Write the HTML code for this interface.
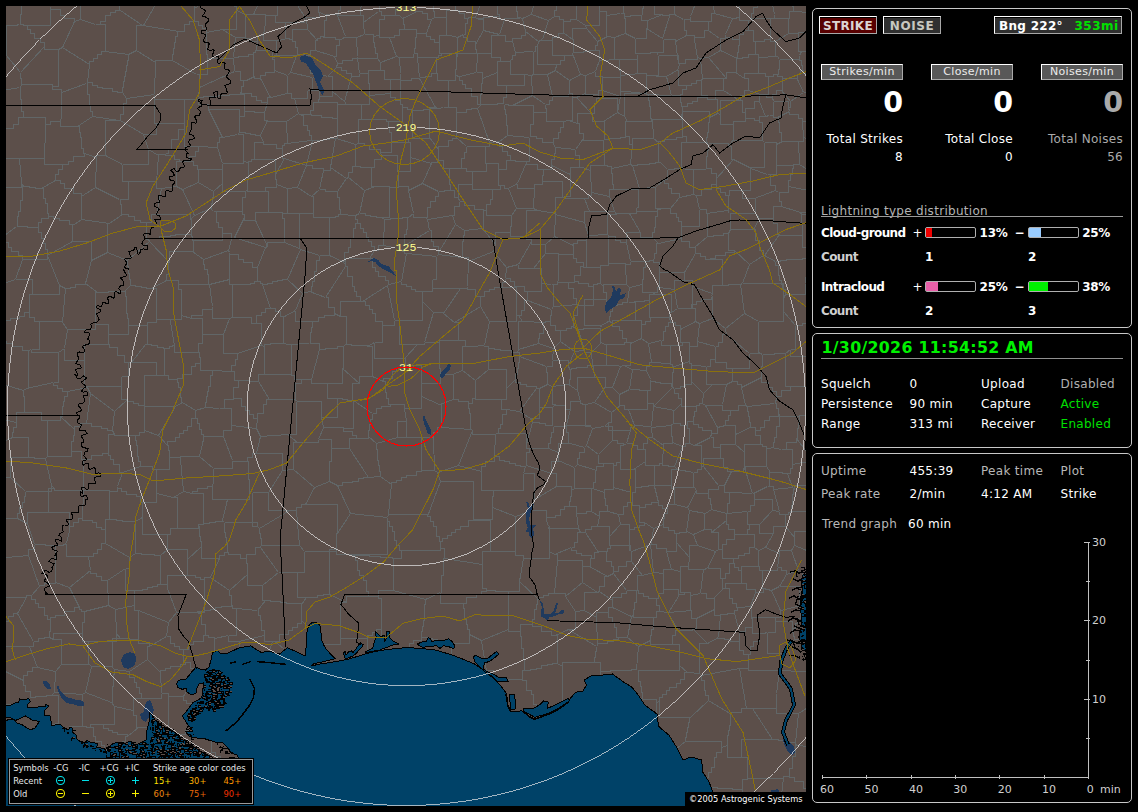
<!DOCTYPE html>
<html><head><meta charset="utf-8"><title>Lightning Map</title>
<style>
html,body{margin:0;padding:0;background:#000;}
body{width:1138px;height:812px;position:relative;overflow:hidden;font-family:"DejaVu Sans","Liberation Sans",sans-serif;color:#fff;}
.map{position:absolute;left:6px;top:6px;}
.legend{position:absolute;left:9px;top:759px;width:242px;height:43px;border:1px solid #9a9a9a;background:#000;box-sizing:content-box;outline:1px solid #000}
.lt{position:absolute;font-family:"DejaVu Sans Condensed","DejaVu Sans",sans-serif;font-size:9.3px;line-height:12px;color:#e8e8e8;white-space:nowrap}
.sym{position:absolute}
.copy{position:absolute;left:685px;top:792px;width:121px;height:14px;background:#000;color:#fff;font-family:"DejaVu Sans Condensed","DejaVu Sans",sans-serif;font-size:9.2px;line-height:14px;white-space:nowrap;text-align:left;padding-left:4px;box-sizing:border-box}
.pnl{position:absolute;border:1px solid #c8c8c8;border-radius:5px;box-sizing:content-box}
.btn{position:absolute;border:1px solid;border-color:#fff #a8a8a8 #a8a8a8 #fff;text-align:center;white-space:nowrap;box-sizing:content-box}
.btn.b{font-weight:bold;font-size:12px;line-height:18px;height:16px;overflow:visible;box-shadow:inset 0 1px 0 #000}
.btn.s{font-size:11px;line-height:14px;letter-spacing:.35px}
.big{position:absolute;font-weight:bold;font-size:28.5px;line-height:34px}
.t{position:absolute;font-size:12px;line-height:14px;white-space:nowrap;letter-spacing:.3px}
.t.r{text-align:right}
.t.b{font-weight:bold;letter-spacing:-.6px}
.hl{position:absolute;height:1px;background:#9a9a9a}
.bar{position:absolute;width:49px;height:9px;border:1px solid #b0b0b0;border-radius:2px;background:#000}
.bar i{display:block;height:9px}
.date{position:absolute;font-weight:bold;font-size:15.8px;line-height:20px;color:#00f200;white-space:nowrap;letter-spacing:.3px}
.graph{position:absolute}
.gt{font-family:"DejaVu Sans","Liberation Sans",sans-serif;font-size:11px;fill:#d0d0d0}
</style></head>
<body>
<svg class="map" width="800" height="800" viewBox="0 0 800 800" shape-rendering="crispEdges">
<rect width="800" height="800" fill="#5c4f4a"/>
<g transform="translate(.5 .5)"><path d="M783 767 L783 762 L785 762 L786 762 L786 756 L786 750 L788 750 L789 750 L789 745 L789 739 L790 739 M783 767 L783 771 L788 771 L788 775 L792 775 L797 775 L797 778 L797 782 L801 782 L801 786 L805 786 L810 786 L810 789 M814 741 L790 739 M783 767 L783 770 L780 770 L777 770 L777 772 M777 772 L772 813 M275 688 L255 688 L255 694 M275 688 L280 688 L280 692 L280 695 L286 695 L291 695 L291 698 M256 725 L255 694 M256 725 L256 728 L261 728 L261 731 L265 731 L265 734 L270 734 M291 698 L289 698 L289 703 L289 707 L286 707 L286 712 L283 712 L283 716 L281 716 L278 716 L278 720 L278 725 L275 725 L275 729 L273 729 L270 729 L270 734 M254 758 L234 758 L234 746 M254 758 L276 748 M234 746 L235 730 M235 730 L235 729 L241 729 L246 729 L246 728 L251 728 L251 726 L256 726 L256 725 M276 748 L270 734 M475 634 L502 623 M475 634 L480 664 M502 623 L502 625 L514 625 M480 664 L487 664 L487 673 M516 669 L516 673 L487 673 M516 669 L516 664 L519 664 M519 664 L518 664 L518 658 L518 653 L518 653 L517 653 L517 647 L517 642 L516 642 L515 642 L515 636 L515 630 L515 630 L514 630 L514 625 M235 730 L221 716 M251 692 L255 694 M251 692 L251 694 L245 694 L240 694 L240 695 L240 696 L234 696 L229 696 L229 698 L229 699 L223 699 M221 716 L223 699 M250 447 L254 430 M250 447 L276 447 L276 464 M254 430 L281 428 M276 464 L287 463 M287 463 L287 436 L291 436 M281 428 L291 436 M-8 279 L9 273 M-2 232 L-2 236 L2 236 L2 241 L5 241 L5 245 L9 245 L12 245 L12 249 L16 249 L16 253 M9 273 L16 253 M-2 229 L10 220 M10 220 L10 220 L15 220 L21 220 L21 221 L21 221 L26 221 L26 221 L32 221 M32 221 L32 226 L33 226 L35 226 L35 232 L37 232 L37 237 L39 237 L39 243 L41 243 L41 248 M16 253 L41 253 L41 248 M277 787 L284 813 M277 787 L289 762 M318 815 L320 815 L320 782 M320 782 L316 782 L316 779 L316 776 L311 776 L307 776 L307 773 L302 773 L302 770 L302 767 L298 767 L293 767 L293 765 L293 762 L289 762 M291 698 L302 698 L302 699 M302 699 L302 704 L303 704 L304 704 L304 710 L304 715 L305 715 L306 715 L306 720 L307 720 L307 726 L307 731 L309 731 L310 731 L310 736 M276 748 L287 754 M310 736 L310 740 L305 740 L301 740 L301 743 L296 743 L296 747 L291 747 L291 750 L291 754 L287 754 M254 758 L249 773 M234 746 L234 751 L229 751 L229 755 L223 755 M223 755 L223 778 L223 778 M249 773 L223 778 M277 787 L256 783 M289 762 L288 762 L288 758 L287 758 L287 754 M249 773 L256 773 L256 783 M256 783 L256 805 L244 805 M347 659 L341 659 L341 659 L341 659 L335 659 L335 659 L329 659 L323 659 L323 659 M347 659 L369 659 L369 673 M369 673 L367 673 L367 702 M316 689 L316 692 L321 692 L326 692 L326 696 L331 696 L331 699 L331 702 L335 702 L335 705 L340 705 L340 708 L345 708 M316 689 L323 689 L323 659 M345 708 L367 702 M572 522 L542 522 L542 520 M572 522 L570 507 M570 507 L570 500 L563 500 M542 520 L540 514 M563 500 L558 500 L558 503 L554 503 L554 506 L554 509 L549 509 L549 511 L545 511 L540 511 L540 514 M480 664 L475 664 L475 665 L470 665 L470 666 L465 666 L465 667 L460 667 L460 668 L460 669 L455 669 L455 670 L450 670 L444 670 L444 671 L444 672 L439 672 M462 709 L478 709 L478 704 M462 709 L437 691 M487 673 L478 673 L478 704 M437 691 L439 672 M475 634 L463 628 M446 637 L463 637 L463 628 M446 637 L445 637 L445 643 L445 649 L444 649 L444 654 L442 654 L441 654 L441 660 L441 666 L440 666 L439 666 L439 671 M439 671 L439 672 M631 664 L673 664 L673 659 M631 664 L632 664 L632 670 L632 675 L633 675 L634 675 L634 680 L635 680 L635 686 L636 686 L636 691 M636 691 L636 693 L643 693 L650 693 L650 696 M681 666 L678 666 L678 670 L678 673 L674 673 L674 677 L670 677 L670 681 L667 681 L663 681 L663 684 L660 684 L660 688 L656 688 L656 691 L653 691 L653 695 M681 666 L673 659 M650 696 L653 695 M613 706 L591 694 M613 706 L636 691 M630 663 L631 664 M630 663 L625 663 L625 664 L620 664 L620 664 L620 664 L614 664 L614 664 L609 664 L604 664 L604 665 L599 665 L599 665 L594 665 L594 665 M594 665 L591 694 M663 638 L644 638 L644 634 M663 638 L673 638 L673 659 M630 663 L632 640 M632 640 L644 634 M526 618 L526 620 L531 620 L535 620 L535 623 L535 625 L540 625 L545 625 L545 627 L545 629 L549 629 M526 618 L526 613 L527 613 L528 613 L528 608 L528 603 L530 603 L530 598 L531 598 L531 593 L532 593 M569 605 L559 590 M569 605 L569 623 L562 623 M562 623 L549 629 M532 593 L532 591 L537 591 L537 589 L542 589 L542 587 L548 587 M548 587 L559 587 L559 590 M519 664 L524 664 L524 663 L530 663 L530 662 L535 662 L535 660 L535 659 L541 659 L541 658 L546 658 L546 657 L551 657 M514 625 L514 618 L526 618 M551 657 L551 629 L549 629 M502 623 L502 585 L489 585 M489 585 L513 585 L513 575 M513 575 L532 593 M590 640 L562 623 M590 640 L590 645 L589 645 L589 651 L589 651 L588 651 L588 656 M588 656 L556 656 L556 660 M556 660 L551 657 M714 446 L714 441 L711 441 L707 441 L707 436 L707 431 L704 431 M714 446 L714 449 L714 449 L714 452 L713 452 M704 431 L688 439 M713 452 L697 452 L697 460 M697 460 L695 460 M695 460 L695 439 L688 439 M624 544 L624 539 L604 539 M624 544 L623 544 L623 523 M623 523 L623 518 L614 518 M614 518 L603 530 M604 539 L603 539 L603 535 L603 530 L603 530 M638 516 L633 516 L633 501 M638 516 L638 519 L633 519 L633 521 L628 521 L628 523 L623 523 M612 508 L614 518 M612 508 L617 508 L617 504 L617 500 L621 500 L621 496 L626 496 M626 496 L626 499 L630 499 L633 499 L633 501 M598 545 L595 545 L595 545 L592 545 L592 546 M598 545 L601 545 L601 542 L604 542 L604 539 M579 526 L592 546 M579 526 L579 523 L585 523 L585 520 L591 520 M591 520 L603 520 L603 530 M591 520 L593 510 M612 508 L602 505 M602 505 L593 505 L593 510 M572 522 L574 526 M570 507 L575 507 L575 507 L580 507 L580 506 L580 505 L585 505 M574 526 L574 526 L577 526 L579 526 L579 526 M585 505 L593 510 M598 486 L586 482 M598 486 L598 492 L599 492 L599 499 L601 499 L601 505 L602 505 M585 505 L585 482 M585 482 L586 482 M221 716 L205 725 M223 755 L223 753 L219 753 L214 753 L214 750 L209 750 L209 748 L209 746 L205 746 M205 725 L205 725 L205 746 M99 523 L95 523 L95 521 L90 521 L90 518 L90 516 L86 516 L86 514 L81 514 L76 514 L76 512 M99 523 L99 537 M99 537 L95 537 L95 540 L95 543 L91 543 L91 547 L87 547 L87 550 L82 550 M82 550 L60 550 L60 537 M76 512 L72 512 L72 516 L67 516 L67 520 L63 520 L63 524 M63 524 L60 537 M246 486 L243 484 M246 486 L262 486 M262 486 L276 464 M250 447 L246 447 L246 451 L241 451 L241 455 M241 455 L242 455 L242 461 L242 467 L242 467 L242 473 L242 473 L243 473 L243 478 L243 484 L243 484 M253 522 L283 504 M253 522 L253 527 L254 527 L254 532 L255 532 L255 538 L255 538 M255 538 L255 539 L293 539 M293 539 L290 505 M290 505 L290 504 L287 504 L283 504 L283 504 M251 520 L246 520 L246 486 M251 520 L253 522 M262 486 L262 504 L283 504 M256 579 L241 579 L241 568 M256 579 L272 566 M272 566 L254 541 M241 568 L241 563 L241 563 L241 557 L240 557 L240 557 L240 552 M254 541 L249 541 L249 545 L249 548 L244 548 L240 548 L240 552 M298 545 L298 566 L291 566 M298 545 L293 539 M291 566 L272 566 M255 538 L254 541 M77 484 L76 512 M77 484 L103 484 L103 485 M99 523 L99 513 L110 513 M103 485 L103 513 L110 513 M287 463 L308 481 M291 436 L312 436 L312 433 M325 455 L325 433 L312 433 M325 455 L323 455 L323 475 M323 475 L308 481 M290 505 L290 501 L295 501 L295 498 L299 498 M299 498 L308 481 M370 437 L362 430 M370 437 L370 443 L371 443 L371 443 L371 448 L371 454 L372 454 L372 459 L373 459 L373 465 L373 465 L374 465 L374 470 M374 470 L362 471 M362 471 L343 442 M362 430 L362 432 L350 432 M350 432 L343 432 L343 442 M325 455 L325 442 L343 442 M323 475 L331 479 M331 479 L336 479 L336 478 L336 476 L341 476 L346 476 L346 475 L352 475 L352 474 L352 472 L357 472 L357 471 L362 471 M6 431 L-19 443 M6 431 L6 426 L7 426 L7 421 L8 421 L10 421 L10 416 M10 416 L-24 408 M-7 318 L-4 318 L-4 324 L-2 324 L-2 329 L-2 335 L0 335 M0 335 L-18 335 L-18 367 M10 416 L10 406 L18 406 M-16 374 L17 384 M18 406 L18 406 L18 400 L18 400 L18 395 L18 390 L17 390 L17 390 L17 384 M22 344 L16 344 L16 342 L16 340 L11 340 L6 340 L6 337 L0 337 L0 335 M22 344 L22 382 L20 382 M20 382 L17 384 M68 423 L54 410 M68 423 L68 429 L67 429 L67 435 L66 435 L65 435 L65 441 M41 450 L65 450 L65 441 M41 450 L41 414 L35 414 M35 414 L54 414 L54 410 M-10 9 L-10 19 L9 19 M9 19 L13 18 M13 18 L14 18 L14 13 L14 8 L14 8 L15 8 L15 3 L15 -2 L15 -2 L15 -7 L16 -7 L17 -7 L17 -13 L17 -13 L17 -18 M44 0 L44 19 L21 19 M21 19 L17 19 L17 18 L17 18 L13 18 M44 0 L44 3 L49 3 L54 3 L54 6 L54 9 L58 9 L58 12 L63 12 L68 12 L68 15 M52 43 L56 41 M52 43 L38 43 L38 40 M21 19 L21 23 L24 23 L24 27 L28 27 L28 32 L31 32 L34 32 L34 36 L38 36 L38 40 M56 41 L68 15 M81 -18 L74 -18 L74 13 M68 15 L74 13 M192 346 L193 346 L193 351 L194 351 L194 357 M192 346 L168 346 L168 339 M194 357 L189 357 L189 360 L185 360 L185 364 L185 368 L180 368 L176 368 L176 372 L171 372 L171 376 M158 369 L158 342 L163 342 M158 369 L162 369 L162 371 L162 373 L167 373 L171 373 L171 376 M168 339 L166 339 L166 340 L163 340 L163 342 M150 369 L150 356 L125 356 M150 369 L158 369 M125 356 L139 338 M163 342 L157 342 L157 341 L151 341 L151 340 L151 339 L145 339 L145 338 L139 338 M369 673 L394 658 M367 702 L379 711 M394 658 L396 658 L396 663 L396 668 L398 668 L398 672 L400 672 L402 672 L402 677 L402 682 L405 682 L405 686 L407 686 L409 686 L409 691 L411 691 L411 695 M379 711 L411 695 M437 691 L420 691 L420 698 M398 650 L398 658 L394 658 M398 650 L439 671 M420 698 L411 695 M419 735 L399 743 M419 735 L420 698 M379 711 L385 711 L385 735 M385 735 L389 735 L389 738 L389 740 L394 740 L399 740 L399 743 M419 735 L425 735 L425 737 L431 737 L431 738 L437 738 L437 740 L437 742 L443 742 M403 778 L399 743 M403 778 L428 778 L428 774 M428 774 L443 742 M462 709 L452 709 L452 739 M452 739 L452 742 L443 742 M488 710 L488 704 L478 704 M488 710 L493 710 L493 735 M452 739 L452 758 L470 758 M493 735 L493 739 L489 739 L489 743 L485 743 L485 747 L481 747 L478 747 L478 750 L474 750 L474 754 L470 754 L470 758 M447 788 L442 788 L442 784 L442 781 L438 781 L438 778 L433 778 L433 774 L428 774 M447 788 L452 788 L452 786 L457 786 L457 785 L462 785 L462 784 L466 784 L466 783 L466 781 L471 781 L471 780 L476 780 M470 758 L470 777 L478 777 M476 780 L478 777 M725 465 L721 465 L721 461 L717 461 L717 457 L717 452 L713 452 M725 465 L718 479 M697 460 L712 479 M718 479 L712 479 M737 462 L739 464 M737 462 L737 465 L725 465 M724 486 L718 486 L718 479 M724 486 L746 487 M739 464 L746 487 M766 504 L766 493 L748 493 M766 504 L753 518 M748 493 L748 499 L744 499 L744 505 L741 505 M741 505 L741 518 L746 518 M746 518 L746 518 L750 518 L753 518 L753 518 M808 385 L808 380 L784 380 M816 409 L793 409 L793 417 M793 417 L793 410 L774 410 M784 380 L784 384 L780 384 L775 384 L775 387 L775 390 L770 390 M768 397 L770 397 L770 402 L772 402 L772 407 M768 397 L769 397 L769 394 L770 394 L770 390 M772 407 L774 410 M784 343 L784 350 L801 350 M784 343 L779 347 M779 347 L779 380 L784 380 M693 667 L695 669 M693 667 L681 666 M695 669 L695 674 L696 674 L698 674 L698 679 L698 684 L699 684 L699 689 L700 689 L702 689 L702 694 M653 695 L653 711 L684 711 M702 694 L684 711 M330 773 L330 768 L329 768 L328 768 L328 762 L327 762 L327 756 L327 750 L326 750 L326 745 L325 745 L325 739 L324 739 M330 773 L357 770 M361 751 L359 751 L359 757 L358 757 L358 764 L358 770 L357 770 M361 751 L337 733 M337 733 L324 733 L324 739 M320 782 L330 782 L330 773 M310 736 L310 738 L317 738 L324 738 L324 739 M345 708 L337 708 L337 733 M385 735 L361 751 M302 699 L316 689 M223 778 L219 782 M219 782 L219 805 L232 805 M565 541 L565 544 L570 544 L570 547 L575 547 L575 549 L580 549 L585 549 L585 552 M565 541 L548 548 M548 548 L551 548 L551 554 M551 554 L576 554 L576 568 M576 568 L576 560 L583 560 M583 560 L584 560 L584 556 L584 552 L585 552 M574 526 L571 526 L571 531 L571 536 L568 536 L568 541 L565 541 M592 546 L588 546 L588 549 L588 552 L585 552 M543 545 L548 548 M543 545 L543 520 L542 520 M543 545 L543 552 L517 552 M513 575 L517 552 M548 587 L551 554 M576 576 L559 590 M576 576 L576 576 L576 572 L576 568 L576 568 M591 639 L590 611 M591 639 L590 640 M569 605 L578 604 M590 611 L578 604 M576 576 L591 586 M578 604 L578 586 L591 586 M668 404 L667 404 L667 417 M668 404 L675 397 M687 415 L681 415 L681 422 M687 415 L687 410 L688 410 L688 405 L689 405 L690 405 L690 400 M690 400 L675 400 L675 397 M667 417 L674 417 L674 419 L681 419 L681 422 M687 415 L687 418 L692 418 L692 421 L696 421 L696 424 L700 424 L705 424 L705 427 M704 431 L705 427 M688 439 L683 437 M681 422 L683 422 L683 437 M583 560 L601 570 M591 586 L593 585 M601 570 L598 570 L598 575 L598 580 L596 580 L593 580 L593 585 M790 739 L789 737 M792 707 L789 737 M792 707 L819 690 M680 525 L683 504 M680 525 L680 526 L676 526 L673 526 L673 527 M661 502 L661 498 L668 498 M661 502 L661 507 L660 507 L658 507 L658 512 L657 512 L657 518 M668 498 L681 501 M681 501 L683 504 M673 527 L668 527 L668 524 L662 524 L662 521 L657 521 L657 518 M638 516 L647 522 M633 501 L639 501 L639 500 L639 498 L645 498 L645 496 L652 496 M652 496 L652 499 L656 499 L656 502 L661 502 M647 522 L657 518 M625 545 L644 538 M625 545 L624 544 M647 522 L645 538 M644 538 L645 538 M563 500 L563 495 L564 495 L564 495 L564 490 L565 490 L565 484 M585 482 L568 482 M565 484 L568 482 M627 463 L614 463 L614 456 M627 463 L629 463 L629 481 M607 481 L607 459 M607 481 L625 486 M607 459 L610 459 L610 458 L610 456 L614 456 M625 486 L629 486 L629 481 M598 486 L598 483 L602 483 L607 483 L607 481 M586 482 L587 482 L587 476 L589 476 L589 470 L589 464 L590 464 M590 464 L590 460 L594 460 L597 460 L597 457 M597 457 L607 457 L607 459 M626 496 L626 486 L625 486 M205 725 L205 719 L185 719 M205 746 L195 754 M179 745 L195 745 L195 754 M179 745 L173 728 M173 728 L179 728 L179 724 L185 724 L185 719 M223 699 L220 695 M220 695 L220 696 L215 696 L210 696 L210 696 L204 696 L204 696 L199 696 L199 696 L199 697 L193 697 L193 697 L188 697 L182 697 L182 697 M185 719 L185 697 L182 697 M189 668 L177 690 M189 668 L208 666 M220 695 L213 669 M208 666 L213 669 M182 697 L180 697 L180 694 L177 694 L177 690 M-4 773 L-2 773 L-2 779 L1 779 L1 786 M46 755 L46 776 L45 776 M46 755 L46 747 L25 747 M45 776 L1 786 M25 747 L-5 754 M25 747 L29 720 M29 720 L21 714 M21 714 L-5 714 L-5 729 M177 643 L182 643 L182 641 L182 638 L187 638 L187 635 L192 635 L197 635 L197 632 L197 629 L202 629 M177 643 L177 656 L179 656 M179 656 L184 656 L184 662 L189 662 L189 668 M208 666 L208 632 M208 632 L208 631 L205 631 L202 631 L202 629 M291 566 L291 591 L300 591 M300 591 L295 598 M256 579 L256 594 L259 594 M259 594 L264 594 L264 595 L264 595 L269 595 L274 595 L274 596 L274 596 L280 596 L280 597 L285 597 L285 597 L290 597 L295 597 L295 598 M80 453 L75 453 L75 449 L75 445 L70 445 L65 445 L65 441 M80 453 L85 453 L85 451 L85 449 L91 449 L96 449 L96 447 L102 447 L102 445 M80 417 L74 417 L74 420 L68 420 L68 423 M80 417 L85 417 L85 418 L85 420 L90 420 L95 420 L95 421 L95 422 L101 422 L101 424 L106 424 M102 445 L102 428 L108 428 M106 424 L108 428 M80 453 L77 453 L77 484 M77 484 L77 484 M102 445 L102 449 L104 449 L104 453 L107 453 L107 458 L110 458 L113 458 L113 462 L113 466 L116 466 M103 485 L111 485 L111 480 M116 466 L111 480 M331 479 L344 507 M374 470 L385 478 M385 478 L382 508 M382 508 L381 511 M344 507 L381 511 M299 498 L331 498 L331 527 M344 507 L331 527 M298 545 L330 545 L330 543 M331 527 L330 527 L330 543 M323 588 L317 588 L317 589 L311 589 L311 590 L311 591 L305 591 L305 591 L300 591 M323 588 L323 543 L330 543 M330 543 L330 543 M49 576 L49 539 L56 539 M49 576 L49 577 L44 577 L38 577 L38 579 L33 579 L33 580 M28 538 L28 543 L25 543 L22 543 L22 549 M28 538 L28 538 L34 538 L39 538 L39 539 L39 539 L45 539 L45 539 L51 539 L56 539 L56 539 M22 549 L33 580 M-4 513 L-4 512 L4 512 L11 512 L11 512 M28 538 L21 517 M-10 552 L22 549 M21 517 L11 512 M63 524 L63 506 L42 506 M60 537 L56 539 M21 517 L21 506 L42 506 M77 484 L48 484 L48 482 M42 506 L42 482 L48 482 M9 273 L26 273 L26 288 M-6 317 L-1 317 L-1 316 L-1 314 L4 314 L4 312 L8 312 L13 312 L13 310 L18 310 L18 308 L18 306 L23 306 M26 288 L23 288 L23 306 M25 343 L33 343 L33 315 M25 343 L22 344 M23 306 L23 311 L28 311 L28 315 L33 315 M125 356 L122 356 M139 338 L141 338 L141 319 M141 319 L122 319 L122 312 M122 312 L122 328 L102 328 M102 328 L102 333 L102 333 L102 338 L103 338 M122 356 L118 356 L118 353 L118 349 L115 349 L111 349 L111 345 L111 341 L107 341 L103 341 L103 338 M702 15 L684 15 L684 10 M702 15 L705 15 L705 11 L705 7 L708 7 M691 -8 L684 10 M706 -6 L708 7 M405 74 L394 74 L394 67 M405 74 L394 74 L394 94 M394 67 L394 73 L383 73 M383 73 L384 73 L384 80 L384 87 L384 87 M394 94 L389 94 L389 91 L384 91 L384 87 M89 18 L74 13 M89 18 L94 18 L94 15 L99 15 L99 12 L99 9 L104 9 L104 6 L109 6 L109 4 L114 4 M111 -18 L111 -13 L112 -13 L113 -13 L113 -7 L113 -2 L113 -2 L113 4 L114 4 M26 288 L53 288 L53 279 M33 315 L38 315 L38 315 L44 315 L44 315 L50 315 L50 315 L56 315 L56 316 M56 316 L59 282 M59 282 L53 279 M41 248 L41 249 M53 279 L41 249 M32 221 L32 216 L35 216 L35 212 L39 212 L42 212 L42 207 M42 207 L42 210 L47 210 L47 212 L53 212 L53 214 L58 214 L63 214 L63 216 L63 218 L68 218 M68 218 L66 218 L66 235 M41 249 L66 235 M10 220 L11 220 L11 215 L11 210 L12 210 L12 205 L13 205 L14 205 L14 200 L14 194 L15 194 L16 194 L16 189 L16 189 L16 184 L16 179 L17 179 M42 207 L41 207 L41 202 L41 197 L39 197 L39 192 L38 192 L37 192 L37 187 L37 182 L35 182 M17 179 L17 180 L23 180 L23 181 L29 181 L29 182 L35 182 M447 788 L433 818 M476 780 L476 814 L478 814 M403 803 L403 779 M403 779 L362 777 M362 777 L359 777 L359 812 M403 778 L403 779 M357 770 L362 770 L362 777 M516 669 L516 674 L518 674 L520 674 L520 679 L520 684 L523 684 L525 684 L525 688 L527 688 L527 693 L527 698 L530 698 L530 703 L532 703 M488 710 L524 712 M532 703 L532 708 L528 708 L528 712 L524 712 M556 660 L556 702 M532 703 L556 702 M594 665 L594 656 L588 656 M591 694 L591 707 L565 707 M556 702 L561 702 L561 704 L565 704 L565 707 M613 706 L613 741 L618 741 M569 729 L565 707 M569 729 L595 747 M595 747 L595 746 L600 746 L600 744 L606 744 L606 743 L612 743 L618 743 L618 741 M653 735 L650 735 L650 696 M653 735 L653 737 L647 737 L647 738 L642 738 L636 738 L636 739 L636 740 L631 740 L631 742 L625 742 L625 743 L620 743 M620 743 L618 741 M508 775 L508 777 L478 777 M508 775 L521 775 L521 820 M598 420 L602 416 M598 420 L606 420 L606 434 M602 416 L602 424 L624 424 M606 434 L611 434 L611 437 L617 437 L617 439 M624 424 L620 437 M620 437 L617 439 M586 422 L580 439 M586 422 L598 420 M580 439 L592 448 M592 448 L606 434 M592 448 L592 457 L597 457 M614 456 L614 439 L617 439 M627 463 L639 455 M639 455 L639 443 L637 443 M637 443 L631 443 L631 441 L631 439 L626 439 L626 437 L620 437 M488 450 L493 450 L493 452 L493 454 L498 454 L498 455 L503 455 L503 457 L509 457 L509 459 L514 459 L514 460 L519 460 M488 450 L489 428 M490 427 L489 428 M490 427 L520 427 L520 438 M520 459 L519 460 M520 459 L520 446 L523 446 M520 438 L520 442 L521 442 L523 442 L523 446 M807 454 L790 432 M790 432 L791 432 L791 427 L791 422 L792 422 L792 417 L793 417 M729 438 L729 438 L729 433 L729 433 L729 428 M729 438 L738 446 M729 428 L744 421 M738 446 L738 438 L756 438 M756 438 L754 438 L754 434 L754 429 L752 429 L749 429 L749 424 M749 424 L749 421 L744 421 M714 446 L714 438 L729 438 M711 421 L711 427 L705 427 M711 421 L719 419 M719 419 L729 419 L729 428 M737 462 L738 462 L738 446 M719 419 L719 414 L722 414 L722 409 L724 409 L724 404 L726 404 M741 400 L741 405 L741 405 L742 405 L742 410 L743 410 L743 416 L744 416 L744 421 M741 400 L739 399 M726 404 L732 404 L732 401 L732 399 L739 399 M741 400 L768 397 M772 407 L772 410 L767 410 L763 410 L763 414 L758 414 L758 417 L758 421 L754 421 L754 424 L749 424 M739 807 L736 783 M690 810 L690 781 L700 781 M700 781 L705 781 L705 781 L711 781 L711 781 L711 782 L716 782 L721 782 L721 782 L721 782 L726 782 L726 783 L731 783 L731 783 L736 783 M777 772 L741 772 L741 773 M789 737 L789 736 L783 736 L777 736 L777 735 L777 734 L772 734 L772 733 L766 733 M766 733 L735 733 L735 751 M735 751 L741 751 L741 773 M741 773 L736 773 L736 783 M670 742 L679 735 M670 742 L671 763 M679 735 L715 735 L715 741 M671 763 L677 763 L677 766 L682 766 L682 768 L687 768 L687 771 L687 773 L692 773 L692 776 L697 776 M697 776 L697 771 L700 771 L702 771 L702 766 L705 766 L705 761 L708 761 L708 756 L708 751 L710 751 L710 746 L713 746 L715 746 L715 741 M653 735 L670 742 M684 711 L683 711 L683 716 L682 716 L682 721 L681 721 L681 726 L680 726 L680 731 L679 731 L679 735 M702 694 L725 708 M725 708 L724 708 L724 714 L724 719 L723 719 L723 724 L723 724 L722 724 L722 729 L721 729 L721 734 L721 739 L721 739 M721 739 L715 741 M700 781 L697 776 M721 739 L721 751 L735 751 M733 662 L742 662 L742 654 M733 662 L740 702 M742 654 L742 664 L773 664 M773 664 L770 687 M770 687 L770 702 L746 702 M740 702 L743 702 L743 702 L746 702 L746 702 M693 667 L693 637 L701 637 M695 669 L733 662 M701 637 L712 631 M712 631 L712 632 L718 632 L718 633 L724 633 L724 635 L729 635 M729 635 L733 635 L733 639 L733 644 L737 644 L737 648 L740 648 M740 648 L742 648 L742 654 M725 708 L725 706 L730 706 L735 706 L735 704 L735 702 L740 702 M792 707 L770 707 L770 687 M766 733 L746 702 M663 638 L666 638 L666 633 L666 629 L669 629 L669 624 L672 624 M701 637 L686 622 M672 624 L686 624 L686 622 M712 631 L714 609 M686 622 L690 622 L690 612 M690 612 L708 603 M714 609 L708 609 L708 603 M134 780 L134 756 L135 756 M134 780 L140 786 M163 764 L163 770 L163 770 L163 775 L164 775 L164 775 L164 780 M163 764 L160 764 L160 759 L156 759 L156 754 L153 754 L153 749 L153 744 L149 744 M135 756 L149 744 M140 786 L164 780 M361 632 L361 659 L347 659 M361 632 L361 629 L366 629 L366 626 L370 626 L370 623 L375 623 M398 650 L399 650 L399 647 L399 647 L399 644 M375 623 L375 644 L399 644 M446 637 L446 636 L441 636 L436 636 L436 635 L431 635 L431 634 L431 633 L426 633 L426 632 L421 632 L421 631 L415 631 M399 644 L399 641 L403 641 L403 637 L407 637 L407 634 L411 634 L415 634 L415 631 M463 628 L463 623 L461 623 L461 618 L460 618 L460 613 L459 613 L458 613 L458 607 L458 602 L457 602 L457 597 L455 597 M489 585 L489 584 L485 584 L480 584 L480 582 M480 582 L480 585 L475 585 L475 588 L470 588 L470 591 L465 591 L460 591 L460 594 L460 597 L455 597 M419 593 L419 593 L419 598 L418 598 L418 603 L418 609 L418 609 L418 614 L417 614 L417 614 L417 620 L416 620 L416 625 L415 625 L415 631 M419 593 L434 586 M455 597 L434 597 L434 586 M602 606 L602 601 L606 601 M602 606 L602 611 L604 611 L606 611 L606 616 L608 616 L608 621 L610 621 L610 626 L610 631 L612 631 M606 601 L625 610 M625 610 L621 631 M612 631 L616 631 L616 631 L621 631 L621 631 M590 611 L590 606 L602 606 M593 585 L606 594 M606 594 L606 597 L606 597 L606 601 L606 601 M591 639 L591 637 L596 637 L601 637 L601 635 L607 635 L607 633 L612 633 L612 631 M632 640 L621 631 M644 634 L644 629 L645 629 L645 623 L646 623 L647 623 L647 617 L647 617 L647 611 M627 609 L627 611 L647 611 M627 609 L625 610 M625 555 L636 569 M625 555 L620 555 L620 558 L620 560 L616 560 L612 560 L612 563 L612 565 L607 565 M607 565 L607 567 M607 567 L620 584 M636 569 L631 569 L631 583 M631 583 L631 584 L620 584 M625 545 L625 550 L625 550 L625 555 L625 555 M647 566 L644 538 M647 566 L636 569 M598 545 L600 545 L600 550 L600 555 L602 555 L605 555 L605 560 L607 560 L607 565 M601 570 L607 567 M606 594 L606 591 L610 591 L615 591 L615 587 L620 587 L620 584 M632 584 L630 584 L630 590 L630 596 L629 596 L628 596 L628 603 L627 603 L627 609 M632 584 L631 583 M632 584 L632 587 L637 587 L637 590 L642 590 L642 592 L647 592 M647 611 L650 611 L650 608 L650 605 L653 605 M647 592 L650 592 L650 599 L653 599 L653 605 M672 624 L661 606 M653 605 L661 606 M690 612 L685 612 L685 604 M685 604 L662 606 M661 606 L662 606 M773 547 L773 544 L785 544 M773 547 L771 561 M771 561 L775 561 L775 564 L780 564 L780 568 M780 568 L792 564 M792 564 L785 544 M791 600 L793 600 L793 589 M791 600 L774 604 M793 589 L793 580 L773 580 M774 604 L765 584 M765 584 L773 580 M780 568 L773 580 M792 564 L792 566 L796 566 L796 568 L800 568 M793 589 L793 585 L796 585 L799 585 L799 582 M799 582 L799 568 L800 568 M771 561 L771 564 L756 564 M765 584 L757 582 M756 564 L756 564 L756 570 L756 576 L756 576 L756 582 L757 582 M629 481 L635 481 L635 480 L642 480 L642 480 L642 479 L648 479 M639 455 L639 459 L651 459 M651 459 L648 459 L648 479 M652 496 L648 480 M648 479 L648 480 M702 487 L702 483 L707 483 L712 483 L712 479 M702 487 L702 492 L703 492 L704 492 L704 498 L705 498 L705 503 M724 486 L723 486 L723 491 L723 497 L722 497 L721 497 L721 502 L721 507 L720 507 M705 503 L720 507 M690 484 L681 501 M690 484 L690 487 L702 487 M683 504 L699 507 M705 503 L699 507 M746 487 L747 487 M747 487 L748 487 L748 493 M741 505 L720 507 M720 507 L720 507 M664 419 L665 419 L665 425 L665 430 L666 430 L666 436 L666 436 M664 419 L645 421 M645 421 L646 431 M646 431 L657 439 M666 436 L666 437 L661 437 L657 437 L657 439 M667 417 L664 419 M676 440 L679 440 L679 438 L679 437 L683 437 M676 440 L666 436 M668 404 L647 400 M645 420 L647 400 M645 420 L645 421 M637 443 L637 437 L641 437 L641 431 L646 431 M624 424 L624 421 L626 421 L628 421 L628 419 M645 420 L628 419 M656 457 L653 457 L653 458 L653 459 L651 459 M656 457 L657 439 M676 440 L668 460 M656 457 L656 459 L662 459 L662 460 L668 460 M46 755 L59 746 M52 717 L29 720 M52 717 L63 726 M59 746 L63 726 M219 782 L192 782 L192 784 M193 801 L192 801 L192 784 M179 745 L163 764 M195 754 L195 783 L191 783 M164 780 L166 781 M166 781 L191 783 M192 784 L191 783 M45 689 L52 689 L52 717 M45 689 L48 686 M63 726 L63 720 L76 720 M76 720 L76 715 L76 715 L76 709 L76 709 L76 704 L76 704 L76 704 L76 699 L76 699 L76 694 L76 694 L76 688 M48 686 L76 688 M105 696 L106 696 L106 691 L106 691 L106 685 L106 680 L107 680 L107 674 L107 674 L107 668 L108 668 L108 663 L108 663 M105 696 L79 686 M108 663 L106 661 M79 686 L85 660 M106 661 L106 660 L85 660 M84 564 L63 581 M84 564 L84 567 L90 567 L90 570 L95 570 L95 574 L101 574 M101 574 L102 599 M63 581 L73 601 M102 599 L78 605 M73 601 L73 603 L75 603 L75 605 L78 605 M82 550 L84 564 M49 576 L63 581 M123 551 L99 537 M123 551 L123 562 L119 562 M119 562 L101 574 M33 580 L25 589 M25 589 L25 593 L29 593 L29 597 L32 597 L32 601 L35 601 L38 601 L38 605 L38 609 L41 609 L41 613 L44 613 M44 613 L44 611 L49 611 L49 609 L54 609 L58 609 L58 607 L58 605 L63 605 L68 605 L68 603 L68 601 L73 601 M43 631 L47 633 M43 631 L38 631 L38 632 L32 632 L32 634 L32 635 L27 635 M47 633 L55 633 L55 658 M27 635 L27 640 L23 640 M23 640 L31 661 M31 661 L49 665 M49 665 L55 658 M76 627 L47 627 L47 633 M76 627 L76 627 L76 621 L76 616 L77 616 L78 616 L78 611 L78 605 L78 605 M44 613 L44 613 L44 619 L44 619 L44 625 L43 625 L43 631 M11 607 L20 591 M11 607 L27 635 M25 589 L20 589 L20 591 M82 635 L82 658 L83 658 M82 635 L76 635 L76 627 M83 658 L55 658 M48 686 L49 665 M79 686 L76 688 M85 660 L83 658 M11 607 L7 607 L7 610 L2 610 L2 612 L2 615 L-3 615 L-3 618 L-7 618 M23 640 L-6 640 L-6 649 M17 674 L-3 664 M17 674 L17 679 L19 679 L19 685 L21 685 L24 685 L24 691 M24 691 L19 697 M19 697 L19 698 L-17 698 M31 661 L26 661 L26 665 L21 665 L21 669 L17 669 L17 674 M45 689 L40 689 L40 690 L34 690 L34 690 L29 690 L29 690 L29 691 L24 691 M21 714 L21 708 L20 708 L20 703 L20 703 L20 697 L19 697 M370 437 L391 431 M385 478 L385 476 L390 476 L390 474 L395 474 L395 471 L400 471 L400 469 L405 469 L410 469 L410 467 L410 465 L415 465 M391 431 L415 431 L415 465 M384 398 L398 398 L398 402 M384 398 L382 398 L382 392 L380 392 L380 386 L379 386 L379 381 L379 375 L377 375 M399 359 L394 359 L394 362 L390 362 L390 365 L386 365 L386 368 L386 372 L381 372 L377 372 L377 375 M399 359 L415 359 L415 377 M415 377 L415 377 L415 390 M415 390 L415 402 L398 402 M384 398 L384 400 L379 400 L375 400 L375 402 L370 402 L370 405 L370 407 L366 407 M366 407 L366 413 L365 413 L364 413 L364 418 L363 418 L363 424 L362 424 L362 430 M391 431 L391 415 L400 415 M398 402 L400 415 M433 343 L433 334 L452 334 M433 343 L433 362 L434 362 M434 362 L434 368 L446 368 M456 364 L446 368 M456 364 L456 340 L465 340 M452 334 L459 334 L459 337 L459 340 L465 340 M399 359 L399 352 L398 352 M415 377 L434 377 L434 362 M433 343 L433 336 L418 336 M398 352 L411 338 M418 336 L418 338 L411 338 M251 520 L251 516 L218 516 M240 552 L234 552 L234 550 L234 548 L228 548 L222 548 L222 546 M222 546 L221 546 L221 541 L221 536 L221 536 L220 536 L220 531 L219 531 L219 526 L218 526 L218 521 L218 516 L218 516 M191 605 L192 607 M191 605 L198 605 L198 573 M192 607 L192 606 L198 606 L198 604 L204 604 L204 603 L209 603 L209 601 L215 601 L215 600 L220 600 L226 600 L226 599 M198 573 L198 571 L204 571 M204 571 L223 584 M223 584 L223 589 L224 589 L225 589 L225 594 L225 599 L226 599 M189 569 L161 569 L161 582 M189 569 L189 571 L194 571 L194 573 L198 573 M170 606 L161 582 M170 606 L175 606 L175 606 L180 606 L180 606 L180 606 L185 606 L191 606 L191 605 M222 629 L230 629 L230 602 M222 629 L208 632 M202 629 L199 629 L199 623 L199 618 L197 618 L195 618 L195 612 L195 607 L192 607 M230 602 L226 602 L226 599 M189 569 L181 569 L181 553 M181 553 L195 540 M195 540 L195 552 L213 552 M213 552 L204 571 M241 568 L223 584 M222 546 L218 546 L218 549 L213 549 L213 552 M230 602 L251 604 M259 594 L251 604 M334 621 L334 638 L318 638 M334 621 L334 596 L340 596 M340 596 L323 588 M295 598 L295 614 L295 614 M295 614 L318 638 M361 632 L334 632 L334 621 M323 659 L320 654 M320 654 L318 638 M312 433 L317 421 M350 432 L350 429 L346 429 L346 425 L341 425 L337 425 L337 422 M317 421 L317 421 L324 421 L330 421 L330 421 L337 421 L337 422 M281 428 L290 428 L290 395 M290 395 L315 395 L315 411 M317 421 L315 411 M366 407 L347 394 M337 422 L347 422 L347 394 M254 430 L250 422 M251 412 L250 422 M251 412 L251 407 L254 407 L257 407 L257 403 L257 398 L260 398 L260 393 L263 393 M290 395 L289 393 M263 393 L268 393 L268 393 L274 393 L274 393 L279 393 L279 393 L284 393 L284 393 L289 393 L289 393 M263 393 L252 375 M289 393 L289 377 L295 377 M295 377 L295 373 L292 373 L288 373 L288 369 L285 369 L285 365 M285 365 L285 368 L257 368 M252 375 L252 368 L257 368 M150 369 L138 369 L138 399 M171 376 L172 376 L172 381 L174 381 L174 386 L174 391 L175 391 L175 396 L176 396 M138 399 L139 400 M176 396 L169 400 M139 400 L139 400 L169 400 M199 401 L213 402 M199 401 L199 396 L200 396 L200 390 L201 390 L201 385 L202 385 L202 380 L203 380 L204 380 L204 375 L204 369 L205 369 L206 369 L206 364 M213 402 L218 402 L218 397 L218 393 L222 393 L227 393 L227 388 M227 388 L227 381 L230 381 L232 381 L232 374 M206 364 L225 365 M232 374 L228 374 L228 370 L228 365 L225 365 M194 357 L194 364 L206 364 M176 396 L189 404 M189 404 L199 401 M251 412 L247 412 L247 408 L243 408 L243 404 L239 404 L239 400 L235 400 L235 396 L235 392 L231 392 L227 392 L227 388 M250 422 L225 419 M225 419 L225 402 L213 402 M252 375 L232 374 M192 346 L192 337 L196 337 M196 337 L196 328 L217 328 M217 328 L217 347 L231 347 M231 347 L231 353 L229 353 L229 359 L227 359 L225 359 L225 365 M193 450 L207 462 M193 450 L197 433 M197 433 L197 430 L217 430 M217 430 L226 454 M226 454 L226 462 L207 462 M189 404 L189 412 M189 412 L191 412 L191 417 L193 417 L193 423 L195 423 L195 428 L197 428 L197 433 M225 419 L225 424 L221 424 L217 424 L217 430 M241 455 L226 455 L226 454 M419 593 L387 584 M375 623 L375 592 L372 592 M387 584 L372 584 L372 592 M340 596 L340 590 L364 590 M364 590 L372 590 L372 592 M517 467 L528 467 L528 493 M517 467 L517 484 L487 484 M486 501 L486 495 L486 495 L486 495 L486 490 L487 490 L487 484 M486 501 L509 510 M509 510 L526 504 M526 504 L528 493 M545 467 L550 467 L550 480 M545 467 L520 459 M550 480 L528 493 M519 460 L517 467 M488 450 L488 455 L483 455 L479 455 L479 460 L475 460 L475 465 M475 465 L475 484 L487 484 M540 514 L540 504 L526 504 M509 545 L509 549 L513 549 L517 549 L517 552 M509 545 L509 545 L509 539 L509 533 L509 533 L509 527 L509 527 L509 527 L509 522 L509 522 L509 516 L509 510 L509 510 M565 484 L565 480 L550 480 M20 591 L-14 591 L-14 573 M45 479 L45 485 L19 485 M45 479 L39 452 M39 452 L33 452 L33 452 L28 452 L28 451 L22 451 L22 451 M22 451 L4 451 L4 471 M4 471 L19 485 M11 512 L11 507 L13 507 L13 501 L14 501 L16 501 L16 496 L18 496 L18 490 L19 490 L19 485 M48 482 L45 479 M41 450 L39 452 M6 431 L22 431 L22 451 M18 406 L35 406 L35 414 M-14 473 L-14 472 L-8 472 L-2 472 L-2 471 L4 471 L4 471 M138 399 L132 399 L132 397 L127 397 L127 395 L121 395 L121 393 M122 356 L122 370 L115 370 M115 370 L115 393 L121 393 M80 417 L84 387 M106 424 L108 405 M108 405 L84 387 M47 376 L47 379 L51 379 L51 382 L56 382 L56 385 L61 385 M47 376 L52 376 L52 346 M61 385 L81 381 M78 354 L78 380 L82 380 M78 354 L58 354 L58 342 M81 381 L82 380 M52 346 L58 342 M20 382 L47 376 M54 410 L56 410 L56 405 L56 400 L57 400 L57 395 L58 395 L58 390 L60 390 L61 390 L61 385 M25 343 L25 346 L52 346 M84 387 L81 381 M103 338 L78 338 L78 354 M115 370 L115 380 L82 380 M61 323 L58 342 M61 323 L89 323 L89 318 M102 328 L102 318 L89 318 M108 405 L121 393 M61 323 L56 316 M680 29 L680 24 L679 24 L678 24 L678 19 L678 13 L677 13 M680 29 L669 35 M668 8 L677 13 M668 8 L663 8 L663 10 M656 32 L663 10 M656 32 L657 33 M657 33 L669 33 L669 35 M702 15 L702 15 L702 20 L702 20 L702 24 M680 29 L688 29 L688 34 M684 10 L684 13 L677 13 M702 24 L698 24 L698 28 L698 31 L693 31 L688 31 L688 34 M673 57 L672 57 M673 57 L679 57 L679 55 L679 53 L685 53 L691 53 L691 51 M672 57 L669 35 M688 34 L691 51 M668 8 L668 -8 L670 -8 M656 8 L641 14 M656 8 L648 8 L648 -7 M637 -3 L637 2 L636 2 L636 8 L635 8 M635 8 L635 14 L641 14 M656 32 L640 22 M663 10 L663 9 L660 9 L656 9 L656 8 M640 22 L641 22 L641 18 L641 14 L641 14 M640 22 L640 32 L629 32 M629 32 L619 27 M635 8 L635 9 L630 9 L624 9 L624 10 L618 10 L618 12 M619 27 L619 27 L619 22 L619 22 L619 17 L619 12 L618 12 M617 -7 L617 7 L614 7 M614 7 L618 7 L618 12 M432 143 L432 149 L432 149 L432 154 L431 154 M432 143 L423 131 M404 151 L404 136 L402 136 M404 151 L425 157 M402 136 L402 132 L406 132 M425 157 L425 156 L428 156 L431 156 L431 154 M423 131 L423 132 L417 132 L412 132 L412 132 L406 132 L406 132 M396 101 L401 101 L401 103 L405 103 L405 105 M396 101 L396 115 L380 115 M402 136 L385 136 L385 132 M406 132 L406 105 L405 105 M385 132 L385 126 L383 126 L383 121 L382 121 L382 115 L380 115 M672 57 L672 49 L652 49 M657 33 L657 46 L650 46 M650 46 L652 49 M629 32 L629 47 L632 47 M650 46 L644 46 L644 47 L644 47 L638 47 L638 47 L632 47 M661 163 L654 156 M661 163 L668 163 L668 162 L675 162 L675 160 M654 156 L652 156 L652 136 M683 136 L675 136 L675 160 M683 136 L680 136 L680 133 L680 130 L676 130 M676 130 L676 131 L670 131 L670 133 L664 133 L658 133 L658 135 L652 135 L652 136 M639 87 L640 87 L640 75 M639 87 L640 88 M640 88 L665 89 M640 75 L640 69 L650 69 M665 89 L660 70 M660 70 L650 70 L650 69 M680 79 L672 79 L672 63 M680 79 L680 83 L678 83 L676 83 L676 88 L674 88 L674 93 M672 63 L660 70 M674 93 L674 89 L665 89 M672 63 L673 57 M652 49 L652 69 L650 69 M566 47 L574 68 M566 47 L566 49 L558 49 M550 58 L554 58 L554 54 L558 54 L558 49 M550 58 L550 58 L550 61 L549 61 L549 64 M574 68 L563 74 M549 64 L563 74 M122 312 L121 312 L121 307 L120 307 L120 301 L120 296 L120 296 L120 290 L119 290 L119 285 L118 285 M89 318 L89 286 L91 286 M91 286 L96 286 L96 286 L96 286 L102 286 L102 285 L107 285 L107 285 L112 285 L112 285 L118 285 M59 282 L64 282 L64 281 L69 281 L69 280 L69 278 L74 278 L79 278 L79 277 M91 286 L79 277 M66 235 L85 235 L85 254 M79 277 L85 254 M38 40 L14 66 M9 19 L0 19 L0 49 M0 49 L14 66 M0 49 L-19 50 M52 43 L52 80 L46 80 M46 80 L46 78 L16 78 M14 66 L14 72 L15 72 L15 78 L16 78 M89 18 L99 18 L99 45 M56 41 L83 58 M83 58 L83 55 L87 55 L87 52 L91 52 L91 48 L95 48 L95 45 L99 45 M17 179 L15 177 M15 177 L15 181 L-4 181 M15 177 L13 152 M-2 137 L-2 152 L13 152 M549 749 L549 745 L524 745 M549 749 L551 749 L551 754 L551 759 L553 759 L553 765 L555 765 L555 770 L557 770 L557 775 L559 775 L561 775 L561 780 M554 786 L561 786 L561 780 M554 786 L549 786 L549 785 L544 785 L544 783 L539 783 L539 782 L534 782 L534 781 L529 781 L529 779 L529 778 L524 778 L524 777 L518 777 L513 777 L513 776 L508 776 L508 774 M508 774 L519 749 M519 749 L522 749 L522 747 L522 745 L524 745 M524 712 L524 745 M569 729 L569 749 L549 749 M595 747 L592 747 L592 752 L592 757 L590 757 L590 763 L588 763 L588 768 L585 768 L583 768 L583 773 L580 773 L580 778 M580 778 L574 778 L574 779 L574 779 L567 779 L561 779 L561 780 M508 775 L508 774 M548 818 L554 818 L554 786 M493 735 L493 738 L498 738 L503 738 L503 741 L509 741 L509 743 L509 746 L514 746 L514 749 L519 749 M620 743 L620 768 L626 768 M671 763 L657 763 L657 781 M626 768 L626 770 L632 770 L632 772 L637 772 L642 772 L642 774 L642 777 L647 777 L652 777 L652 779 L657 779 L657 781 M657 781 L657 805 L658 805 M683 355 L668 360 M683 355 L683 340 L683 340 M668 360 L666 360 L666 358 L664 358 L664 357 M676 336 L683 336 L683 340 M676 336 L676 339 L664 339 M664 357 L664 339 M617 359 L624 359 L624 337 M617 359 L614 360 M624 336 L624 337 M624 336 L618 336 L618 337 L618 338 L612 338 L612 338 L606 338 L600 338 L600 339 M614 360 L611 359 M600 339 L600 359 L611 359 M664 357 L645 356 M645 356 L642 337 M664 339 L655 339 L655 334 M655 334 L642 337 M617 359 L626 363 M624 337 L635 332 M645 356 L643 356 L643 360 L640 360 L640 364 M640 364 L626 363 M635 332 L642 337 M613 388 L613 388 L613 393 L613 399 L614 399 M613 388 L606 381 M606 381 L599 381 L599 380 M599 380 L588 396 M588 396 L605 406 M605 406 L614 399 M614 360 L606 381 M626 363 L623 383 M623 383 L613 388 M588 371 L599 371 L599 380 M588 371 L587 361 M611 359 L587 359 L587 361 M602 416 L605 416 L605 406 M628 419 L622 403 M622 403 L618 403 L618 401 L618 399 L614 399 M647 400 L647 397 L644 397 L641 397 L641 395 M647 400 L666 381 M641 395 L641 384 L638 384 M638 384 L644 384 L644 373 M644 373 L644 375 L649 375 L649 376 L654 376 L654 377 L659 377 L665 377 L665 379 M666 381 L665 379 M622 403 L641 403 L641 395 M647 400 L647 400 M675 397 L675 392 L672 392 L672 387 L670 387 L668 387 L668 382 M668 382 L666 381 M623 383 L623 383 L628 383 L633 383 L633 384 L633 384 L638 384 M640 364 L644 373 M668 360 L667 360 L667 366 L666 366 L666 372 L666 379 L665 379 M709 340 L712 340 L712 336 L716 336 L716 332 L716 328 L720 328 M709 340 L691 335 M691 335 L693 317 M719 322 L720 328 M719 322 L706 312 M693 317 L706 312 M770 390 L770 385 L766 385 L766 381 L762 381 L762 376 L759 376 L755 376 L755 371 M739 399 L735 381 M735 381 L755 371 M779 347 L779 347 L774 347 L768 347 L768 348 L762 348 L762 348 L756 348 L756 348 M755 371 L755 371 L755 366 L755 366 L755 360 L756 360 L756 354 L756 354 L756 348 M683 355 L683 357 L685 357 L685 359 L688 359 M668 382 L674 382 L674 380 L679 380 L679 378 L685 378 L685 375 M688 359 L685 359 L685 375 M767 483 L786 481 M767 483 L773 505 M784 504 L785 504 L785 499 L786 499 L786 493 L786 488 L787 488 L787 483 L788 483 M784 504 L784 506 L782 506 L782 508 L779 508 M788 483 L786 481 M779 508 L773 508 L773 505 M747 487 L761 480 M766 504 L773 505 M761 480 L767 480 L767 483 M779 520 L767 520 L767 527 M779 520 L779 520 L779 508 M767 527 L753 527 L753 518 M760 460 L764 466 M760 460 L760 442 L764 442 M764 466 L764 466 L770 466 L770 466 L776 466 L776 467 L781 467 M775 443 L765 441 M775 443 L786 443 L786 458 M786 458 L786 462 L784 462 L784 467 L781 467 M764 442 L765 441 M739 464 L739 460 L760 460 M761 480 L763 480 L763 473 L763 466 L764 466 M756 438 L756 440 L760 440 L760 442 L764 442 M786 481 L781 467 M790 432 L790 436 L785 436 L780 436 L780 439 L780 443 L775 443 M774 410 L773 410 L773 415 L773 420 L771 420 L770 420 L770 425 L770 431 L768 431 L768 436 L767 436 L767 441 L765 441 M807 454 L786 458 M806 479 L788 479 L788 483 M784 343 L789 343 L789 319 M789 319 L796 319 L796 317 L803 317 L803 316 M729 635 L733 635 L733 625 M714 609 L714 608 L721 608 L721 607 L728 607 M733 625 L728 607 M757 627 L746 627 L746 618 M757 627 L761 626 M761 626 L769 626 L769 615 M745 602 L745 607 L745 607 L745 607 L745 612 L746 612 L746 618 M745 602 L745 611 L769 611 M769 611 L769 615 M740 648 L744 648 L744 644 L744 640 L747 640 L747 635 L750 635 L753 635 L753 631 L753 627 L757 627 M733 625 L739 625 L739 621 L746 621 L746 618 M728 607 L728 604 L731 604 L731 601 L734 601 M734 601 L744 600 M744 600 L745 602 M774 604 L774 611 L769 611 M749 586 L757 586 L757 582 M749 586 L744 600 M796 607 L791 600 M796 607 L794 607 L794 612 L791 612 L791 617 L789 617 L789 622 L786 622 L786 626 M786 626 L786 615 L769 615 M786 626 L787 626 L787 630 L788 630 L788 633 M761 626 L761 647 L777 647 M788 633 L777 647 M773 664 L774 664 M814 666 L774 664 M774 664 L777 647 M680 525 L687 528 M699 507 L698 507 L698 523 M687 528 L698 523 M673 527 L670 527 L670 536 M645 538 L650 538 L650 540 L650 542 L655 542 L660 542 L660 545 M670 536 L670 545 L660 545 M685 604 L684 604 L684 589 M684 589 L694 587 M708 603 L708 592 L707 592 M694 587 L700 587 L700 589 L700 592 L707 592 M173 728 L167 728 L167 728 L161 728 L161 728 L161 728 L155 728 M177 690 L177 690 L162 690 M155 728 L162 728 L162 690 M149 744 L151 729 M155 728 L151 729 M484 545 L476 545 L476 558 M484 545 L484 514 L467 514 M476 558 L438 552 M467 514 L462 514 L462 517 L462 520 L458 520 L454 520 L454 523 L449 523 L449 526 L445 526 L445 529 L441 529 L441 532 L436 532 L436 535 M436 535 L434 535 L434 542 M434 542 L438 542 L438 552 M509 545 L484 545 M480 582 L476 582 L476 558 M467 513 L486 513 L486 501 M467 513 L467 514 M434 586 L435 586 L435 580 L435 580 L435 575 L435 569 L436 569 L437 569 L437 563 L437 558 L437 558 L437 552 L438 552 M421 510 L434 475 M421 510 L424 510 L424 515 L427 515 L427 520 L430 520 L430 525 L430 530 L433 530 L433 535 L436 535 M434 475 L467 475 L467 513 M678 586 L674 586 L674 565 M678 586 L678 588 L675 588 L672 588 L672 590 M672 590 L672 583 L657 583 M657 583 L657 583 L657 577 L657 577 L657 572 L657 567 L657 567 M674 565 L665 563 M657 567 L657 563 L665 563 M684 589 L684 586 L678 586 M662 606 L672 590 M647 592 L652 592 L652 587 L657 587 L657 583 M647 566 L657 567 M660 545 L665 563 M785 544 L788 539 M800 568 L800 564 L807 564 M810 548 L788 539 M779 520 L788 531 M759 541 L767 527 M759 541 L773 547 M788 531 L788 531 L788 539 M799 582 L799 585 L806 585 L806 589 L813 589 M796 607 L802 609 M788 633 L818 636 M671 463 L665 463 L665 479 M671 463 L687 466 M688 481 L668 481 L668 484 M688 481 L687 481 L687 466 M668 484 L668 482 L667 482 L665 482 L665 479 M668 460 L671 463 M648 480 L648 479 L654 479 L660 479 L660 479 L660 479 L665 479 M695 460 L695 463 L691 463 L691 466 L687 466 M690 484 L688 481 M668 498 L668 484 M568 461 L554 455 M568 461 L571 458 M571 458 L571 452 L573 452 L573 446 L576 446 L578 446 L578 441 M554 455 L552 455 L552 446 M552 446 L552 437 L564 437 M578 441 L564 437 M568 482 L568 461 M545 467 L545 455 L554 455 M590 464 L571 458 M580 439 L578 441 M523 446 L523 442 L542 442 M542 442 L552 446 M134 780 L113 780 L113 773 M114 745 L135 756 M114 745 L103 752 M103 752 L102 754 M113 773 L102 773 L102 754 M59 746 L83 746 L83 762 M103 752 L103 748 L100 748 L100 743 L98 743 L98 739 L95 739 L95 735 L92 735 L89 735 L89 730 L87 730 L87 726 L87 721 L84 721 M84 721 L84 721 L80 721 L80 720 L76 720 M102 754 L102 762 L83 762 M45 776 L51 785 M51 785 L79 783 M83 762 L79 783 M27 812 L27 809 L23 809 L19 809 L19 805 L15 805 L15 802 L15 799 L12 799 L12 795 L8 795 L4 795 L4 792 L4 789 L0 789 M-14 806 L0 789 M1 786 L0 789 M48 803 L51 785 M141 653 L123 665 M141 653 L154 666 M123 665 L123 671 L125 671 L128 671 L128 676 L130 676 L130 681 L133 681 L133 687 L135 687 L135 692 M154 666 L155 687 M155 687 L155 692 L135 692 M179 656 L179 658 L174 658 L174 660 L169 660 L164 660 L164 662 L159 662 L159 664 L154 664 L154 666 M162 690 L162 687 L155 687 M119 562 L119 584 L136 584 M136 584 L128 584 L128 599 M102 599 L109 603 M109 603 L128 599 M82 635 L110 635 L110 627 M109 603 L110 627 M106 661 L106 632 L114 632 M110 627 L114 632 M450 107 L450 106 L455 106 L460 106 L460 105 L460 103 L465 103 L465 102 L471 102 M450 107 L450 132 L451 132 M471 102 L483 136 M451 132 L460 140 M460 140 L479 140 M479 140 L483 140 L483 136 M621 115 L619 115 L619 130 M621 115 L645 115 L645 112 M647 132 L646 113 M647 132 L626 132 L626 138 M626 138 L623 138 L623 134 L623 130 L619 130 M645 112 L646 113 M638 87 L618 87 L618 110 M638 87 L639 87 M618 110 L621 115 M640 88 L642 88 L642 94 L643 94 L643 100 L644 100 L644 106 L644 112 L645 112 M676 130 L676 107 L675 107 M675 107 L675 113 L646 113 M652 136 L647 132 M626 159 L631 159 L631 159 L631 158 L637 158 L643 158 L643 157 L649 157 L649 157 L649 156 L654 156 M626 159 L624 158 M624 158 L626 138 M677 105 L676 105 L676 102 L676 102 L676 100 M677 105 L675 107 M674 93 L674 96 L675 96 L675 100 L676 100 M432 143 L432 140 L437 140 L442 140 L442 137 L442 134 L446 134 L446 132 L451 132 M431 154 L437 154 L437 158 L437 162 L442 162 M460 140 L460 146 L458 146 L458 152 L456 152 L455 152 L455 158 M455 158 L455 162 L442 162 M446 368 L447 368 L447 393 M415 390 L433 398 M447 393 L433 398 M456 364 L469 374 M447 393 L452 393 L452 394 L452 395 L457 395 L462 395 L462 397 M462 397 L466 397 L466 394 L466 392 L469 392 M469 374 L469 374 L469 380 L469 386 L469 386 L469 386 L469 392 M437 307 L454 282 M437 307 L448 316 M448 316 L474 300 M461 280 L461 282 L454 282 M461 280 L461 283 L465 283 L469 283 L469 287 L469 290 L474 290 M474 290 L474 290 L474 300 M452 334 L452 316 L448 316 M427 306 L418 336 M427 306 L427 306 L432 306 L437 306 L437 307 M483 315 L474 300 M483 315 L478 339 M478 339 L465 340 M427 306 L416 295 M411 338 L393 338 L393 314 M416 295 L416 314 L393 314 M398 352 L368 352 L368 336 M368 336 L376 336 L376 319 M376 319 L388 319 L388 314 M388 314 L388 314 L393 314 M426 273 L430 273 L430 250 M426 273 L426 285 L414 285 M414 285 L409 285 L409 283 L405 283 L405 280 L400 280 L400 278 L395 278 L395 275 M395 275 L400 247 M400 247 L430 250 M454 282 L426 282 L426 273 M416 295 L416 285 L414 285 M129 515 L136 511 M129 515 L129 515 L129 521 L129 521 L129 526 L129 531 L129 531 L129 531 L129 536 L129 542 L129 542 L129 542 L129 547 M136 511 L136 528 L164 528 M129 547 L135 547 L135 548 L135 548 L142 548 L148 548 L148 549 L154 549 L154 549 M164 528 L161 528 L161 543 M154 549 L161 543 M110 513 L110 514 L116 514 L116 515 L123 515 L123 515 L129 515 M111 480 L111 482 L115 482 L115 485 L120 485 L120 488 L125 488 L130 488 L130 490 L134 490 L134 493 L134 496 L139 496 M139 496 L136 496 L136 511 M123 551 L129 547 M136 584 L136 583 L141 583 L141 581 L146 581 L146 580 L151 580 L151 578 L156 578 M156 578 L154 578 L154 549 M181 553 L181 543 L161 543 M156 578 L161 578 L161 582 M150 487 L150 496 L139 496 M150 487 L167 491 M164 528 L164 522 L171 522 M167 491 L171 491 L171 522 M195 540 L195 535 L194 535 L194 535 L194 530 L193 530 L193 525 L193 520 L192 520 M171 522 L192 522 L192 520 M275 688 L275 675 L275 675 M320 654 L320 655 L294 655 M275 675 L275 655 L294 655 M295 614 L295 617 L291 617 L291 621 L286 621 L286 624 L282 624 L282 628 L277 628 L273 628 L273 631 L273 635 L268 635 M294 655 L268 635 M315 411 L331 411 L331 392 M295 377 L295 373 L305 373 M305 373 L305 377 L321 377 M321 377 L321 392 L331 392 M347 394 L346 394 M346 394 L341 394 L341 393 L336 393 L336 392 L331 392 L331 392 M340 337 L337 340 M340 337 L340 338 L345 338 L345 339 L351 339 L356 339 L356 339 L361 339 L361 340 M337 340 L337 362 L336 362 M361 340 L366 340 L366 370 M336 362 L353 377 M366 370 L353 370 L353 377 M305 373 L313 343 M313 343 L319 343 L319 343 L319 342 L325 342 L331 342 L331 341 L331 340 L337 340 M321 377 L336 377 L336 362 M377 375 L366 370 M368 336 L361 340 M346 394 L346 377 L353 377 M381 279 L382 278 M381 279 L356 295 M382 278 L382 274 L379 274 L379 270 L375 270 L372 270 L372 265 L369 265 L369 261 L366 261 L366 256 L366 252 L363 252 M356 295 L354 295 M354 295 L354 290 L352 290 L350 290 L350 285 L348 285 L348 280 L346 280 L346 275 L346 270 L343 270 L341 270 L341 265 L341 260 L339 260 M363 252 L339 252 L339 258 M339 258 L339 260 M388 314 L381 279 M395 275 L382 278 M376 319 L376 315 L373 315 L369 315 L369 311 L369 307 L366 307 L366 303 L363 303 L363 299 L359 299 L359 295 L356 295 M396 243 L377 239 M396 243 L396 245 L398 245 L398 247 L400 247 M368 244 L372 244 L372 242 L372 239 L377 239 M368 244 L363 252 M334 310 L334 295 L354 295 M334 310 L340 310 L340 337 M231 347 L255 339 M257 368 L258 368 L258 340 M255 339 L258 340 M152 429 L138 424 M152 429 L161 439 M128 429 L133 429 L133 426 L138 426 L138 424 M128 429 L129 429 L129 434 L130 434 L130 439 L131 439 L131 444 L131 450 L132 450 L132 455 L133 455 L134 455 L134 460 M146 463 L146 460 L134 460 M146 463 L163 463 L163 449 M163 449 L163 444 L162 444 L162 439 L161 439 M139 400 L138 400 L138 406 L138 412 L138 412 L138 418 L138 418 L138 418 L138 424 M169 400 L152 429 M189 412 L185 412 L185 416 L185 420 L181 420 L181 424 L177 424 L177 427 L173 427 L173 431 L169 431 L169 435 L165 435 L161 435 L161 439 M108 428 L108 429 L128 429 M116 466 L134 460 M150 487 L150 463 L146 463 M174 453 L177 485 M174 453 L174 451 L169 451 L163 451 L163 449 M177 485 L167 491 M174 453 L174 450 L193 450 M428 464 L427 431 M428 464 L431 466 M431 466 L452 459 M452 459 L466 424 M466 424 L465 423 M465 423 L435 421 M427 431 L427 426 L431 426 L431 421 L435 421 M415 465 L415 464 L428 464 M400 415 L400 431 L427 431 M382 508 L421 508 L421 510 M434 475 L431 466 M475 465 L452 459 M489 428 L466 428 L466 424 M490 427 L492 427 L492 422 L494 422 L494 418 L496 418 L496 413 L496 408 L498 408 L500 408 L500 403 M500 403 L495 403 L495 393 M462 397 L462 402 L463 402 L463 407 L463 407 L464 407 L464 413 L464 413 L464 418 L464 423 L465 423 M495 393 L469 393 L469 392 M433 398 L435 398 L435 421 M346 548 L381 548 L381 515 M346 548 L346 549 M346 549 L346 549 L352 549 L352 549 L358 549 L363 549 L363 550 L369 550 L369 550 L374 550 L374 551 L380 551 L380 551 L380 551 L386 551 L386 552 L391 552 M381 515 L383 515 L383 520 L386 520 L386 525 L388 525 L388 530 L388 534 L390 534 L390 539 L393 539 L393 544 L395 544 M395 544 L395 552 L391 552 M381 511 L381 515 M330 543 L330 548 L346 548 M364 590 L362 590 L362 585 L360 585 L360 579 L360 574 L357 574 L357 569 L355 569 L353 569 L353 564 L351 564 L351 559 L351 554 L349 554 L349 549 L346 549 M387 584 L387 552 L391 552 M434 542 L434 544 L395 544 M680 79 L685 79 L685 77 L690 77 L690 75 L690 74 L695 74 M676 100 L681 100 L681 97 L686 97 L686 95 L691 95 L691 93 L691 91 L696 91 L701 91 L701 89 M701 89 L695 89 L695 74 M694 52 L691 51 M694 52 L696 72 M696 72 L695 74 M683 136 L688 136 L688 136 L688 136 L694 136 L694 136 L700 136 M677 105 L703 105 L703 111 M703 111 L703 116 L702 116 L702 116 L702 121 L702 126 L701 126 L701 131 L701 131 L700 131 L700 136 M770 159 L787 159 L787 162 M770 159 L770 159 L770 138 M792 135 L793 158 M792 135 L776 135 M793 158 L787 158 L787 162 M776 135 L770 138 M811 169 L793 158 M787 162 L786 162 L786 168 L784 168 L784 174 L782 174 L782 180 M782 180 L802 184 M590 -3 L593 -3 L593 5 M614 7 L600 9 M593 5 L600 5 L600 9 M608 31 L619 27 M608 31 L601 30 M600 9 L600 30 L601 30 M546 35 L546 34 L541 34 L536 34 L536 33 M546 35 L546 31 L552 31 L552 27 L558 27 M536 33 L542 14 M558 27 L557 27 L557 17 M557 17 L557 13 L553 13 L553 10 L548 10 M548 10 L542 14 M531 40 L532 35 M531 40 L531 58 L550 58 M558 49 L546 49 L546 35 M532 35 L536 33 M551 -8 L550 -8 L550 -2 L550 4 L549 4 L548 4 L548 10 M525 8 L530 -13 M525 8 L542 14 M570 13 L564 13 L564 15 L557 15 L557 17 M570 13 L570 13 L570 -10 M570 13 L579 19 M579 19 L593 19 L593 5 M423 131 L423 102 L432 102 M450 107 L450 101 L437 101 M437 101 L432 102 M396 101 L396 98 L395 98 L394 98 L394 94 M405 74 L405 72 L413 72 M405 105 L405 104 L411 104 L417 104 L417 103 L423 103 L423 102 L423 101 L429 101 M413 72 L429 101 M429 101 L432 102 M474 98 L474 99 M474 98 L471 98 L471 94 L471 90 L468 90 L465 90 L465 86 L465 82 L462 82 L459 82 L459 78 L456 78 L456 74 L453 74 L453 70 M474 99 L471 102 M442 74 L442 101 L437 101 M442 74 L449 74 L449 69 M453 70 L449 69 M136 19 L137 19 M136 19 L114 4 M137 19 L156 -14 M425 -12 L426 -12 L426 -6 L426 -1 L427 -1 L427 -1 L427 5 L428 5 L428 11 M428 11 L425 13 M425 13 L421 13 L421 10 L421 7 L416 7 L416 5 L411 5 M411 5 L409 5 L409 -11 M597 115 L598 115 L598 133 M597 115 L611 106 M598 133 L603 133 L603 132 L603 132 L608 132 L614 132 L614 131 L619 131 L619 130 M618 110 L611 106 M611 106 L611 106 M613 53 L631 53 L631 48 M613 53 L613 53 M613 53 L613 59 L613 59 L613 64 L614 64 L614 64 L614 69 M614 69 L634 67 M634 67 L631 67 L631 48 M608 31 L608 53 L613 53 M632 47 L631 48 M640 75 L640 67 L634 67 M527 45 L527 68 L527 68 M527 45 L529 45 L529 42 L529 40 L531 40 M549 64 L541 68 M527 68 L534 68 L534 68 L541 68 L541 68 M563 74 L563 87 L562 87 M562 87 L562 90 L546 90 M541 68 L546 90 M54 112 L55 112 L55 107 L55 107 L55 102 L55 96 L55 96 L55 91 L55 91 L55 91 L55 86 M54 112 L54 120 L71 120 M55 86 L80 77 M71 120 L86 110 M80 77 L81 77 L81 83 L81 88 L82 88 L83 88 L83 94 L83 99 L84 99 L84 105 L85 105 L86 105 L86 110 M46 80 L46 83 L51 83 L55 83 L55 86 M83 58 L81 76 M80 77 L81 76 M136 19 L130 19 L130 44 M99 45 L122 48 M130 44 L122 48 M81 76 L86 76 L86 78 L86 79 L91 79 L91 81 L96 81 L96 82 L101 82 L106 82 L106 83 L106 85 L111 85 L111 86 L116 86 M122 48 L122 54 L121 54 L121 54 L121 59 L120 59 L120 65 L119 65 L119 70 L118 70 L118 75 L117 75 L117 81 L116 81 L116 86 M13 81 L-20 87 M13 81 L14 81 L14 87 L14 93 L15 93 L15 99 L15 99 L15 105 L16 105 L17 105 L17 111 M17 111 L12 111 L12 115 L12 118 L7 118 L7 122 L3 122 L-2 122 L-2 126 M16 78 L13 81 M54 112 L54 115 L49 115 L44 115 L44 118 L39 118 L39 122 M39 122 L39 111 L17 111 M39 122 L39 122 L39 129 L39 136 L38 136 M38 136 L38 152 L13 152 M141 319 L141 316 L145 316 L150 316 L150 313 M118 285 L124 279 M124 279 L129 279 L129 280 L129 280 L135 280 L135 281 L140 281 L140 282 L145 282 M145 282 L150 282 L150 313 M168 339 L164 316 M150 313 L164 313 L164 316 M196 337 L196 312 L185 312 M185 312 L175 309 M164 316 L164 313 L170 313 L175 313 L175 309 M587 785 L587 785 L587 790 L587 795 L588 795 L588 795 L588 800 L588 806 L588 806 L588 806 L588 811 L588 816 L589 816 L589 816 L589 821 M587 785 L615 788 M615 788 L617 788 L617 793 L619 793 L619 798 L622 798 L622 803 L624 803 L624 808 L624 813 L626 813 L626 818 L628 818 M580 778 L587 785 M626 768 L615 788 M542 442 L542 437 L543 437 L544 437 L544 431 L545 431 L545 426 L547 426 L547 420 M564 437 L562 437 L562 431 L562 426 L560 426 L560 420 L558 420 M558 420 L547 420 L547 420 M520 438 L526 416 M526 416 L533 416 L533 417 L539 417 L539 418 L539 419 L546 419 M547 420 L546 419 M579 398 L576 398 L576 397 L574 397 L574 395 M579 398 L579 420 L584 420 M574 395 L564 395 L564 403 M564 403 L560 418 M584 420 L584 419 L578 419 L572 419 L572 419 L572 419 L566 419 L560 419 L560 418 M571 384 L574 395 M571 384 L571 371 L588 371 M588 396 L579 398 M586 422 L584 420 M558 420 L560 418 M500 403 L513 405 M526 416 L524 412 M513 405 L524 412 M734 278 L736 277 M734 278 L738 307 M736 277 L777 277 L777 292 M738 307 L752 315 M752 315 L777 315 L777 305 M777 305 L777 298 L777 298 L777 298 L777 292 M719 322 L738 307 M720 328 L743 347 M743 347 L752 347 L752 346 M752 346 L752 315 L752 315 M789 319 L777 305 M756 348 L752 346 M716 279 L716 253 L699 253 M716 279 L722 279 L722 279 L722 278 L728 278 L728 278 L734 278 M699 253 L704 253 L704 252 L709 252 L709 250 L709 249 L714 249 L719 249 L719 247 L719 246 L724 246 L728 246 L728 244 M736 277 L743 258 M743 258 L728 244 M701 230 L707 230 L707 229 L712 229 L712 229 L717 229 L717 228 L717 227 L722 227 M701 230 L701 207 L700 207 M700 207 L721 204 M724 223 L722 227 M724 223 L724 207 L723 207 M723 207 L721 204 M688 241 L701 230 M688 241 L689 241 L689 244 L689 244 L689 247 M689 247 L694 247 L694 250 L699 250 L699 253 M728 244 L722 244 L722 227 M675 232 L675 220 L675 220 M675 232 L675 235 L679 235 L683 235 L683 238 L683 241 L688 241 M675 220 L693 220 L693 203 M693 203 L700 203 L700 207 M634 226 L634 231 L646 231 M634 226 L623 207 M646 231 L646 226 L647 226 L648 226 L648 221 L649 221 L649 215 L649 210 L650 210 L651 210 L651 205 M651 205 L630 205 L630 201 M623 207 L630 207 L630 201 M652 237 L646 231 M652 237 L650 237 L650 242 L650 247 L648 247 L648 252 L647 252 M620 236 L620 226 L634 226 M620 236 L624 255 M624 255 L624 255 L629 255 L634 255 L634 255 L634 255 L639 255 M647 252 L647 254 L643 254 L643 255 L639 255 M664 202 L673 191 M664 202 L664 202 L657 202 M657 202 L649 202 L649 181 M673 191 L673 187 L669 187 L665 187 L665 182 L662 182 L662 177 L658 177 L658 173 M658 173 L649 181 M675 220 L675 215 L672 215 L672 211 L670 211 L670 207 L667 207 L664 207 L664 202 M693 203 L690 189 M687 188 L690 189 M687 188 L673 191 M675 232 L652 237 M651 205 L651 203 L654 203 L654 202 L657 202 M633 182 L649 181 M633 182 L632 183 M632 183 L632 201 L630 201 M661 163 L661 173 L658 173 M678 163 L675 160 M678 163 L687 163 L687 188 M626 159 L633 182 M483 315 L510 315 L510 309 M474 290 L478 290 L478 287 L478 285 L483 285 L483 283 L488 283 L488 281 L493 281 M510 309 L510 281 L493 281 M500 261 L487 245 M500 261 L499 272 M462 255 L487 245 M462 255 L461 280 M499 272 L499 276 L496 276 L496 281 L493 281 M600 339 L595 336 M595 336 L585 346 M587 361 L586 359 M586 359 L585 346 M653 260 L653 266 L653 266 L653 266 L653 271 L653 276 L653 276 L653 276 L653 281 M653 260 L653 266 L678 266 M653 281 L668 283 M668 283 L668 274 L678 274 M678 266 L678 266 L678 270 L678 270 L678 274 M647 252 L647 256 L650 256 L653 256 L653 260 M639 255 L639 261 L638 261 L637 261 L637 267 L637 267 L637 273 L636 273 L636 278 M648 286 L651 286 L651 283 L651 281 L653 281 M648 286 L636 286 L636 278 M689 247 L678 266 M624 255 L624 258 L619 258 M636 278 L623 281 M619 258 L620 278 M623 281 L620 278 M815 288 L799 288 L799 277 M799 277 L801 252 M779 288 L777 292 M779 288 L799 288 L799 277 M769 255 L769 259 L770 259 L772 259 L772 264 L772 269 L773 269 L773 274 L775 274 L775 278 L776 278 L776 283 L778 283 L779 283 L779 288 M769 255 L774 255 L774 254 L780 254 L780 254 L780 253 L785 253 L785 253 L790 253 L796 253 L796 252 L801 252 L801 252 M676 336 L674 336 L674 323 M683 340 L691 340 L691 335 M693 317 L689 315 M689 315 L674 323 M655 334 L657 334 L657 330 L657 325 L659 325 L659 320 L662 320 L662 316 L664 316 M674 323 L674 319 L669 319 L669 316 L664 316 M686 280 L706 287 M686 280 L686 302 L679 302 M679 302 L680 302 M680 302 L685 302 L685 300 L685 298 L690 298 L690 295 L695 295 L695 293 L700 293 L705 293 L705 290 M706 287 L705 290 M716 279 L706 279 L706 287 M678 274 L686 274 L686 280 M668 283 L671 302 M671 302 L679 302 M706 312 L706 290 L705 290 M689 315 L689 302 L680 302 M735 381 L735 378 L731 378 L731 375 L726 375 M743 347 L743 362 L726 362 M726 362 L726 368 L726 368 L726 375 L726 375 M709 340 L709 340 L709 353 M726 362 L720 362 L720 359 L720 356 L714 356 L709 356 L709 353 M688 359 L700 360 M709 353 L704 353 L704 356 L704 360 L700 360 M720 507 L720 514 M698 523 L705 523 L705 526 M705 526 L720 514 M746 518 L743 518 L743 523 L741 523 L741 528 M741 528 L728 528 M728 528 L728 523 L725 523 L722 523 L722 518 L720 518 L720 514 M734 601 L730 601 L730 597 L726 597 L726 592 L723 592 L723 587 L723 582 L719 582 M707 592 L717 582 M719 582 L717 582 M749 586 L749 583 L744 583 L740 583 L740 580 L740 577 L735 577 M719 582 L719 577 L735 577 M121 730 L132 721 M121 730 L121 728 L116 728 L111 728 L111 726 L106 726 L106 724 L102 724 L102 722 L97 722 L97 720 L97 718 L92 718 M132 721 L130 721 L130 715 L130 709 L129 709 L127 709 L127 704 M127 704 L108 700 M92 718 L108 718 L108 700 M114 745 L114 740 L116 740 L116 735 L119 735 L119 730 L121 730 M151 729 L151 721 L132 721 M84 721 L84 718 L92 718 M135 692 L127 692 L127 704 M105 696 L108 700 M108 663 L123 665 M788 531 L788 525 L806 525 M784 504 L784 505 L790 505 L790 505 L795 505 L801 505 L801 506 L801 507 L806 507 M107 782 L107 784 L79 784 M107 782 L105 808 M79 784 L88 810 M113 773 L107 782 M79 783 L79 784 M140 786 L140 790 L138 790 L137 790 L137 795 L137 800 L135 800 L133 800 L133 804 M132 604 L132 604 L132 633 M132 604 L162 616 M160 630 L162 616 M160 630 L143 640 M143 640 L143 637 L138 637 L132 637 L132 633 M128 599 L128 604 L132 604 M114 632 L132 633 M170 606 L162 616 M177 643 L173 643 L173 640 L168 640 L168 637 L164 637 L164 633 L164 630 L160 630 M141 653 L141 640 L143 640 M349 160 L349 138 M349 160 L349 160 L354 160 L354 161 L360 161 L360 161 L365 161 M365 161 L368 161 L368 157 L368 153 L372 153 L375 153 L375 149 M352 137 L358 137 L358 139 L363 139 L363 141 L363 143 L369 143 L374 143 L374 146 M352 137 L349 138 M374 146 L375 149 M385 132 L385 146 L374 146 M380 115 L380 113 L366 113 M366 113 L352 113 L352 137 M404 151 L404 165 L391 165 M391 165 L391 149 L375 149 M369 180 L365 180 L365 161 M369 180 L358 184 M349 160 L346 160 L346 166 L342 166 L342 171 M358 184 L342 171 M479 140 L479 157 L480 157 M455 158 L455 162 L460 162 L460 165 L466 165 M480 157 L480 165 L466 165 M620 236 L614 236 L614 234 L609 234 L609 232 L609 230 L603 230 M619 258 L619 257 L602 257 M602 257 L602 230 L603 230 M585 186 L603 190 M585 186 L584 164 M584 164 L584 159 L598 159 M607 183 L603 183 L603 190 M607 183 L607 178 L606 178 L606 173 L606 173 L606 167 L605 167 L605 162 L605 162 M605 162 L605 160 L601 160 L601 159 L598 159 M624 158 L605 162 M632 183 L627 183 L627 183 L622 183 L622 183 L617 183 L617 183 L612 183 L612 183 L607 183 L607 183 M597 134 L598 133 M597 134 L598 159 M369 180 L376 180 L376 180 L383 180 L383 181 M353 207 L358 184 M353 207 L359 207 L359 208 L359 209 L364 209 L364 210 L370 210 L370 211 L375 211 M375 211 L383 211 L383 181 M425 157 L416 177 M391 165 L392 165 L392 177 M416 177 L402 184 M402 184 L402 180 L397 180 L392 180 L392 177 M392 177 L392 181 L383 181 M396 243 L397 240 M377 239 L378 213 M378 213 L378 213 L384 213 L384 212 L390 212 L396 212 L396 211 L402 211 L402 211 M397 240 L398 240 L398 234 L398 228 L399 228 L400 228 L400 223 L401 223 L401 217 L401 211 L402 211 M378 213 L375 211 M402 184 L407 207 M402 211 L407 207 M416 177 L432 185 M407 207 L407 211 L419 211 M432 185 L432 190 L429 190 L429 195 L427 195 L424 195 L424 201 L421 201 L421 206 L421 211 L419 211 M442 162 L443 162 L443 168 L443 173 L443 173 L443 178 L444 178 L444 178 L444 184 M432 185 L438 185 L438 184 L444 184 L444 184 M423 224 L421 213 M423 224 L397 240 M421 213 L419 211 M462 255 L462 251 L455 251 M430 250 L432 248 M455 251 L432 248 M423 224 L425 224 L425 230 L425 235 L427 235 L427 240 L430 240 L432 240 L432 246 M432 246 L432 248 M527 202 L531 204 M527 202 L527 202 L510 202 M531 204 L520 204 L520 230 M510 202 L505 209 M520 230 L504 230 L504 226 M504 226 L504 220 L505 220 L505 215 L505 215 L505 209 L505 209 M206 477 L206 480 L201 480 L201 482 L196 482 L191 482 L191 485 L186 485 L186 487 M206 477 L206 493 L221 493 M186 487 L197 487 L197 517 M221 493 L216 514 M216 514 L216 515 L209 515 L209 516 L203 516 L203 517 L197 517 M207 462 L207 477 L206 477 M177 485 L186 487 M243 484 L243 493 L221 493 M192 520 L192 518 L195 518 L197 518 L197 517 M218 516 L216 514 M260 654 L266 635 M260 654 L243 662 M232 635 L258 629 M232 635 L233 635 L233 659 M258 629 L258 635 L266 635 M233 659 L233 662 L243 662 M275 675 L275 671 L272 671 L272 667 L269 667 L269 662 L266 662 L266 658 L263 658 L260 658 L260 654 M268 635 L266 635 M251 692 L251 662 L243 662 M222 629 L222 635 L232 635 M251 604 L252 604 L252 609 L254 609 L254 614 L255 614 L255 619 L255 624 L257 624 L258 624 L258 629 M213 669 L233 659 M334 310 L328 307 M339 260 L319 291 M328 307 L328 301 L325 301 L322 301 L322 296 L322 291 L319 291 M313 249 L318 249 L318 249 L323 249 L323 249 M313 249 L313 254 L312 254 L310 254 L310 260 L310 265 L309 265 L308 265 L308 270 L308 275 L306 275 L306 280 L305 280 L305 285 L303 285 M339 258 L336 255 M319 291 L303 285 M336 255 L323 249 M368 244 L368 240 L365 240 L365 235 L362 235 L362 231 L360 231 L360 226 L357 226 L357 222 L354 222 L354 217 L351 217 M336 255 L338 255 L338 251 L338 246 L340 246 L342 246 L342 241 L344 241 L344 236 L344 232 L345 232 L347 232 L347 227 L347 222 L349 222 L349 217 L351 217 M353 207 L349 209 M351 217 L351 213 L350 213 L349 213 L349 209 M792 135 L797 135 L797 131 M797 131 L812 135 M761 168 L744 162 M761 168 L770 168 L770 159 M758 136 L758 161 L743 161 M758 136 L770 136 L770 138 M744 162 L743 161 M690 189 L695 189 L695 186 L695 183 L700 183 L705 183 L705 181 L705 178 L710 178 M721 204 L722 204 L722 197 L722 189 L723 189 M710 178 L710 182 L714 182 L714 186 L719 186 L719 189 L723 189 M761 168 L764 168 L764 174 L764 179 L766 179 L769 179 L769 184 M744 162 L744 184 L736 184 M736 184 L736 192 L748 192 M769 184 L748 192 M782 180 L782 186 L772 186 M769 184 L772 186 M723 207 L749 207 L749 207 M723 189 L723 184 L736 184 M748 192 L749 192 L749 207 M761 12 L768 12 L768 8 M761 12 L745 12 L745 13 M745 13 L745 7 L747 7 L747 1 L749 1 L751 1 L751 -4 L753 -4 L753 -10 M768 8 L765 -7 M784 -11 L785 -11 L785 -6 L786 -6 L786 0 L787 0 L787 5 M804 6 L787 5 M768 8 L768 12 L779 12 M787 5 L783 5 L783 9 L783 12 L779 12 M769 35 L782 27 M769 35 L769 50 L771 50 M771 50 L773 53 M773 53 L793 53 L793 49 M795 45 L793 49 M795 45 L792 45 L792 32 M792 32 L792 27 L782 27 M761 12 L764 12 L764 33 M764 33 L764 35 L769 35 M779 12 L782 12 L782 27 M776 72 L776 70 L774 70 L771 70 L771 68 M776 72 L791 72 L791 73 M791 73 L791 68 L794 68 L794 64 L797 64 M797 64 L796 64 L796 59 L795 59 L795 54 L793 54 L793 49 M771 68 L772 68 L772 63 L773 63 L773 58 L773 58 L773 53 M801 26 L792 26 L792 32 M702 24 L713 32 M694 52 L702 51 M702 51 L714 44 M714 44 L714 44 L714 38 L714 32 L713 32 M771 68 L767 68 L767 69 L767 70 L762 70 M762 70 L759 70 L759 69 L759 67 L755 67 M771 50 L752 51 M755 67 L752 67 L752 51 M764 33 L758 33 L758 34 L758 35 L751 35 M751 35 L749 35 L749 41 L749 48 L747 48 M747 48 L752 48 L752 51 M742 24 L737 24 L737 28 L733 28 L733 33 M742 24 L742 19 L742 19 L742 14 L742 14 M742 14 L733 14 L733 10 M719 28 L719 31 L726 31 L726 33 L733 33 M719 28 L726 12 M726 12 L730 12 L730 11 L733 11 L733 10 M751 35 L747 35 L747 29 L747 24 L742 24 M731 52 L731 46 L732 46 L732 46 L732 39 L733 39 L733 33 M731 52 L731 52 M731 52 L736 52 L736 51 L742 51 L742 49 L742 48 L747 48 M745 13 L742 14 M731 -8 L731 -2 L732 -2 L733 -2 L733 4 L733 10 L733 10 M714 44 L731 52 M713 32 L719 32 L719 28 M708 7 L726 12 M580 22 L591 35 M580 22 L566 22 L566 33 M567 46 L572 46 L572 46 L577 46 L577 45 L583 45 L583 45 L583 44 L588 44 M567 46 L567 33 L566 33 M588 44 L589 44 L589 39 L591 39 L591 35 M579 19 L580 22 M601 30 L591 35 M558 27 L566 33 M566 47 L567 46 M593 54 L589 65 M593 54 L593 44 L588 44 M574 68 L579 69 M589 65 L579 69 M593 54 L613 53 M527 45 L509 46 M532 35 L519 25 M509 46 L506 35 M506 35 L506 32 L510 32 L515 32 L515 29 L519 29 L519 25 M525 8 L516 12 M519 25 L516 12 M509 46 L509 49 L506 49 L506 53 L504 53 M504 53 L504 55 L494 55 M493 29 L499 29 L499 32 L499 35 L506 35 M493 29 L485 29 L485 47 M485 47 L485 51 L489 51 L494 51 L494 55 M474 98 L474 98 L474 93 L474 88 L475 88 L475 82 L475 82 L475 82 L475 77 L476 77 L476 72 M453 70 L470 66 M476 72 L476 66 L470 66 M271 -6 L271 9 L269 9 M256 -11 L247 8 M247 8 L259 8 L259 16 M269 9 L259 9 L259 16 M362 71 L362 67 L353 67 M362 71 L362 71 L362 77 L363 77 L363 83 L363 83 L363 89 M363 89 L363 98 L355 98 M353 67 L353 70 L345 70 M345 70 L338 95 M355 98 L355 98 L340 98 M340 98 L338 95 M383 73 L378 73 L378 68 L378 64 L372 64 M384 87 L363 89 M372 64 L362 64 L362 71 M366 113 L355 113 L355 98 M350 31 L358 28 M350 31 L351 50 M358 28 L367 28 L367 30 M351 50 L351 51 M351 51 L351 52 L371 52 M367 30 L367 36 L368 36 L368 41 L369 41 L369 47 L370 47 L371 47 L371 52 M393 51 L394 67 M393 51 L390 50 M372 64 L374 64 L374 56 M390 50 L374 56 M351 51 L353 67 M374 56 L371 52 M425 13 L420 27 M411 5 L396 12 M410 31 L410 27 L420 27 M410 31 L410 23 L398 23 M396 12 L397 12 L397 18 L398 18 L398 23 M393 51 L407 51 L407 47 M407 47 L408 47 L408 42 L409 42 L409 37 L409 31 L410 31 M390 50 L383 31 M398 23 L393 23 L393 26 L393 29 L388 29 L388 31 L383 31 M367 30 L373 29 M383 31 L373 31 L373 29 M373 -8 L373 -8 L373 -1 L373 5 L372 5 M372 5 L375 5 L375 9 L378 9 L378 13 M378 13 L378 9 L393 9 M389 -6 L389 9 L393 9 M358 28 L357 16 M357 16 L372 5 M373 29 L373 13 L378 13 M396 12 L393 9 M339 30 L331 9 M339 30 L339 31 L350 31 M357 16 L357 9 L354 9 M331 9 L354 9 M354 9 L355 -7 M614 71 L596 71 L596 75 M614 71 L614 85 L620 85 M620 85 L614 85 L614 90 M614 90 L596 84 M596 75 L596 84 L596 84 M614 69 L614 71 M589 65 L589 70 L593 70 L596 70 L596 75 M638 87 L620 85 M611 106 L614 90 M597 134 L577 134 L577 132 M576 161 L573 161 L573 155 L573 149 L571 149 L569 149 L569 143 M576 161 L584 164 M577 132 L569 143 M592 92 L592 90 M592 92 L590 92 L590 97 L588 97 L588 102 L588 107 L586 107 M592 90 L592 88 L585 88 L579 88 L579 87 M586 107 L585 107 M585 107 L570 91 M570 91 L579 87 M611 106 L611 92 L592 92 M596 84 L592 84 L592 90 M597 115 L586 115 L586 107 M579 69 L579 69 L579 75 L579 81 L579 81 L579 81 L579 87 M571 117 L573 117 L573 122 L573 127 L575 127 L577 127 L577 132 M571 117 L571 107 L585 107 M566 91 L570 91 M566 91 L566 114 L562 114 M571 117 L562 114 M562 87 L566 87 L566 91 M546 90 L546 94 L543 94 L543 98 L539 98 M557 115 L562 114 M557 115 L540 115 L540 106 M540 106 L540 106 L540 102 L539 102 L539 98 M38 136 L38 158 L56 158 M71 120 L73 120 L73 126 L74 126 L74 131 L75 131 L75 136 L75 142 L77 142 L77 147 L78 147 M78 147 L78 150 L73 150 L67 150 L67 152 L67 155 L62 155 L62 158 L56 158 M35 182 L49 174 M49 174 L49 168 L52 168 L52 163 L54 163 L56 163 L56 158 M148 88 L148 88 M148 88 L120 92 M130 44 L149 56 M120 92 L116 86 M148 88 L149 56 M172 25 L137 19 M172 25 L171 25 L171 30 L169 30 L169 36 L168 36 L168 42 L167 42 L167 48 L166 48 L166 54 M166 54 L149 54 L149 56 M145 282 L160 274 M175 309 L175 283 L172 283 M160 274 L172 274 L172 283 M512 343 L512 315 L516 315 M512 343 L532 337 M532 337 L532 332 L533 332 L533 327 L535 327 L537 327 L537 321 L537 316 L539 316 M539 316 L516 315 M578 344 L568 345 M578 344 L572 323 M568 345 L554 335 M554 335 L554 324 L555 324 M555 324 L560 324 L560 322 L565 322 L565 320 M565 320 L572 323 M595 336 L594 336 L594 321 M594 321 L594 322 L589 322 L583 322 L583 322 L577 322 L577 323 L572 323 L572 323 M585 346 L578 346 L578 344 M532 337 L547 342 M547 342 L554 335 M544 315 L539 315 L539 316 M544 315 L544 319 L549 319 L549 324 L555 324 M629 314 L629 296 L622 296 M629 314 L606 314 L606 316 M606 299 L606 305 L604 305 L604 310 L603 310 L603 315 L602 315 M606 299 L611 299 L611 298 L616 298 L616 296 L621 296 L621 295 M621 295 L622 296 M606 316 L602 315 M624 336 L620 336 L620 332 L616 332 L616 328 L616 324 L613 324 L613 320 L609 320 L606 320 L606 316 M635 332 L635 318 M635 318 L635 314 L629 314 M594 321 L595 319 M595 319 L602 315 M644 311 L643 311 L643 294 M644 311 L663 311 L663 311 M665 306 L663 306 L663 311 M665 306 L665 288 L647 288 M647 288 L643 288 L643 294 M635 318 L639 318 L639 315 L644 315 L644 311 M622 296 L628 296 L628 295 L628 295 L633 295 L633 295 L638 295 L638 294 L643 294 M664 316 L663 311 M671 302 L665 306 M648 286 L647 288 M623 281 L621 295 M720 378 L706 378 M720 378 L716 398 M706 378 L697 387 M716 398 L716 399 L699 399 M697 387 L696 397 M699 399 L696 397 M726 375 L720 378 M700 360 L700 378 L706 378 M726 404 L716 404 L716 398 M685 375 L697 387 M711 421 L699 399 M690 400 L690 399 L693 399 L693 397 L696 397 M756 564 L753 564 L753 560 M735 577 L735 577 L735 564 M735 564 L735 560 L753 560 M759 541 L752 544 M753 560 L752 560 L752 544 M741 528 L748 528 L748 541 M752 544 L748 541 M717 582 L716 582 L716 577 L716 572 L714 572 M735 564 L732 564 L732 561 L728 561 L728 557 M714 572 L719 572 L719 567 L723 567 L723 562 L723 557 L728 557 M705 526 L712 526 L712 543 M728 528 L728 533 L724 533 L720 533 L720 538 L716 538 L716 543 M716 543 L712 543 M748 541 L743 541 L743 544 L743 547 L738 547 L738 549 L732 549 L732 552 L727 552 M716 543 L716 552 L727 552 M727 552 L727 557 L728 557 M166 781 L166 781 L166 816 M349 138 L330 132 M342 171 L340 172 M330 132 L329 132 M329 132 L324 161 M324 161 L340 172 M528 182 L528 178 L532 178 L536 178 L536 175 M528 182 L527 202 M531 204 L549 207 M549 207 L549 191 L556 191 M536 175 L556 175 L556 191 M576 161 L564 161 L564 168 M578 192 L559 192 L559 190 M578 192 L582 192 L582 189 L585 189 L585 186 M564 168 L564 190 L559 190 M520 156 L520 155 L514 155 L509 155 L509 155 L509 154 L504 154 M520 156 L511 177 M504 154 L500 154 L500 159 L500 163 L496 163 L492 163 L492 167 M511 177 L502 182 M492 167 L492 179 L494 179 M502 182 L498 182 L498 180 L498 179 L494 179 M483 136 L493 135 M493 135 L493 140 L496 140 L496 145 L499 145 L501 145 L501 149 L504 149 L504 154 M480 157 L492 157 L492 167 M528 182 L511 182 L511 177 M510 202 L502 182 M536 175 L536 169 L537 169 L537 169 L537 163 M520 156 L520 155 M520 155 L520 158 L526 158 L531 158 L531 161 L531 163 L537 163 M564 168 L545 159 M559 190 L556 191 M537 163 L545 163 L545 159 M569 143 L549 141 M545 159 L545 153 L546 153 L548 153 L548 147 L549 147 L549 141 M557 115 L557 121 L554 121 L554 126 L552 126 L552 132 L550 132 L547 132 L547 138 M547 138 L549 141 M466 165 L466 165 L466 178 M494 179 L494 183 L488 183 M488 183 L466 183 L466 178 M505 209 L480 209 L480 203 M488 183 L486 183 L486 188 L486 193 L484 193 L484 198 L482 198 L480 198 L480 203 M444 184 L448 184 L448 187 L448 191 L452 191 M466 178 L452 178 L452 191 M582 229 L601 228 M582 229 L578 216 M578 216 L578 205 L583 205 M583 205 L608 205 L608 205 M601 228 L601 208 L610 208 M610 208 L608 205 M602 257 L602 259 L598 259 L594 259 L594 261 M603 230 L601 228 M580 231 L580 261 L593 261 M580 231 L582 229 M594 261 L593 261 M580 231 L580 234 L576 234 L571 234 L571 237 L567 237 L567 239 M567 239 L548 230 M548 230 L549 208 M549 208 L578 216 M578 192 L583 205 M549 208 L549 207 M603 190 L608 205 M623 207 L610 207 L610 208 M593 261 L577 261 L577 260 M567 239 L567 239 L567 248 M577 260 L577 256 L574 256 L570 256 L570 252 L567 252 L567 248 M500 261 L512 258 M487 245 L489 238 M520 230 L520 233 L523 233 L525 233 L525 235 M489 238 L489 226 L504 226 M512 258 L525 235 M548 230 L539 238 M525 235 L525 238 L539 238 M500 382 L500 363 L482 363 M500 382 L509 373 M509 373 L509 368 L510 368 L511 368 L511 362 L512 362 L512 356 L513 356 L513 350 M482 342 L488 342 L488 343 L494 343 L494 343 L494 344 L499 344 L505 344 L505 345 L505 346 L511 346 M482 342 L482 363 M511 346 L513 346 L513 350 M495 393 L500 393 L500 382 M469 374 L482 363 M513 405 L530 382 M530 382 L530 380 L525 380 L520 380 L520 378 L514 378 L514 376 L509 376 L509 373 M478 339 L478 340 L480 340 L482 340 L482 342 M512 343 L511 346 M510 309 L512 309 M516 315 L512 309 M524 412 L533 412 L533 401 M530 382 L533 382 M533 382 L533 388 L533 388 L533 395 L533 395 L533 401 L533 401 M546 419 L546 413 L546 413 L546 407 L546 407 L546 401 L546 401 M533 401 L533 401 L540 401 L546 401 L546 401 M564 403 L559 403 L559 401 L559 399 L554 399 L549 399 L549 398 M546 401 L549 398 M562 378 L546 380 M562 378 L563 378 L563 373 L564 373 L564 368 L564 363 L565 363 M546 380 L541 378 M541 378 L541 372 L541 372 L541 366 L540 366 L540 366 L540 360 M546 354 L562 354 L562 359 M546 354 L546 360 L540 360 M565 363 L563 363 L563 361 L562 361 L562 359 M571 384 L562 378 M549 398 L546 398 L546 380 M586 359 L581 359 L581 360 L581 361 L575 361 L570 361 L570 362 L565 362 L565 363 M533 382 L541 378 M513 350 L540 360 M547 342 L546 354 M568 345 L562 359 M307 315 L289 315 L289 304 M307 315 L306 315 L306 321 L305 321 L305 326 L304 326 L304 331 L304 337 L303 337 M303 337 L280 338 M278 310 L277 310 L277 336 M278 310 L289 304 M280 338 L277 336 M328 307 L328 309 L323 309 L318 309 L318 311 L312 311 L312 313 L312 315 L307 315 M296 287 L289 304 M296 287 L303 285 M313 343 L313 337 L303 337 M285 365 L285 338 L280 338 M255 339 L255 317 L245 317 M258 340 L258 338 L264 338 L264 337 L270 337 L277 337 L277 336 M245 317 L250 317 L250 313 L250 309 L255 309 L255 306 L259 306 L259 302 L264 302 M264 302 L269 302 L269 305 L274 305 L274 307 L274 310 L278 310 M696 72 L719 72 M702 51 L720 72 M719 72 L720 72 M731 52 L730 52 L730 59 L730 66 L729 66 M720 72 L720 66 L729 66 M755 67 L738 67 L738 72 M738 72 L729 66 M776 72 L776 84 L775 84 M797 86 L791 73 M797 86 L784 95 M775 84 L784 95 M756 134 L727 134 L727 133 M756 134 L756 116 L753 116 M727 133 L727 118 M727 118 L727 115 L733 115 L739 115 L739 111 M753 116 L753 114 L748 114 L748 112 L744 112 L739 112 L739 111 M722 140 L725 140 L725 146 L725 153 L727 153 M722 140 L722 137 L702 137 M727 153 L710 172 M702 137 L702 144 L701 144 L701 144 L701 150 L700 150 L700 156 L700 162 L699 162 M699 162 L705 162 L705 167 L710 167 L710 172 M758 136 L756 134 M727 133 L722 140 M743 161 L727 153 M710 178 L710 172 L710 172 M678 163 L699 163 L699 162 M700 136 L702 137 M802 184 L802 206 L794 206 M772 186 L773 186 L773 191 L773 195 L774 195 L775 195 L775 200 M775 200 L794 206 M807 241 L796 241 L796 229 M821 205 L821 205 L816 205 L816 206 L811 206 L806 206 L806 207 L806 207 L800 207 L800 208 L795 208 M796 229 L795 208 M795 208 L794 206 M527 68 L525 69 M539 98 L526 89 M525 69 L526 89 M504 53 L504 68 L518 68 M525 69 L518 68 M491 66 L491 55 L494 55 M491 66 L491 79 L501 79 M518 68 L518 79 L501 79 M474 99 L474 98 L480 98 L480 98 L486 98 L491 98 L491 97 L497 97 L497 97 M491 66 L476 72 M501 79 L500 79 L500 85 L500 91 L498 91 L497 91 L497 97 M431 67 L425 67 L425 68 L425 70 L419 70 L419 71 L413 71 M431 67 L430 67 L430 51 M430 51 L411 51 L411 51 M413 71 L411 51 M442 74 L431 74 L431 67 M413 72 L413 71 M449 69 L449 63 L449 63 L450 63 L450 57 L450 51 L450 51 M450 51 L450 47 L435 47 M435 47 L435 49 L432 49 L432 51 L430 51 M407 47 L411 47 L411 51 M420 27 L420 30 L424 30 L424 33 L428 33 L428 36 L433 36 M435 47 L433 47 L433 36 M428 11 L440 11 L440 10 M433 36 L433 29 L444 29 M444 29 L440 29 L440 10 M449 -8 L449 -2 L449 -2 L449 -2 L449 4 M469 11 L476 -8 M469 11 L469 11 L465 11 L462 11 L462 12 M462 12 L458 12 L458 9 L458 7 L453 7 L453 4 L449 4 M440 10 L440 4 L449 4 M451 50 L451 31 M451 50 L451 47 L471 47 M469 38 L469 43 L470 43 L470 47 L471 47 M469 38 L469 35 L465 35 L461 35 L461 31 L457 31 L457 28 M457 28 L451 31 M471 47 L471 47 M450 51 L451 50 M444 29 L451 31 M470 66 L471 47 M462 12 L461 12 L461 17 L459 17 L459 23 L459 28 L457 28 M485 47 L485 47 L478 47 L478 47 L471 47 M251 35 L245 35 L245 32 L239 32 L239 30 M251 35 L251 39 L250 39 L250 39 L250 44 M247 48 L247 46 L249 46 L249 44 L250 44 M247 48 L242 48 L242 49 L242 50 L237 50 L232 50 L232 51 L227 51 L227 51 M227 51 L229 31 M229 31 L239 31 L239 30 M247 8 L239 8 M259 16 L257 29 M257 29 L251 29 L251 35 M239 8 L239 8 L239 30 M239 8 L230 4 M229 31 L216 23 M230 4 L230 23 L216 23 M331 9 L330 8 M336 -6 L334 -6 L334 -1 L334 4 L332 4 L332 8 L330 8 M527 118 L527 99 L506 99 M527 118 L524 118 L524 130 M524 130 L523 131 M523 131 L501 129 M501 129 L501 124 L501 124 L501 119 L500 119 L500 119 L500 114 L500 108 L499 108 L499 103 L499 103 L498 103 L498 98 M498 98 L502 98 L502 98 L502 99 L506 99 M540 106 L527 106 L527 118 M526 89 L506 99 M547 138 L547 136 L542 136 L536 136 L536 134 L536 132 L530 132 L530 130 L524 130 M520 155 L523 155 L523 131 M493 135 L501 129 M497 97 L498 98 M85 254 L101 246 M124 279 L124 273 L123 273 L123 267 L123 267 L122 267 L122 260 L121 260 L121 254 M101 246 L121 254 M160 274 L160 268 L161 268 L162 268 L162 262 L162 256 L163 256 M121 254 L143 235 M163 256 L143 235 M572 298 L547 300 M572 298 L573 299 M573 299 L571 299 L571 304 L571 309 L569 309 L567 309 L567 315 L567 320 L565 320 M544 315 L544 309 L545 309 L545 303 L545 303 M547 300 L545 303 M512 309 L515 309 L515 304 L518 304 L518 299 L518 294 L521 294 M545 303 L521 294 M499 272 L504 272 L504 275 L508 275 L508 277 L508 280 L513 280 L518 280 L518 283 L518 285 L523 285 M523 285 L521 285 L521 294 M600 293 L578 293 L578 301 M600 293 L600 286 L599 286 L597 286 L597 280 M587 280 L587 278 L591 278 L591 277 L594 277 M587 280 L587 299 L574 299 M574 299 L578 299 L578 301 M597 280 L594 277 M595 319 L578 319 L578 301 M606 299 L600 299 L600 293 M620 278 L597 278 L597 280 M594 261 L594 261 L594 277 M568 274 L568 269 L571 269 L574 269 L574 264 L574 260 L577 260 M568 274 L568 275 L572 275 L572 277 L577 277 L582 277 L582 278 L582 280 L587 280 M572 298 L570 298 L570 292 L567 292 L567 287 L567 282 L564 282 L562 282 L562 276 M573 299 L574 299 M562 276 L568 276 L568 274 M697 563 L701 562 M697 563 L682 563 L682 560 M701 562 L709 545 M683 551 L682 560 M683 551 L683 539 L691 539 M691 539 L709 545 M694 587 L697 563 M714 572 L714 562 L701 562 M674 565 L674 560 L682 560 M712 543 L709 545 M670 536 L683 551 M687 528 L691 539 M331 112 L331 96 L311 96 M331 112 L331 112 M331 112 L326 112 L326 111 L326 111 L320 111 L315 111 L315 110 L315 109 L310 109 L305 109 L305 108 L300 108 L300 108 M311 96 L307 96 L307 100 L307 104 L304 104 L304 108 L300 108 M340 98 L331 98 L331 112 M330 132 L331 132 L331 112 M281 137 L305 134 M281 137 L280 115 M305 134 L305 129 L303 129 L303 124 L301 124 L301 119 L299 119 L297 119 L297 114 L297 109 L295 109 M280 115 L292 107 M292 107 L295 109 M329 132 L323 132 L323 133 L317 133 L317 133 L317 134 L312 134 L306 134 L306 134 M306 134 L305 134 M300 108 L295 108 L295 109 M300 159 L306 134 M300 159 L300 159 M324 161 L324 164 L317 164 M300 159 L306 159 L306 161 L306 162 L311 162 L317 162 L317 164 M340 172 L331 185 M317 164 L313 183 M331 185 L325 185 L325 185 L319 185 L319 184 L319 183 L313 183 M349 209 L334 208 M331 185 L331 191 L332 191 L333 191 L333 197 L333 203 L334 203 L334 203 L334 208 M323 249 L323 211 L329 211 M329 211 L329 210 L332 210 L332 208 L334 208 M476 222 L477 222 L477 205 M476 222 L458 224 M477 205 L477 203 L472 203 L468 203 L468 201 L468 199 L463 199 L458 199 L458 197 L458 195 L453 195 M458 224 L449 218 M453 195 L453 200 L451 200 L448 200 L448 204 L448 209 L446 209 M446 209 L449 218 M489 238 L476 222 M480 203 L477 205 M455 251 L456 251 L456 245 L456 240 L456 240 L456 235 L457 235 L457 229 L458 229 L458 229 L458 224 M452 191 L453 195 M432 246 L449 218 M421 213 L446 209 M796 115 L807 115 L807 104 M796 115 L797 131 M717 84 L733 94 M717 84 L709 84 L709 93 M733 94 L714 94 L714 108 M709 93 L711 93 L711 107 M711 107 L714 108 M701 89 L701 93 L709 93 M719 72 L717 72 L717 84 M703 111 L711 107 M727 118 L714 118 L714 108 M762 70 L762 88 L755 88 M775 84 L770 84 L770 88 L766 88 L766 91 M766 91 L760 91 L760 89 L760 88 L755 88 M734 94 L734 89 L738 89 L738 84 L742 84 M734 94 L736 94 L736 100 L736 106 L739 106 M739 106 L739 102 L743 102 L748 102 L748 98 L748 95 L753 95 M742 84 L754 88 M754 88 L753 88 L753 95 M738 72 L742 72 L742 84 M733 94 L734 94 M739 111 L739 108 L739 108 L739 106 L739 106 M753 116 L753 110 L759 110 M759 110 L753 95 M755 88 L754 88 M753 212 L767 212 L767 212 M753 212 L747 223 M767 212 L767 217 L769 217 L771 217 L771 222 L771 228 L773 228 M747 223 L749 223 L749 228 L749 234 L751 234 L753 234 L753 239 L753 244 L755 244 L757 244 L757 249 M773 228 L758 249 M758 249 L757 249 M749 207 L753 212 M775 200 L767 200 L767 212 M724 223 L747 223 M796 229 L773 229 L773 228 M743 258 L757 249 M769 255 L758 249 M493 29 L493 28 M469 38 L477 24 M493 28 L477 24 M469 11 L472 13 M477 24 L477 13 L472 13 M513 11 L513 12 L506 12 L498 12 L498 13 M513 11 L511 11 L511 5 L510 5 L510 -2 L510 -8 L509 -8 M491 -5 L491 8 L493 8 M498 13 L493 13 L493 8 M516 12 L513 11 M493 28 L498 13 M472 13 L472 12 L477 12 L477 11 L483 11 L483 10 L488 10 L493 10 L493 8 M288 92 L301 92 L301 84 M288 92 L292 107 M311 96 L312 96 L312 93 L313 93 L313 90 M301 84 L313 84 L313 90 M338 95 L326 85 M313 90 L326 90 L326 85 M321 70 L310 67 M321 70 L330 61 M310 67 L304 67 L304 49 M328 50 L309 44 M328 50 L331 57 M304 49 L304 44 L309 44 M331 57 L330 61 M306 71 L306 84 L301 84 M306 71 L308 71 L308 69 L308 67 L310 67 M326 85 L326 70 L321 70 M345 70 L345 67 L340 67 L340 64 L335 64 L335 61 L330 61 M339 30 L335 33 M351 50 L351 52 L346 52 L346 54 L341 54 L336 54 L336 55 L336 57 L331 57 M335 33 L333 33 L333 39 L330 39 L330 44 L330 50 L328 50 M269 9 L269 16 L279 16 M286 -9 L298 10 M279 16 L298 16 L298 10 M257 29 L257 34 L273 34 M279 16 L279 32 L280 32 M273 34 L280 32 M172 25 L178 25 L178 21 L178 18 L183 18 L183 15 L189 15 M189 15 L188 15 L188 9 L188 9 L188 2 M182 -4 L182 -1 L185 -1 L188 -1 L188 2 M300 159 L278 152 M281 137 L278 137 L278 139 L276 139 L276 142 M276 142 L276 152 L278 152 M248 70 L248 72 L254 72 M248 70 L240 74 M254 72 L264 91 M240 74 L237 74 L237 80 L235 80 L235 85 M235 85 L235 87 L240 87 L245 87 L245 90 L250 90 L250 92 L250 94 L255 94 L255 96 L261 96 M264 91 L261 91 L261 96 M288 92 L285 92 L285 90 L285 87 L281 87 M281 87 L264 91 M280 115 L261 115 L261 114 M261 96 L258 106 M261 114 L258 114 L258 106 M235 85 L233 88 M258 106 L258 106 L253 106 L248 106 L248 105 L243 105 L243 105 L238 105 L238 104 M233 88 L238 88 L238 104 M190 68 L193 68 L193 81 M190 68 L201 68 L201 48 M193 81 L228 65 M201 48 L201 52 L227 52 M227 52 L228 65 M148 88 L148 93 L191 93 M191 93 L192 92 M166 54 L190 68 M192 92 L192 91 M192 91 L193 81 M189 15 L192 15 L192 19 L196 19 L196 22 L200 22 L200 26 M200 26 L200 48 L201 48 M240 74 L234 74 L234 69 L234 65 L228 65 M192 91 L192 91 L197 91 L197 90 L202 90 L207 90 L207 90 L212 90 L212 89 L212 89 L218 89 L218 89 L223 89 L223 88 L228 88 L228 88 L233 88 M227 51 L227 52 M200 26 L216 23 M247 48 L247 70 L248 70 M185 312 L185 309 L190 309 L196 309 L196 306 L196 303 L201 303 L206 303 L206 300 M172 283 L172 278 L203 278 M203 278 L206 300 M217 328 L223 312 M206 300 L206 312 L223 312 M245 317 L245 311 L226 311 M223 312 L226 311 M296 287 L281 273 M264 302 L256 278 M281 273 L276 273 L276 274 L271 274 L271 275 L266 275 L266 276 L266 277 L261 277 L261 278 L256 278 M313 249 L294 243 M281 273 L294 243 M244 278 L226 278 L226 311 M244 278 L244 277 L248 277 L248 275 L251 275 M256 278 L256 277 L254 277 L254 275 L251 275 M163 256 L163 245 L186 245 M143 235 L142 233 M187 234 L187 245 L186 245 M187 234 L186 234 L186 230 L185 230 L185 227 M142 233 L142 232 L148 232 L153 232 L153 231 L153 230 L159 230 L164 230 L164 230 L164 229 L169 229 L169 228 L175 228 L175 228 L180 228 L185 228 L185 227 M142 233 L140 233 L140 216 M184 213 L184 208 L150 208 M184 213 L185 213 L185 227 M150 208 L145 208 L145 212 L145 216 L140 216 M75 190 L89 181 M75 190 L75 213 M89 181 L113 193 M75 213 L103 217 M103 217 L116 208 M116 208 L115 208 L115 203 L115 198 L114 198 L114 193 L113 193 M78 147 L90 151 M49 174 L54 174 L54 177 L58 177 L58 179 L58 182 L62 182 L67 182 L67 185 L67 187 L71 187 L75 187 L75 190 M90 151 L89 181 M68 218 L75 213 M101 246 L101 217 L103 217 M140 216 L134 216 L134 214 L128 214 L128 212 L128 210 L122 210 L122 208 L116 208 M551 274 L552 274 L552 263 M551 274 L551 278 L545 278 M545 278 L535 277 M552 263 L552 247 L539 247 M535 277 L535 262 L527 262 M527 262 L539 247 M562 276 L551 276 L551 274 M567 248 L552 248 L552 263 M547 300 L547 278 L545 278 M523 285 L535 285 L535 277 M539 238 L539 247 M512 258 L512 262 L527 262 M281 207 L306 207 M281 207 L281 207 L281 201 L281 201 L281 194 L281 188 L281 188 L281 182 L281 182 M281 182 L291 181 M291 181 L305 190 M305 190 L307 190 L307 206 M306 207 L307 206 M276 212 L278 212 L278 236 M276 212 L276 207 L281 207 M278 236 L293 242 M293 242 L293 207 L306 207 M300 159 L291 181 M313 183 L305 190 M329 211 L307 211 L307 206 M294 243 L293 242 M771 111 L767 111 L767 110 L767 109 L763 109 M771 111 L783 105 M763 109 L767 109 L767 95 M767 95 L782 95 L782 101 M783 105 L782 101 M776 135 L775 135 L775 130 L775 126 L774 126 L773 126 L773 121 L773 116 L772 116 L772 111 L771 111 M759 110 L763 109 M796 115 L796 112 L792 112 L792 108 L787 108 L783 108 L783 105 M766 91 L767 95 M784 95 L784 101 L782 101 M797 86 L809 86 L809 92 M301 23 L300 11 M301 23 L311 34 M317 30 L314 30 L314 32 L311 32 L311 34 M317 30 L318 30 L318 25 L318 19 L318 19 L318 14 L319 14 L320 14 L320 9 M300 11 L313 11 L313 6 M320 9 L313 6 M298 10 L300 11 M286 35 L286 33 L283 33 L283 32 L280 32 M286 35 L286 23 L301 23 M304 49 L298 49 L298 48 L298 48 L291 48 M309 44 L309 34 L311 34 M291 48 L291 41 L289 41 L289 35 L286 35 M335 33 L329 33 L329 32 L329 31 L323 31 L317 31 L317 30 M330 8 L320 8 L320 9 M312 -13 L312 6 L313 6 M290 49 L270 49 L270 49 M290 49 L284 66 M281 69 L284 66 M281 69 L268 64 M268 64 L268 53 L266 53 M266 53 L266 51 L268 51 L268 49 L270 49 M291 48 L290 49 M273 34 L270 34 L270 49 M306 71 L284 66 M281 87 L281 87 L281 69 M254 72 L254 69 L259 69 L259 66 L263 66 L268 66 L268 64 M250 44 L266 44 L266 53 M188 2 L200 -6 M230 4 L230 0 L229 0 L228 0 L228 -4 M276 142 L270 142 L270 140 L270 138 L263 138 L257 138 L257 136 M261 114 L254 129 M257 136 L254 129 M233 110 L233 103 L202 103 M233 110 L233 126 M231 128 L233 126 M231 128 L216 131 M216 131 L202 103 M192 92 L192 98 L197 98 L202 98 L202 103 M238 104 L238 110 L233 110 M254 129 L249 129 L249 128 L249 128 L244 128 L244 127 L239 127 L239 126 L233 126 M186 245 L197 253 M203 278 L203 278 M197 253 L197 258 L198 258 L198 263 L199 263 L201 263 L201 268 L202 268 L202 273 L202 278 L203 278 M244 278 L223 278 L223 273 M203 278 L223 273 M148 88 L148 117 L150 117 M191 93 L178 93 L178 119 M178 119 L178 117 L150 117 M237 155 L237 128 L231 128 M237 155 L237 157 L216 157 M216 131 L213 131 L213 136 L211 136 L211 141 M211 141 L216 157 M178 119 L178 119 M178 119 L178 140 L192 140 M211 141 L192 140 M187 234 L216 234 L216 227 M216 227 L225 227 L225 233 M197 253 L222 244 M225 233 L222 244 M223 273 L223 273 L223 246 M223 246 L222 244 M251 275 L251 275 L251 268 L251 261 L251 261 M223 246 L223 248 L228 248 L232 248 L232 251 L232 253 L237 253 L237 256 L242 256 L246 256 L246 259 L246 261 L251 261 M248 153 L245 153 L245 155 L242 155 L242 156 M248 153 L269 153 L269 168 M242 156 L242 156 L242 162 L242 167 L242 167 L242 173 L241 173 L241 178 L241 178 L241 178 L241 183 M241 183 L241 185 L259 185 M259 185 L259 181 L265 181 L270 181 L270 178 M270 178 L270 173 L269 173 L269 173 L269 168 M237 155 L242 156 M257 136 L248 136 L248 153 M278 152 L269 168 M276 212 L276 206 L262 206 M281 182 L270 178 M262 206 L262 185 L259 185 M150 208 L155 182 M155 182 L150 182 L150 176 M113 193 L122 193 L122 175 M150 176 L150 175 L122 175 M178 119 L178 123 L175 123 L172 123 L172 128 L172 133 L168 133 L165 133 L165 138 L165 143 L162 143 L162 147 L159 147 M159 147 L159 149 L164 149 L168 149 L168 151 L168 153 L173 153 L173 155 L178 155 M192 140 L192 145 L189 145 L189 150 L186 150 L183 150 L183 155 M178 155 L178 155 L183 155 M155 182 L170 180 M159 147 L159 148 L155 148 L152 148 L152 149 M150 176 L152 149 M178 155 L170 155 L170 180 M239 185 L241 183 M239 185 L216 185 L216 177 M216 157 L216 157 M216 177 L216 177 L216 157 M183 155 L187 155 L187 159 L191 159 L191 163 M216 157 L216 163 L191 163 M797 64 L797 67 L817 67 M228 231 L259 241 M228 231 L238 211 M249 214 L238 214 L238 211 M249 214 L261 240 M261 240 L259 241 M225 233 L228 231 M251 261 L259 241 M207 205 L235 205 L235 204 M207 205 L210 205 L210 210 L210 216 L212 216 L212 221 L214 221 L216 221 L216 227 M235 204 L236 204 L236 208 L238 208 L238 211 M262 206 L249 206 L249 214 M235 204 L236 204 L236 198 L236 191 L238 191 L239 191 L239 185 M278 236 L261 236 L261 240 M137 128 L142 143 M137 128 L114 114 M142 143 L142 158 L116 158 M114 114 L113 114 M113 114 L99 114 L99 149 M99 149 L116 158 M150 117 L150 128 L137 128 M152 149 L142 143 M120 92 L120 97 L118 97 L117 97 L117 103 L117 108 L116 108 L114 108 L114 114 M122 175 L116 175 L116 158 M86 110 L113 114 M90 151 L90 149 L99 149 M176 183 L192 176 M176 183 L188 209 M192 176 L207 185 M207 185 L207 191 L206 191 L206 197 L205 197 L205 202 L204 202 M188 209 L204 202 M170 180 L176 183 M191 163 L192 163 L192 176 M184 213 L188 209 M216 177 L207 185 M207 205 L204 202 M795 45 L795 45 L808 45" fill="none" stroke="#616667" stroke-width="1"/></g>
<path d="M294.0 51.0 L299.0 49.0 L306.0 52.0 L310.0 60.0 L315.0 64.0 L317.0 70.0 L314.0 76.0 L318.0 84.0 L317.0 90.0 L313.0 84.0 L310.0 76.0 L307.0 68.0 L303.0 62.0 L300.0 57.0 L295.0 56.0Z" fill="#1f3a5e"/>
<path d="M362.0 255.5 L367.7 252.0 L372.0 253.8 L374.8 257.7 L382.7 260.4 L385.3 263.9 L390.6 270.0 L388.0 269.0 L382.7 265.6 L377.4 263.0 L372.0 260.0 L369.5 256.4 L365.0 254.7 L362.9 256.8Z" fill="#1f3a5e"/>
<path d="M434.0 369.0 L437.0 364.0 L440.0 362.0 L442.0 358.0 L445.0 359.0 L444.0 363.0 L441.0 366.0 L438.0 371.0 L435.0 372.0Z" fill="#1f3a5e"/>
<path d="M418.0 408.0 L420.0 414.0 L422.0 418.0 L425.0 424.0 L425.0 429.0 L422.0 428.0 L420.0 422.0 L418.0 418.0 L417.0 412.0Z" fill="#1f3a5e"/>
<path d="M520.2 496.0 L522.5 496.8 L524.0 502.0 L526.9 494.6 L527.6 499.0 L526.2 503.4 L524.0 507.9 L523.2 513.8 L524.7 519.7 L530.6 519.0 L526.9 522.6 L528.4 527.8 L526.2 532.2 L523.2 530.0 L522.5 526.3 L519.5 525.6 L521.7 521.9 L519.5 513.8 L520.2 506.4 L521.7 502.0Z" fill="#1f3a5e"/>
<path d="M598.8 301.0 L601.0 295.0 L605.0 292.0 L607.0 284.0 L606.0 279.5 L609.0 281.0 L610.0 286.0 L613.0 281.0 L615.0 284.0 L614.0 289.0 L620.0 287.0 L618.0 292.0 L613.0 294.0 L610.0 300.0 L605.0 303.0 L600.0 307.0Z" fill="#1f3a5e"/>
<path d="M534.0 595.0 L537.0 598.0 L537.7 603.0 L538.3 607.8 L541.4 608.5 L545.7 607.2 L548.0 603.8 L550.0 597.4 L551.8 597.4 L550.6 603.0 L549.4 606.6 L553.0 606.6 L556.0 604.0 L557.8 604.4 L557.4 607.6 L551.8 608.5 L548.0 610.3 L543.2 611.5 L541.4 614.6 L539.0 612.8 L535.2 610.3 L535.2 605.4 L535.8 600.5Z" fill="#1f3a5e"/>
<path d="M115.0 654.0 L118.0 648.0 L124.0 646.0 L129.0 648.0 L130.5 654.0 L128.0 660.0 L122.0 663.0 L117.0 661.0Z" fill="#1f3a5e"/>
<path d="M36.7 675.0 L40.0 674.6 L44.0 679.0 L45.0 683.0 L41.0 683.0 L38.0 680.0Z" fill="#1f3a5e"/>
<path d="M52.0 678.0 L54.0 684.0 L57.0 688.0 L60.4 691.0 L64.0 692.0 L70.0 694.0 L74.0 694.0 L78.0 696.0 L78.0 700.0 L72.0 700.0 L66.0 698.0 L60.0 697.0 L56.0 693.0 L53.0 687.0 L51.0 682.0Z" fill="#1f3a5e"/>
<path d="M138.7 700.0 L140.0 696.0 L144.0 694.0 L146.0 698.0 L148.0 704.0 L146.0 710.0 L142.0 712.0 L140.0 716.0 L136.0 714.0 L134.0 708.0 L138.0 706.0Z" fill="#1f3a5e"/>
<path d="M777.0 728.0 L780.0 732.0 L783.0 736.0 L788.0 740.0 L789.0 746.0 L786.0 750.0 L782.0 746.0 L779.0 740.0 L777.0 734.0Z" fill="#1f3a5e"/>
<path d="M763.5 787.0 L766.0 783.5 L769.0 784.5 L771.0 783.0 L773.5 784.0 L773.0 787.0Z" fill="#1f3a5e"/>
<path d="M-6.0 699.0 L0.0 699.0 L3.8 700.0 L8.0 697.2 L12.3 696.5 L13.7 693.0 L18.6 693.7 L22.8 692.3 L24.2 695.8 L21.4 698.6 L21.4 702.0 L26.3 701.4 L36.2 700.7 L39.7 700.7 L39.7 698.6 L42.5 699.3 L41.8 701.4 L39.0 704.2 L38.7 709.2 L44.0 709.9 L45.3 716.2 L45.3 719.7 L50.3 718.7 L54.5 718.3 L57.3 721.0 L62.2 724.0 L64.3 721.0 L66.4 722.5 L67.0 726.7 L70.0 728.9 L70.7 733.0 L74.9 735.9 L78.4 736.6 L81.2 734.5 L85.4 736.6 L91.0 737.3 L92.5 741.5 L98.8 743.0 L100.2 747.0 L102.0 742.0 L106.0 738.0 L112.0 736.0 L118.0 738.0 L124.0 735.0 L130.0 739.0 L136.0 736.0 L140.0 734.0 L141.0 724.0 L143.0 716.0 L144.0 706.4 L149.5 713.8 L155.0 719.4 L162.5 723.0 L169.9 726.8 L173.6 732.3 L181.0 736.0 L188.4 741.5 L197.6 747.0 L206.8 751.7 L219.0 760.0 L232.0 762.0 L234.0 756.0 L232.7 751.7 L230.9 749.0 L225.3 747.0 L221.6 741.5 L217.0 737.0 L208.7 736.0 L199.5 733.0 L192.0 732.3 L183.7 730.5 L179.0 725.0 L185.6 725.0 L181.0 717.5 L176.3 710.0 L181.0 704.6 L186.5 697.0 L195.8 691.6 L197.6 676.8 L193.0 677.8 L191.0 682.4 L190.2 687.0 L185.6 688.9 L181.0 686.0 L180.0 682.4 L176.3 683.3 L171.7 681.5 L170.8 677.8 L171.7 675.0 L175.4 673.5 L180.0 673.0 L183.7 668.5 L187.4 664.0 L190.2 661.0 L194.0 663.0 L199.5 664.0 L203.0 661.0 L205.0 654.0 L205.0 651.9 L206.8 646.3 L211.5 644.5 L215.0 648.0 L221.6 647.3 L232.7 642.0 L244.7 639.9 L247.5 641.7 L255.0 646.3 L264.0 645.4 L273.4 648.2 L279.0 643.6 L281.5 641.7 L291.7 646.3 L297.4 649.0 L299.5 649.0 L300.4 637.0 L301.2 623.3 L303.8 618.0 L307.3 616.0 L312.4 617.3 L314.7 621.6 L315.4 633.7 L318.5 640.6 L321.0 644.0 L325.4 649.0 L329.2 652.6 L318.5 655.5 L308.0 657.5 L305.0 660.0 L314.0 658.0 L330.5 655.5 L341.0 653.5 L353.0 650.0 L361.6 647.2 L373.6 644.6 L387.4 642.8 L401.0 641.5 L415.0 642.5 L430.5 644.2 L446.0 649.0 L454.0 652.0 L468.6 658.0 L481.0 666.6 L493.0 677.7 L500.6 687.5 L501.9 699.9 L505.5 706.0 L515.4 704.8 L522.8 709.7 L527.7 713.4 L537.5 709.7 L549.9 703.5 L562.2 695.0 L569.5 686.3 L577.0 685.0 L580.6 679.0 L578.0 674.0 L586.8 669.0 L596.6 669.0 L606.5 667.9 L616.3 675.2 L626.2 681.4 L632.5 689.5 L638.6 698.7 L651.0 708.0 L652.5 720.3 L663.3 729.5 L671.0 741.9 L677.0 754.0 L685.0 751.0 L695.6 754.0 L697.0 766.5 L703.0 775.7 L706.4 785.0 L706.0 800.0 L706.0 809.0 L-6.0 809.0Z" fill="#004268" stroke="#000" stroke-width="1"/>
<path d="M359.9 645.7 L366.8 642.3 L368.5 635.4 L370.2 631.0 L369.3 625.9 L372.8 628.5 L374.5 631.0 L378.0 629.3 L378.0 636.2 L380.6 631.9 L381.0 625.0 L384.0 625.9 L383.0 631.0 L387.4 635.4 L392.6 638.0 L387.4 638.8 L380.6 641.4 L373.7 644.0 L365.0 645.7 L359.9 646.6Z" fill="#004268" stroke="#000" stroke-width="1"/>
<path d="M411.6 638.0 L415.0 636.2 L420.2 635.4 L421.9 631.9 L424.5 632.3 L425.4 635.4 L432.3 634.5 L439.2 634.0 L442.6 632.8 L446.0 635.4 L448.7 639.7 L447.8 643.0 L442.6 640.6 L437.4 639.7 L434.0 642.3 L430.6 639.7 L421.9 640.6 L416.8 641.4 L413.3 639.7Z" fill="#004268" stroke="#000" stroke-width="1"/>
<path d="M337.4 646.6 L339.2 645.7 L340.0 649.2 L342.6 645.7 L345.2 644.9 L346.9 646.6 L350.4 642.3 L352.0 639.7 L354.7 637.0 L357.3 638.8 L355.6 641.4 L353.0 644.0 L350.4 647.4 L346.9 650.0 L342.6 651.8 L339.2 652.6Z" fill="#004268" stroke="#000" stroke-width="1"/>
<path d="M467.4 650.6 L469.8 649.4 L474.8 651.9 L480.9 653.0 L487.0 648.0 L490.8 645.7 L493.2 648.0 L488.3 651.9 L483.4 655.5 L478.5 656.8 L477.2 663.0 L480.9 665.4 L487.0 667.9 L493.2 671.5 L500.6 671.5 L501.9 675.2 L495.7 675.2 L490.8 675.2 L485.9 670.3 L479.7 666.6 L473.5 660.5 L468.6 655.5Z" fill="#004268" stroke="#000" stroke-width="1"/>
<path d="M806.0 566.0 L797.0 569.0 L795.0 576.0 L797.0 584.0 L796.0 594.0 L794.0 602.0 L796.0 612.0 L795.0 622.0 L793.0 630.0 L795.0 638.0 L797.0 644.0 L806.0 648.0Z" fill="#004268" stroke="#000" stroke-width="1"/>
<path d="M517.9 702.3 L527.7 702.3 L533.9 698.6 L537.5 694.9 L542.5 696.2 L541.2 702.3 L547.4 699.9 L554.8 696.2 L562.2 692.5 L563.4 694.9 L552.3 702.3 L542.5 707.2 L528.9 711.4 L522.8 708.0 L517.9 705.5Z" fill="#004268" stroke="#000" stroke-width="1"/>
<path d="M503.5 689.0 L508.0 688.0 L509.5 695.0 L509.0 703.0 L505.0 703.5 L504.0 696.0Z" fill="#004268" stroke="#000" stroke-width="1"/>
<path d="M786.0 634.0 L782.0 640.0 L780.0 643.0 L775.0 656.0 L774.0 668.0 L780.0 676.0 L785.0 683.0 L788.0 699.0 L784.0 707.0 L780.0 714.0 L777.0 726.0 L782.0 739.0" fill="none" stroke="#000" stroke-width="4" stroke-linejoin="round"/>
<path d="M786.0 634.0 L782.0 640.0 L780.0 643.0 L775.0 656.0 L774.0 668.0 L780.0 676.0 L785.0 683.0 L788.0 699.0 L784.0 707.0 L780.0 714.0 L777.0 726.0 L782.0 739.0" fill="none" stroke="#004268" stroke-width="2" stroke-linejoin="round"/>
<path d="M8.8 714.8 L19.3 709.9 L26.3 714.0 L33.4 715.5 L29.2 721.8 L24.2 724.0 L16.5 719.0 L10.9 716.9Z" fill="#5c4f4a" stroke="#000" stroke-width="1"/>
<path d="M-6.0 710.8 L4.5 711.7 L7.4 713.4 L-6.0 714.8Z" fill="#5c4f4a" stroke="#000" stroke-width="1"/>
<path d="M243.8 673.0 L248.4 682.4 L247.5 691.6 L243.8 699.0 L238.3 706.4 L230.9 715.7 L219.8 725.0" fill="none" stroke="#000" stroke-width="1.5"/>
<path d="M223.5 657.4 L230.0 655.6" fill="none" stroke="#000" stroke-width="1.5"/>
<path d="M236.4 658.4 L244.7 655.6" fill="none" stroke="#000" stroke-width="1.5"/>
<path d="M251.0 655.6 L262.3 656.5 L279.9 658.4" fill="none" stroke="#000" stroke-width="1.5"/>
<path d="M517.9 706.0 L522.8 710.5 L528.9 713.2 L542.5 708.2 L552.3 703.3 L563.4 695.5" fill="none" stroke="#000" stroke-width="1.5"/>
<path d="M500.0 688.0 L502.0 700.0 L505.0 706.0" fill="none" stroke="#000" stroke-width="1.5"/>
<path d="M183 741h4v3h-4z M173 750h4v1h-4z M178 733h1v1h-1z M152 751h1v1h-1z M192 750h1v1h-1z M162 750h3v1h-3z M155 751h1v2h-1z M163 724h1v1h-1z M160 723h3v3h-3z M163 744h2v2h-2z M155 729h1v1h-1z M160 749h4v2h-4z M145 743h2v2h-2z M147 716h1v1h-1z M191 749h2v2h-2z M176 747h2v2h-2z M151 741h2v2h-2z M146 750h1v1h-1z M165 735h1v2h-1z M161 739h1v2h-1z M174 740h1v3h-1z M159 734h2v2h-2z M157 751h3v1h-3z M183 743h1v1h-1z M197 751h2v2h-2z M161 729h1v1h-1z M167 751h1v2h-1z M174 731h3v3h-3z M174 742h4v2h-4z M161 721h3v2h-3z M184 740h2v2h-2z M153 751h1v2h-1z M187 740h4v2h-4z M183 742h4v2h-4z M146 715h2v3h-2z M147 729h1v1h-1z M147 714h2v1h-2z M174 732h2v2h-2z M166 737h1v3h-1z M157 740h2v1h-2z M166 750h2v1h-2z M176 750h2v2h-2z M203 751h3v1h-3z M166 747h1v2h-1z M151 733h3v3h-3z M183 747h2v2h-2z M162 751h2v2h-2z M162 729h1v3h-1z M146 714h2v1h-2z M174 733h1v2h-1z M162 731h2v2h-2z M166 741h3v1h-3z M146 719h2v1h-2z M145 742h2v3h-2z M180 739h4v2h-4z M186 740h2v2h-2z M192 748h1v1h-1z M174 732h2v2h-2z M169 729h1v1h-1z M158 736h1v1h-1z M155 743h1v3h-1z M157 732h4v2h-4z M161 733h1v2h-1z M147 739h1v3h-1z M152 718h2v2h-2z M149 737h1v1h-1z M168 728h2v1h-2z M153 750h4v1h-4z M157 739h2v2h-2z M162 736h2v3h-2z M146 752h1v1h-1z M146 717h1v2h-1z M173 747h3v2h-3z M198 746h2v1h-2z M172 745h1v1h-1z M182 740h2v1h-2z M146 745h3v3h-3z M160 726h2v1h-2z M198 750h1v1h-1z M156 718h2v1h-2z M149 751h1v3h-1z M149 740h3v1h-3z M170 742h3v1h-3z M189 748h2v2h-2z M174 742h2v2h-2z M149 719h1v2h-1z M161 730h1v1h-1z M188 743h2v1h-2z M148 742h2v3h-2z M144 721h1v3h-1z M146 714h4v1h-4z M161 744h2v3h-2z M155 720h4v2h-4z M148 742h3v1h-3z M146 710h1v2h-1z M156 724h1v3h-1z M182 736h1v2h-1z M147 737h1v3h-1z M173 730h1v1h-1z M152 745h4v1h-4z M176 742h1v2h-1z M146 715h1v2h-1z M186 746h3v1h-3z M145 731h3v3h-3z M146 722h2v3h-2z M174 739h2v2h-2z M181 738h3v1h-3z M149 724h3v2h-3z M187 745h4v3h-4z M157 731h1v1h-1z M165 743h2v2h-2z M167 741h3v1h-3z M183 747h1v1h-1z M183 742h1v1h-1z M179 736h4v3h-4z M170 727h3v3h-3z M182 751h1v2h-1z M146 713h3v3h-3z M155 716h3v1h-3z M184 738h4v1h-4z M148 729h3v1h-3z M164 745h4v2h-4z M158 739h2v1h-2z M144 738h1v1h-1z M165 724h1v3h-1z M188 749h3v1h-3z M167 744h1v1h-1z M144 751h2v1h-2z M204 750h1v2h-1z M190 748h2v1h-2z M162 730h4v1h-4z M165 745h3v2h-3z M174 751h3v2h-3z M159 728h1v1h-1z M144 742h2v1h-2z M145 733h2v3h-2z M149 751h1v2h-1z M145 731h2v3h-2z M168 742h2v3h-2z M157 727h4v2h-4z M156 745h1v2h-1z M157 727h2v1h-2z M154 728h1v2h-1z M146 726h1v1h-1z M184 741h2v2h-2z M159 748h3v1h-3z M145 744h1v2h-1z M152 737h2v1h-2z M153 731h4v3h-4z M151 736h2v2h-2z M167 729h3v2h-3z M159 733h2v1h-2z M178 740h1v1h-1z M174 739h1v1h-1z M175 735h2v1h-2z M187 747h1v3h-1z M162 728h4v1h-4z M177 739h3v2h-3z M172 740h3v3h-3z M178 745h1v2h-1z M166 730h3v3h-3z M149 723h1v2h-1z M161 742h4v1h-4z M160 744h4v2h-4z M160 747h2v1h-2z M152 728h4v3h-4z M148 738h1v1h-1z M148 728h4v3h-4z M184 745h1v2h-1z M154 718h2v2h-2z M149 724h1v2h-1z M171 731h2v1h-2z M156 748h1v3h-1z M172 733h1v1h-1z M171 733h3v3h-3z M157 719h1v2h-1z M163 735h1v2h-1z M170 745h3v2h-3z M155 723h2v1h-2z M150 726h1v2h-1z M146 733h2v1h-2z M159 735h1v1h-1z M185 737h2v2h-2z M151 721h2v2h-2z M146 747h1v2h-1z M156 747h4v3h-4z M163 746h4v2h-4z M178 743h4v3h-4z M154 736h2v2h-2z M169 739h1v1h-1z M159 736h4v2h-4z M173 738h4v2h-4z M181 736h2v3h-2z M165 747h1v3h-1z M185 741h4v1h-4z M144 750h2v2h-2z M165 740h3v2h-3z M182 743h1v3h-1z M151 717h1v3h-1z M159 744h4v1h-4z M168 736h1v2h-1z M150 733h3v2h-3z M189 747h3v1h-3z M145 742h1v1h-1z M183 745h3v3h-3z M145 747h3v1h-3z M156 731h1v1h-1z M154 750h2v1h-2z M157 726h2v1h-2z M172 742h4v2h-4z M198 748h2v3h-2z M186 742h1v3h-1z M183 739h2v2h-2z M155 732h4v2h-4z M173 744h2v1h-2z M167 747h2v3h-2z M172 748h3v3h-3z M168 733h1v1h-1z M176 742h2v1h-2z M149 737h2v1h-2z M149 722h1v2h-1z M166 742h1v2h-1z M183 742h3v1h-3z M191 746h4v1h-4z M147 731h2v1h-2z M161 728h1v3h-1z M159 721h1v3h-1z M163 749h2v2h-2z M150 723h2v1h-2z M164 745h2v2h-2z M146 750h4v1h-4z M181 747h2v2h-2z M173 747h3v2h-3z M150 730h2v2h-2z M169 727h1v1h-1z M171 747h2v2h-2z M170 749h1v1h-1z M145 714h2v1h-2z M179 734h4v1h-4z M148 712h4v2h-4z M165 739h3v3h-3z M193 749h1v2h-1z M169 728h2v1h-2z M153 743h3v2h-3z M155 751h1v2h-1z M154 748h3v2h-3z M156 726h4v2h-4z M151 732h1v2h-1z M165 723h1v1h-1z M187 741h1v2h-1z M151 748h4v1h-4z M192 747h3v2h-3z M155 740h2v1h-2z M190 741h3v1h-3z M168 733h2v2h-2z M146 719h2v1h-2z M159 724h3v2h-3z M157 745h3v2h-3z M156 748h3v2h-3z M159 725h4v3h-4z M182 735h4v3h-4z M156 728h3v1h-3z M179 750h1v2h-1z M145 715h1v2h-1z M167 745h3v3h-3z M152 728h3v1h-3z M196 748h1v2h-1z M151 719h3v1h-3z M167 744h1v2h-1z M168 751h2v2h-2z M171 744h4v1h-4z M158 735h3v1h-3z M162 751h2v2h-2z M174 745h1v2h-1z M159 739h1v1h-1z M149 742h4v2h-4z M193 746h1v1h-1z M174 735h4v1h-4z M170 748h1v1h-1z M165 742h3v3h-3z M175 737h3v2h-3z M156 749h2v2h-2z M158 737h2v1h-2z M179 747h2v1h-2z M151 715h2v2h-2z M192 749h2v1h-2z M177 736h1v1h-1z M185 746h1v2h-1z M171 737h2v1h-2z M151 745h3v2h-3z M163 728h4v1h-4z M167 750h2v2h-2z M149 727h3v1h-3z M163 742h1v2h-1z M151 734h4v3h-4z M176 738h4v2h-4z M146 713h2v2h-2z M145 738h2v3h-2z M158 722h2v2h-2z M157 746h2v2h-2z M148 712h3v3h-3z M199 749h4v1h-4z M147 727h3v1h-3z M157 718h1v3h-1z M203 751h4v2h-4z M154 724h1v2h-1z M162 751h2v2h-2z M196 749h4v1h-4z M149 720h4v2h-4z M155 718h3v2h-3z M161 726h1v3h-1z M155 739h1v2h-1z M156 741h3v3h-3z M169 733h2v2h-2z M155 747h1v2h-1z M175 750h1v2h-1z M153 722h4v2h-4z M154 717h2v2h-2z M184 748h1v3h-1z M156 726h1v3h-1z M145 738h2v2h-2z M192 745h4v3h-4z M171 738h1v3h-1z M158 752h1v3h-1z M172 740h2v2h-2z M146 721h2v2h-2z M182 742h1v2h-1z M193 743h1v3h-1z M150 726h4v3h-4z M156 750h4v1h-4z M175 748h1v2h-1z M161 736h3v1h-3z M152 741h1v2h-1z M144 734h1v3h-1z M182 737h3v2h-3z M153 729h2v3h-2z M153 746h4v2h-4z M146 741h2v1h-2z M172 729h2v1h-2z M164 723h4v2h-4z M189 749h4v1h-4z M156 744h3v2h-3z M164 737h4v2h-4z M183 708h1v1h-1z M202 703h2v2h-2z M210 676h4v2h-4z M206 674h3v2h-3z M206 670h1v2h-1z M208 665h1v2h-1z M215 689h2v1h-2z M200 666h2v1h-2z M206 690h3v1h-3z M208 692h1v1h-1z M217 691h1v3h-1z M205 694h1v1h-1z M189 701h2v2h-2z M181 709h3v2h-3z M186 711h2v1h-2z M210 690h2v2h-2z M212 682h1v2h-1z M200 691h2v2h-2z M208 673h4v2h-4z M212 693h2v3h-2z M210 695h2v2h-2z M211 683h3v1h-3z M206 679h4v3h-4z M205 676h1v2h-1z M214 676h4v1h-4z M207 669h3v3h-3z M212 701h2v2h-2z M223 682h1v3h-1z M200 685h2v3h-2z M210 696h3v3h-3z M185 710h2v1h-2z M202 666h2v2h-2z M187 712h2v3h-2z M184 704h2v3h-2z M196 691h3v2h-3z M200 675h1v2h-1z M186 702h2v3h-2z M189 704h1v2h-1z M191 707h1v2h-1z M211 686h4v2h-4z M199 687h1v2h-1z M199 689h2v2h-2z M217 677h3v3h-3z M208 683h2v1h-2z M191 705h2v1h-2z M188 705h3v1h-3z M220 673h3v1h-3z M223 680h3v2h-3z M192 699h3v3h-3z M210 682h4v2h-4z M195 704h2v2h-2z M217 675h2v2h-2z M209 698h1v3h-1z M202 685h4v1h-4z M209 677h3v2h-3z M215 673h1v2h-1z M213 680h1v3h-1z M218 671h1v1h-1z M212 686h4v2h-4z M212 667h1v2h-1z M214 689h4v1h-4z M213 670h1v1h-1z M191 704h3v2h-3z M183 708h1v1h-1z M219 681h3v1h-3z M212 700h1v3h-1z M206 693h2v3h-2z M190 708h3v1h-3z M207 703h3v3h-3z M203 664h4v1h-4z M202 687h4v2h-4z M212 701h1v1h-1z M202 676h1v1h-1z M222 674h2v1h-2z M211 681h3v2h-3z M214 692h3v1h-3z M200 675h4v1h-4z M214 670h3v3h-3z M222 673h2v2h-2z M187 706h4v3h-4z M211 677h4v2h-4z M206 665h3v2h-3z M212 668h3v2h-3z M221 674h1v2h-1z M210 681h2v2h-2z M207 680h3v3h-3z M221 681h3v2h-3z M218 670h2v1h-2z M207 673h2v2h-2z M210 689h2v3h-2z M206 703h2v1h-2z M216 672h4v1h-4z M206 688h4v2h-4z M215 699h3v3h-3z M211 681h4v1h-4z M211 698h2v1h-2z M206 679h1v1h-1z M214 685h4v1h-4z M194 701h2v2h-2z M206 700h1v3h-1z M206 691h3v3h-3z M218 680h1v3h-1z M208 688h4v2h-4z M195 701h4v1h-4z M187 712h3v2h-3z M182 713h3v2h-3z M187 704h2v2h-2z M210 672h2v1h-2z M199 672h2v3h-2z M212 666h4v2h-4z M207 665h2v2h-2z M207 685h3v2h-3z M213 699h3v3h-3z M214 665h1v3h-1z M204 694h1v1h-1z M205 695h3v1h-3z M200 691h2v1h-2z M192 704h2v2h-2z M221 672h2v3h-2z M191 704h1v3h-1z M197 687h1v1h-1z M198 683h1v2h-1z M182 709h2v2h-2z M203 666h1v2h-1z M221 671h2v2h-2z M186 704h4v2h-4z M214 676h1v2h-1z M204 694h3v1h-3z M203 670h4v1h-4z M208 671h2v1h-2z M202 675h2v2h-2z M191 705h2v3h-2z M201 691h3v1h-3z M204 690h1v2h-1z M205 683h1v2h-1z M185 713h2v3h-2z M203 672h3v2h-3z M217 696h3v2h-3z M205 673h4v1h-4z M201 673h1v1h-1z M215 676h1v1h-1z M217 693h2v2h-2z M211 680h1v3h-1z M213 678h1v2h-1z M220 687h2v3h-2z M187 713h1v1h-1z M217 698h1v1h-1z M205 700h2v2h-2z M202 676h1v1h-1z M222 687h1v2h-1z M199 700h2v1h-2z M205 672h3v1h-3z M211 671h2v2h-2z M197 680h1v3h-1z M189 709h2v1h-2z M212 665h1v2h-1z M210 694h3v2h-3z M201 696h1v1h-1z M200 696h1v2h-1z M205 674h1v1h-1z M215 690h2v3h-2z M218 689h1v3h-1z M210 697h1v3h-1z M205 692h2v2h-2z M194 695h4v1h-4z M197 701h1v3h-1z M221 672h1v1h-1z M210 683h4v3h-4z M219 687h2v1h-2z M206 668h1v1h-1z M191 696h4v1h-4z M216 688h2v1h-2z M205 673h1v2h-1z M208 698h4v1h-4z M202 698h3v2h-3z M198 693h2v1h-2z M215 698h4v1h-4z M211 667h1v1h-1z M207 688h2v3h-2z M200 676h3v1h-3z M207 671h2v2h-2z M188 706h2v2h-2z M201 702h3v1h-3z M193 697h2v1h-2z M204 666h2v2h-2z M217 679h1v2h-1z M211 679h2v3h-2z M195 691h2v1h-2z M212 696h3v3h-3z M200 675h1v1h-1z M221 689h3v1h-3z M191 704h1v2h-1z M206 675h1v3h-1z M210 694h1v2h-1z M185 709h2v2h-2z M208 695h3v2h-3z M218 676h1v2h-1z M213 693h4v1h-4z M188 706h2v3h-2z M199 668h2v1h-2z M192 704h3v1h-3z M212 670h1v2h-1z M210 682h4v3h-4z M199 673h1v2h-1z M206 678h4v1h-4z M213 695h1v3h-1z M205 696h3v1h-3z M203 700h1v3h-1z M217 694h2v2h-2z M223 685h3v2h-3z M195 695h2v2h-2z M221 676h1v1h-1z M208 675h1v2h-1z M219 673h3v2h-3z M216 691h3v2h-3z M206 691h1v3h-1z M203 698h1v2h-1z M223 676h4v3h-4z M221 682h1v1h-1z M203 679h3v2h-3z M206 666h3v1h-3z M187 711h3v1h-3z M189 699h2v1h-2z M203 668h1v3h-1z M194 696h1v2h-1z M215 672h2v2h-2z M198 668h4v3h-4z M209 702h1v1h-1z M191 697h1v1h-1z M185 712h3v1h-3z M202 692h2v1h-2z M200 690h2v2h-2z M211 674h1v1h-1z M197 695h1v3h-1z M191 706h2v3h-2z M216 687h1v3h-1z M182 707h4v2h-4z M209 691h2v3h-2z M202 695h3v3h-3z M208 701h1v3h-1z M201 668h1v1h-1z M205 673h1v2h-1z M215 683h1v1h-1z M204 673h2v1h-2z M221 678h2v3h-2z M209 669h1v2h-1z M201 665h2v1h-2z M199 687h3v1h-3z M198 700h1v2h-1z M213 685h1v2h-1z M212 687h4v1h-4z M184 713h1v2h-1z M214 681h2v1h-2z M209 672h1v1h-1z M214 675h1v2h-1z M188 710h1v1h-1z M209 667h1v1h-1z M186 708h3v2h-3z M216 687h1v1h-1z M211 664h3v1h-3z M198 700h4v2h-4z M190 704h1v3h-1z M189 702h1v1h-1z M208 664h3v2h-3z M211 685h1v1h-1z M197 679h3v3h-3z M197 689h1v3h-1z M208 697h2v2h-2z M193 700h1v1h-1z M207 664h4v1h-4z M217 681h3v2h-3z M221 685h2v1h-2z M219 679h2v3h-2z M182 711h2v3h-2z M205 680h2v3h-2z M188 706h1v1h-1z M207 664h1v3h-1z M206 675h1v1h-1z M219 685h4v3h-4z M199 697h2v2h-2z M217 688h1v1h-1z M211 671h1v1h-1z M194 697h3v1h-3z M185 706h1v3h-1z M185 708h1v2h-1z M201 685h4v1h-4z M201 701h4v2h-4z M213 675h3v1h-3z M203 667h2v3h-2z M200 692h1v3h-1z M214 677h1v1h-1z M216 679h1v2h-1z M205 682h3v3h-3z M204 676h3v3h-3z M200 686h2v3h-2z M210 682h3v2h-3z M201 676h4v1h-4z M210 700h2v3h-2z M198 671h2v1h-2z M205 682h2v2h-2z M208 697h1v2h-1z M214 666h3v1h-3z M199 687h1v1h-1z M198 690h1v2h-1z M217 669h2v2h-2z M188 702h2v2h-2z M200 692h1v1h-1z M214 679h3v2h-3z M212 680h3v1h-3z M209 696h2v2h-2z M212 671h2v2h-2z M211 699h3v1h-3z M187 709h2v2h-2z M220 685h1v2h-1z M222 676h4v1h-4z M191 707h4v1h-4z M206 685h4v2h-4z M211 681h4v1h-4z M189 704h3v3h-3z M203 668h3v1h-3z M216 691h1v1h-1z M200 693h2v2h-2z M210 696h3v1h-3z M218 679h1v3h-1z M217 686h1v3h-1z M202 683h4v1h-4z M211 690h1v1h-1z M200 674h2v2h-2z M219 682h2v1h-2z M212 685h1v1h-1z M206 689h4v3h-4z M216 689h1v1h-1z M205 672h3v3h-3z M207 702h2v2h-2z M206 663h3v1h-3z M201 669h2v2h-2z M217 697h4v1h-4z M218 689h3v2h-3z M200 702h1v1h-1z M210 668h4v2h-4z M206 684h4v2h-4z M208 682h4v3h-4z M207 689h1v1h-1z M193 703h3v3h-3z M212 700h4v2h-4z M206 694h1v3h-1z M196 702h2v1h-2z M209 686h2v2h-2z M212 693h2v3h-2z M184 712h2v1h-2z M206 676h3v1h-3z M211 685h1v3h-1z M208 700h4v1h-4z M215 671h4v2h-4z M200 700h2v1h-2z M204 700h1v2h-1z M114 740h1v1h-1z M139 748h2v2h-2z M136 736h4v3h-4z M101 738h1v1h-1z M132 748h2v2h-2z M122 739h3v1h-3z M136 751h3v2h-3z M102 743h2v3h-2z M129 742h2v1h-2z M138 749h2v3h-2z M133 738h4v1h-4z M106 737h1v2h-1z M122 739h3v2h-3z M115 746h2v3h-2z M136 747h1v1h-1z M103 752h2v1h-2z M113 749h1v3h-1z M114 752h4v2h-4z M113 747h1v2h-1z M120 750h1v1h-1z M107 747h4v3h-4z M101 751h1v1h-1z M125 738h1v2h-1z M121 750h1v2h-1z M106 741h1v1h-1z M137 744h1v3h-1z M142 746h2v2h-2z M124 744h4v1h-4z M108 745h2v1h-2z M122 744h3v3h-3z M115 751h3v2h-3z M130 747h2v2h-2z M119 746h1v1h-1z M140 752h4v1h-4z M124 752h2v2h-2z M101 751h3v1h-3z M104 749h3v3h-3z M114 736h4v1h-4z M115 739h1v2h-1z M104 746h2v1h-2z M128 738h1v2h-1z M126 739h4v3h-4z M110 740h1v1h-1z M140 738h3v1h-3z M140 741h2v2h-2z M116 737h1v2h-1z M131 750h4v1h-4z M141 744h4v1h-4z M100 749h1v3h-1z M124 745h1v2h-1z M141 751h2v2h-2z M135 749h2v3h-2z M104 740h1v2h-1z M129 747h2v1h-2z M107 747h2v3h-2z M127 743h1v2h-1z M109 751h1v3h-1z M119 743h3v2h-3z M140 746h1v2h-1z M134 748h1v3h-1z M107 752h1v2h-1z M133 743h2v1h-2z M119 737h3v2h-3z M104 747h1v3h-1z M126 746h4v3h-4z M110 750h4v1h-4z M133 748h1v1h-1z M113 741h2v2h-2z M107 741h3v1h-3z M100 741h3v2h-3z M130 750h1v3h-1z M138 739h2v2h-2z M111 736h4v1h-4z M117 747h2v3h-2z M129 745h2v1h-2z M109 741h4v2h-4z M113 746h2v1h-2z M133 747h2v1h-2z M123 746h3v2h-3z M112 743h4v3h-4z M126 752h2v1h-2z M124 739h1v1h-1z M115 750h2v2h-2z M119 748h2v3h-2z M101 744h4v1h-4z M116 745h2v1h-2z M135 741h2v1h-2z M102 740h2v2h-2z M127 738h2v2h-2z M134 742h3v1h-3z M108 740h2v1h-2z M124 746h2v2h-2z M118 751h3v1h-3z M140 737h1v1h-1z M137 743h1v2h-1z M134 736h1v1h-1z M133 748h3v3h-3z M134 741h4v2h-4z M128 739h2v3h-2z M126 743h2v1h-2z M101 742h2v1h-2z M143 750h3v1h-3z M134 742h4v1h-4z M127 736h3v3h-3z M111 740h2v1h-2z M122 743h1v1h-1z M127 743h3v1h-3z M107 747h1v1h-1z M136 747h4v3h-4z M123 746h4v1h-4z M130 748h1v2h-1z M106 748h2v1h-2z M131 748h2v1h-2z M119 750h4v2h-4z M136 741h2v3h-2z M126 752h1v2h-1z M131 741h1v2h-1z M109 741h3v2h-3z M117 740h3v1h-3z M128 740h4v2h-4z M112 744h3v2h-3z M137 742h3v1h-3z M139 740h3v2h-3z M120 745h1v2h-1z M128 747h3v2h-3z M102 744h2v1h-2z M104 746h3v1h-3z M125 737h3v1h-3z M135 745h4v2h-4z M112 737h4v3h-4z M128 746h2v1h-2z M143 748h1v3h-1z M103 751h1v2h-1z M122 744h2v1h-2z M131 739h1v2h-1z M104 741h4v1h-4z M128 744h1v2h-1z M113 743h4v1h-4z M106 749h4v2h-4z M117 741h2v1h-2z M102 742h3v2h-3z M143 750h2v2h-2z M134 744h2v3h-2z M186 731h1v2h-1z M183 724h4v2h-4z M184 722h2v1h-2z M185 723h1v3h-1z M183 721h4v1h-4z M187 728h1v1h-1z M181 720h3v3h-3z M180 722h3v2h-3z M184 729h2v2h-2z M185 731h3v3h-3z M183 728h2v1h-2z M218 741h1v1h-1z M219 741h2v2h-2z M225 751h4v1h-4z M214 740h4v2h-4z M216 741h4v2h-4z M224 751h2v1h-2z M222 747h2v1h-2z M224 746h3v1h-3z M217 741h2v1h-2z M219 742h4v1h-4z M223 751h3v1h-3z M211 737h1v2h-1z M214 744h2v1h-2z M215 743h2v2h-2z M214 744h1v3h-1z M222 752h1v3h-1z M225 751h1v1h-1z M223 745h2v1h-2z M219 745h3v3h-3z M218 741h3v2h-3z M213 741h1v1h-1z M228 751h3v2h-3z M799 600h2v1h-2z M794 619h1v1h-1z M794 591h2v1h-2z M794 625h2v2h-2z M792 635h4v3h-4z M798 608h1v1h-1z M799 617h1v1h-1z M796 643h2v1h-2z M798 562h3v2h-3z M799 598h1v3h-1z M799 588h3v1h-3z M796 596h1v1h-1z M799 617h1v2h-1z M796 629h2v1h-2z M798 579h1v2h-1z M796 572h2v1h-2z M795 633h2v2h-2z M796 565h4v2h-4z M793 592h4v2h-4z M795 641h2v1h-2z M796 637h2v2h-2z M794 594h3v1h-3z M793 621h1v2h-1z M798 590h1v1h-1z M796 650h1v1h-1z M799 578h2v1h-2z M799 636h2v3h-2z M798 608h2v3h-2z M796 637h1v2h-1z M792 581h3v3h-3z M796 621h3v3h-3z M795 621h4v3h-4z M798 569h1v1h-1z M794 621h4v2h-4z M792 630h1v2h-1z M795 607h3v1h-3z M798 647h2v2h-2z M795 596h1v3h-1z M796 570h4v2h-4z M795 600h1v1h-1z M798 616h2v2h-2z M796 591h1v2h-1z M794 619h4v2h-4z M799 616h1v1h-1z M799 651h3v1h-3z M797 633h1v1h-1z M798 604h2v3h-2z M795 616h2v1h-2z M796 642h1v2h-1z M795 601h3v3h-3z M795 564h2v3h-2z M798 577h3v2h-3z M799 636h2v2h-2z M794 594h1v2h-1z M796 590h1v3h-1z M799 643h1v2h-1z M798 605h2v1h-2z M797 625h1v1h-1z M798 567h1v2h-1z M795 588h3v2h-3z M796 635h3v3h-3z M795 642h3v3h-3z M797 595h4v2h-4z M798 589h2v3h-2z M795 578h2v2h-2z M798 571h2v1h-2z M795 578h4v2h-4z M796 620h4v2h-4z M797 564h2v1h-2z M797 570h1v2h-1z M793 644h3v2h-3z M796 653h3v1h-3z M799 643h2v1h-2z M797 652h1v3h-1z M795 633h4v1h-4z M793 650h1v1h-1z M793 587h1v1h-1z M798 579h1v3h-1z M795 610h3v1h-3z M800 635h2v3h-2z M798 648h1v3h-1z M799 619h2v1h-2z M794 646h1v1h-1z M792 640h1v1h-1z M796 602h2v1h-2z M793 635h4v1h-4z M799 608h2v1h-2z M798 595h4v3h-4z M795 585h1v3h-1z M795 630h2v1h-2z M797 596h1v1h-1z M798 594h3v3h-3z M799 596h3v1h-3z M793 583h1v1h-1z M800 585h2v2h-2z M792 601h3v2h-3z M797 623h2v2h-2z M797 634h1v2h-1z M796 576h1v1h-1z M798 634h3v2h-3z M798 582h2v1h-2z M794 595h2v3h-2z M796 574h4v2h-4z M795 561h4v1h-4z M793 621h4v2h-4z M797 647h2v2h-2z M799 651h2v3h-2z M800 593h2v1h-2z M798 617h2v1h-2z M794 636h4v1h-4z M794 590h4v3h-4z M799 639h1v3h-1z M92 740h1v1h-1z M58 723h1v3h-1z M61 723h2v1h-2z M97 745h2v2h-2z M86 742h4v1h-4z M90 740h3v2h-3z M77 739h1v3h-1z M81 740h2v1h-2z M80 740h2v2h-2z M78 738h1v1h-1z M66 731h1v1h-1z M66 724h4v1h-4z M89 744h1v1h-1z M79 736h1v1h-1z M85 740h3v1h-3z M93 743h2v1h-2z M78 737h1v2h-1z M94 744h2v2h-2z M84 739h2v2h-2z M78 739h1v2h-1z M75 735h2v3h-2z M80 736h2v1h-2z M56 722h4v1h-4z M66 731h3v2h-3z M79 738h3v2h-3z M65 732h1v3h-1z M61 726h2v2h-2z" fill="#000"/>
<path d="M184 742h2v1h-2z M161 724h2v1h-2z M175 732h2v1h-2z M162 721h2v1h-2z M188 740h2v1h-2z M184 742h2v1h-2z M152 734h2v1h-2z M158 732h2v1h-2z M174 747h2v1h-2z M147 746h2v1h-2z M156 720h2v1h-2z M146 732h2v1h-2z M150 724h2v1h-2z M188 746h2v1h-2z M180 737h2v1h-2z M147 714h2v1h-2z M166 745h2v1h-2z M154 732h2v1h-2z M173 741h2v1h-2z M167 731h2v1h-2z M161 744h2v1h-2z M153 729h2v1h-2z M171 745h2v1h-2z M157 748h2v1h-2z M164 746h2v1h-2z M179 744h2v1h-2z M160 736h2v1h-2z M174 738h2v1h-2z M166 740h2v1h-2z M151 733h2v1h-2z M184 746h2v1h-2z M173 742h2v1h-2z M173 749h2v1h-2z M174 747h2v1h-2z M149 712h2v1h-2z M154 743h2v1h-2z M155 748h2v1h-2z M193 747h2v1h-2z M160 724h2v1h-2z M158 745h2v1h-2z M157 748h2v1h-2z M160 726h2v1h-2z M183 736h2v1h-2z M168 746h2v1h-2z M150 742h2v1h-2z M166 743h2v1h-2z M176 737h2v1h-2z M152 745h2v1h-2z M152 735h2v1h-2z M177 738h2v1h-2z M149 713h2v1h-2z M204 751h2v1h-2z M156 718h2v1h-2z M154 722h2v1h-2z M193 746h2v1h-2z M151 727h2v1h-2z M183 737h2v1h-2z M154 746h2v1h-2z M165 723h2v1h-2z M182 709h2v1h-2z M207 680h2v1h-2z M211 697h2v1h-2z M197 691h2v1h-2z M212 686h2v1h-2z M218 678h2v1h-2z M224 680h2v1h-2z M193 700h2v1h-2z M211 682h2v1h-2z M210 677h2v1h-2z M213 686h2v1h-2z M208 704h2v1h-2z M203 687h2v1h-2z M212 681h2v1h-2z M215 671h2v1h-2z M188 707h2v1h-2z M212 677h2v1h-2z M207 665h2v1h-2z M208 681h2v1h-2z M222 681h2v1h-2z M207 688h2v1h-2z M216 700h2v1h-2z M207 692h2v1h-2z M209 688h2v1h-2z M188 712h2v1h-2z M183 713h2v1h-2z M213 666h2v1h-2z M208 685h2v1h-2z M214 700h2v1h-2z M187 704h2v1h-2z M204 672h2v1h-2z M211 684h2v1h-2z M203 698h2v1h-2z M209 695h2v1h-2z M211 683h2v1h-2z M224 685h2v1h-2z M220 673h2v1h-2z M217 691h2v1h-2z M224 677h2v1h-2z M204 679h2v1h-2z M199 669h2v1h-2z M203 696h2v1h-2z M187 708h2v1h-2z M199 700h2v1h-2z M198 680h2v1h-2z M218 681h2v1h-2z M220 686h2v1h-2z M206 683h2v1h-2z M215 679h2v1h-2z M207 685h2v1h-2z M190 705h2v1h-2z M207 690h2v1h-2z M206 673h2v1h-2z M219 689h2v1h-2z M211 668h2v1h-2z M207 684h2v1h-2z M194 704h2v1h-2z M213 700h2v1h-2z M216 671h2v1h-2z M137 737h2v1h-2z M137 751h2v1h-2z M123 739h2v1h-2z M115 752h2v1h-2z M108 748h2v1h-2z M123 745h2v1h-2z M116 751h2v1h-2z M127 740h2v1h-2z M120 743h2v1h-2z M120 737h2v1h-2z M127 747h2v1h-2z M110 741h2v1h-2z M124 746h2v1h-2z M134 749h2v1h-2z M128 737h2v1h-2z M137 748h2v1h-2z M120 750h2v1h-2z M110 741h2v1h-2z M113 744h2v1h-2z M140 740h2v1h-2z M129 747h2v1h-2z M136 745h2v1h-2z M113 738h2v1h-2z M107 749h2v1h-2z M103 742h2v1h-2z M184 724h2v1h-2z M182 721h2v1h-2z M181 722h2v1h-2z M186 732h2v1h-2z M215 740h2v1h-2z M217 741h2v1h-2z M219 741h2v1h-2z M229 751h2v1h-2z M793 636h2v1h-2z M799 562h2v1h-2z M797 565h2v1h-2z M793 582h2v1h-2z M797 622h2v1h-2z M796 622h2v1h-2z M795 621h2v1h-2z M797 570h2v1h-2z M796 602h2v1h-2z M796 588h2v1h-2z M797 636h2v1h-2z M796 643h2v1h-2z M798 595h2v1h-2z M796 578h2v1h-2z M794 644h2v1h-2z M799 596h2v1h-2z M799 595h2v1h-2z M793 601h2v1h-2z M797 574h2v1h-2z M794 621h2v1h-2z M795 591h2v1h-2z M91 740h2v1h-2z M67 731h2v1h-2z M80 738h2v1h-2z" fill="#5c4f4a"/>
<path d="M784.0 566.0 L789.0 565.0 L793.0 567.0 L797.0 566.0" fill="none" stroke="#000" stroke-width="1.4"/>
<path d="M787.0 573.0 L792.0 575.0 L796.0 573.0" fill="none" stroke="#000" stroke-width="1.4"/>
<path d="M786.0 584.0 L791.0 582.0 L796.0 581.0" fill="none" stroke="#000" stroke-width="1.4"/>
<path d="M783.0 592.0 L788.0 590.0 L793.0 593.0 L797.0 591.0" fill="none" stroke="#000" stroke-width="1.4"/>
<path d="M789.0 598.0 L794.0 600.0" fill="none" stroke="#000" stroke-width="1.4"/>
<path d="M785.0 606.0 L790.0 604.0 L795.0 605.0" fill="none" stroke="#000" stroke-width="1.4"/>
<path d="M782.0 615.0 L787.0 612.0 L792.0 614.0 L796.0 616.0" fill="none" stroke="#000" stroke-width="1.4"/>
<path d="M788.0 620.0 L793.0 622.0" fill="none" stroke="#000" stroke-width="1.4"/>
<path d="M784.0 627.0 L789.0 624.0 L794.0 625.0" fill="none" stroke="#000" stroke-width="1.4"/>
<path d="M781.0 634.0 L786.0 635.0 L791.0 637.0 L795.0 635.0" fill="none" stroke="#000" stroke-width="1.4"/>
<path d="M786.0 641.0 L791.0 643.0 L795.0 646.0" fill="none" stroke="#000" stroke-width="1.4"/>
<path d="M783.0 649.0 L789.0 650.0 L794.0 652.0" fill="none" stroke="#000" stroke-width="1.4"/>
<path d="M790.0 565.0 L791.0 571.0" fill="none" stroke="#000" stroke-width="1.4"/>
<path d="M792.0 590.0 L790.0 597.0" fill="none" stroke="#000" stroke-width="1.4"/>
<path d="M791.0 612.0 L793.0 619.0" fill="none" stroke="#000" stroke-width="1.4"/>
<path d="M787.0 635.0 L789.0 642.0" fill="none" stroke="#000" stroke-width="1.4"/>
<path d="M0.0 99.0 L148.6 99.0 L152.0 104.0 L155.0 109.0 L154.0 115.0 L150.0 122.0 L142.0 130.0 L134.0 140.0 L131.0 143.0 L182.0 143.0" fill="none" stroke="#000" stroke-width="1"/>
<path d="M194.5 0.5 L194.7 1.8 L195.7 2.7 L198.1 3.2 L198.7 4.3 L199.8 5.2 L198.5 7.0 L197.1 8.9 L196.6 10.5 L199.4 10.9 L200.8 11.8 L202.6 12.6 L202.7 14.0 L202.1 15.6 L201.1 16.5 L200.0 17.4 L199.1 18.3 L199.6 20.0 L200.8 22.0 L200.7 23.3 L199.7 24.2 L197.8 24.6 L195.5 24.8 L195.7 27.4 L198.3 28.0 L199.8 28.9 L199.9 30.2 L198.2 32.1 L197.7 33.6 L197.4 35.1 L198.4 36.1 L200.7 36.5 L202.3 36.9 L203.4 37.6 L202.5 39.7 L202.2 41.4 L201.7 43.3 L202.8 44.0 L204.8 44.1 L207.3 43.8 L208.1 44.8 L207.3 46.8 L206.3 49.0 L206.7 50.2 L207.7 51.0 L210.2 50.8 L212.7 50.5 L212.6 52.1 L211.4 54.7 L211.7 56.4 L212.4 57.6 L214.8 56.7 L216.9 56.2 L218.2 56.6 L219.0 57.6 L218.7 60.1 L218.8 60.8 L218.1 62.3 L219.3 63.3 L222.3 63.8 L223.8 64.8 L222.7 66.3 L222.3 67.8 L221.1 69.4 L220.3 70.9 L221.6 71.9 L222.4 73.0 L224.0 74.2 L225.0 75.9 L224.3 77.1 L222.9 78.0 L221.0 78.7 L218.9 79.4 L219.4 81.0 L220.2 82.7 L220.6 84.3 L221.3 86.4 L220.6 87.6 L218.3 87.7 L215.9 87.8 L214.6 88.5 L214.3 90.0 L214.8 92.2 L212.7 92.7 L211.7 91.8 L211.3 90.1 L211.5 87.5 L211.3 85.6 L207.3 86.4 L207.9 88.1 L208.5 89.8 L209.0 91.4 L206.4 91.5 L203.4 91.4 L203.4 92.8 L204.1 94.5 L204.9 96.3 L204.6 98.1 L204.3 99.6 L202.7 99.7 L200.7 99.4 L201.1 99.6 L200.5 98.3 L197.9 98.6 L196.3 98.1 L194.8 97.6 L196.2 94.8 L192.6 93.6 L192.5 94.9 L194.2 96.4 L195.1 97.8 L196.0 99.3 L195.2 100.4 L192.7 101.3 L191.9 102.5 L192.3 103.6 L194.8 105.9 L194.7 107.2 L193.4 108.2 L193.1 109.5 L189.9 109.7 L188.7 110.7 L189.4 112.4 L190.5 114.4 L190.3 115.9 L189.9 117.2 L187.3 116.8 L185.2 116.7 L185.0 118.2 L185.1 119.9 L185.5 121.9 L185.0 121.4 L185.5 122.5 L185.0 124.1 L184.1 125.8 L183.3 127.5 L183.4 128.8 L186.2 129.0 L187.9 130.5 L188.4 132.1 L187.1 132.8 L185.8 133.6 L183.7 133.9 L182.9 134.9 L182.1 135.9 L183.9 138.2 L184.6 139.9 L183.4 140.3 L180.9 141.0 L179.5 142.0 L179.5 143.3 L179.6 144.6 L181.5 146.4 L182.6 147.9 L180.6 147.7 L180.8 149.5 L180.8 151.7 L182.0 152.1 L183.5 152.1 L185.8 153.0 L184.8 153.9 L183.7 154.7 L181.9 154.6 L180.0 154.3 L178.1 154.1 L176.7 155.9 L177.4 157.8 L178.3 159.7 L178.1 161.0 L176.5 161.5 L174.2 161.7 L174.6 161.4 L173.6 163.4 L172.6 165.4 L171.2 165.4 L169.7 164.7 L167.9 162.3 L165.0 164.5 L166.9 166.3 L167.7 167.8 L168.4 169.2 L166.5 170.1 L163.8 170.7 L163.1 171.9 L164.4 174.1 L166.3 174.2 L167.5 174.9 L168.6 175.5 L168.1 177.4 L167.8 178.0 L166.4 178.6 L166.0 180.0 L166.5 182.1 L166.2 183.6 L166.0 185.2 L163.8 185.4 L161.7 184.0 L160.4 184.3 L159.7 185.6 L159.2 187.3 L159.3 190.2 L158.6 190.1 L156.6 190.1 L154.2 189.7 L152.3 189.8 L152.1 191.6 L153.0 193.8 L153.9 195.5 L152.7 196.6 L149.6 197.0 L148.2 198.0 L148.9 200.4 L150.5 201.2 L152.2 202.0 L153.3 203.1 L152.1 204.9 L151.0 206.7 L150.2 208.4 L151.5 209.4 L153.4 209.9 L154.3 211.8 L154.3 213.3 L151.4 213.3 L149.0 213.5 L149.3 215.2 L150.7 217.3 L151.0 219.0 L151.3 220.8 L148.1 220.9 L145.9 221.4 L145.9 222.0 L145.0 222.8 L144.8 224.6 L144.5 226.3 L144.4 228.3 L142.5 227.7 L140.7 227.4 L138.3 227.5 L137.2 228.5 L138.3 230.9 L139.6 233.3 L139.1 232.6 L137.1 234.7 L136.5 236.3 L135.8 237.9 L136.7 238.9 L139.0 239.4 L141.9 239.8 L141.3 243.5 L139.5 243.3 L137.4 242.8 L136.0 243.2 L134.8 243.8 L134.7 245.8 L132.4 248.5 L131.3 247.6 L131.3 245.3 L130.8 243.7 L130.9 241.2 L128.7 241.8 L128.3 242.3 L128.3 243.7 L126.7 244.4 L124.8 245.0 L123.1 245.7 L123.7 247.3 L124.0 248.8 L125.3 251.2 L124.8 252.6 L122.0 252.2 L119.5 252.1 L118.6 253.2 L119.5 255.6 L120.6 255.9 L121.1 257.1 L119.1 259.5 L118.2 261.3 L119.7 262.1 L122.1 262.5 L122.0 264.0" fill="none" stroke="#000" stroke-width="1"/>
<path d="M117.4 263.2 L118.2 264.8 L118.9 266.4 L120.3 268.2 L120.7 269.6 L118.6 270.4 L116.7 271.2 L114.5 271.9 L116.2 273.8 L117.4 275.4 L117.5 276.6 L117.8 278.0 L117.2 279.1 L114.8 279.6 L113.9 280.6 L113.2 281.7 L112.6 282.8 L114.5 284.6 L115.0 287.9 L113.4 287.7 L111.0 285.9 L109.1 285.1 L108.8 287.1 L108.7 289.4 L108.2 291.1 L107.4 292.2 L105.3 290.9 L102.8 290.6 L101.8 291.5 L102.0 293.4 L103.0 295.9 L102.3 297.1 L100.2 297.6 L98.3 296.0 L96.9 296.1 L96.2 298.7 L95.2 300.4 L93.7 300.3 L92.0 299.0 L90.0 300.9 L91.3 302.0 L93.1 303.0 L94.8 304.0 L94.4 305.5 L93.3 306.7 L91.1 307.1 L90.7 308.2 L91.5 310.0 L92.2 311.7 L93.0 313.5 L92.2 314.5 L91.7 315.6 L90.2 316.3 L88.5 316.6 L87.1 316.9 L85.9 317.3 L84.9 318.0 L85.1 320.1 L85.2 322.0 L84.5 323.1 L83.2 323.4 L81.3 323.1 L79.3 324.4 L78.5 326.0 L80.9 326.6 L83.8 327.1 L83.7 328.5 L82.9 330.1 L82.1 331.8 L81.9 333.2 L82.9 333.4 L83.5 335.2 L83.9 337.0 L83.0 337.8 L81.6 338.4 L80.0 338.8 L78.7 339.3 L77.1 339.7 L76.5 340.7 L78.3 343.4 L78.2 345.2 L77.7 346.6 L75.9 346.6 L73.5 346.0 L71.7 346.1 L71.5 347.7 L71.2 349.3 L71.7 350.1 L72.5 351.1 L72.8 352.4 L72.1 353.9 L70.9 355.7 L70.0 357.3 L71.4 358.2 L73.7 358.7 L74.9 360.6 L75.1 362.1 L73.5 362.6 L71.4 362.9 L69.1 363.2 L69.8 364.9 L71.1 367.0 L71.6 368.6 L71.0 369.7 L69.0 368.8 L70.0 370.3 L71.0 372.1 L72.1 373.0 L73.5 372.6 L74.9 371.9 L76.5 370.6 L77.9 369.8 L80.8 372.3 L79.0 373.4 L77.7 374.5 L75.8 375.5 L75.5 376.8 L77.8 378.5 L79.8 380.1 L79.2 381.4 L77.6 382.5 L75.9 384.5 L76.0 385.9 L77.8 386.1 L80.8 385.5 L81.2 386.7 L81.4 389.2 L79.3 389.5 L77.2 389.8 L77.8 391.7 L78.5 393.6 L78.6 395.2 L77.8 396.3 L76.8 397.2 L74.3 397.3 L73.0 398.0 L72.2 399.7 L73.8 401.3 L74.8 402.8 L75.5 404.2 L74.2 405.2 L72.0 406.1 L70.4 407.1 L71.2 408.6 L73.7 409.7 L73.8 411.0 L73.3 412.3 L71.8 413.9 L71.1 415.3 L71.2 416.6 L72.6 417.6 L75.0 418.5 L75.2 419.0 L74.8 420.8 L73.5 423.2 L74.0 424.4 L75.2 425.0 L78.1 424.5 L79.4 425.0 L81.2 427.8 L78.7 428.4 L76.8 429.1 L75.3 430.0 L76.1 431.6 L77.3 433.4 L77.9 435.0 L77.4 436.2 L75.5 437.0 L75.0 438.9 L75.4 440.2 L76.6 441.1 L78.7 441.4 L79.9 442.2 L82.1 442.4 L81.7 445.3 L79.3 445.9 L78.2 446.9 L78.2 448.2 L77.8 449.4 L79.0 451.1 L80.2 452.7 L80.2 454.0 L77.5 454.5 L76.0 455.4 L76.0 458.5 L77.1 459.2 L79.6 457.8 L81.4 457.5 L82.7 458.0 L82.8 460.3 L82.8 462.6 L84.0 463.2 L85.9 462.8 L88.0 461.5 L89.0 462.5 L89.3 464.7 L89.6 466.7 L90.3 468.2 L92.5 466.7 L94.6 467.5 L94.5 469.0 L94.5 470.4 L92.8 470.7 L90.6 470.7 L89.3 471.3 L88.4 472.1 L88.3 473.5 L89.7 475.9 L89.6 477.3 L87.6 477.9 L86.0 477.7 L84.2 477.1 L82.9 477.3 L82.3 478.5 L82.2 480.7 L82.1 482.8 L81.2 483.7 L78.9 482.1 L76.0 481.2 L75.4 482.6 L76.6 485.8 L76.9 488.1 L74.8 485.7 L74.5 488.2 L74.9 489.8 L76.0 490.5 L78.1 490.0 L80.2 489.4 L80.8 490.8 L81.9 491.5 L81.5 493.0 L79.7 493.0 L79.2 494.4 L79.7 496.6 L79.8 498.5 L78.8 499.3 L76.9 499.2 L75.2 499.4 L73.5 499.4 L72.5 500.3 L72.2 501.7 L72.5 503.8 L73.0 505.9 L71.6 506.4 L69.9 506.7 L67.8 506.6 L65.8 506.7 L66.0 508.5 L66.9 510.9 L67.0 512.7 L65.7 513.3 L63.3 513.0 L61.2 513.2 L60.3 514.2 L62.2 517.4 L62.1 519.0 L60.4 519.5 L58.8 520.0" fill="none" stroke="#000" stroke-width="1"/>
<path d="M57.7 519.1 L56.2 519.6 L56.5 521.4 L56.2 522.8 L56.7 524.1 L57.5 525.6 L55.3 526.7 L53.8 527.9 L52.7 529.1 L54.8 530.8 L56.0 532.3 L55.4 535.2 L53.4 534.3 L51.3 533.1 L49.9 533.1 L49.7 535.9 L51.2 537.7 L51.7 539.2 L49.2 539.6 L47.9 540.5 L45.9 541.2 L46.3 543.6 L48.3 544.0 L50.3 544.4 L51.5 545.3 L50.1 547.5 L48.1 550.0 L50.1 548.9 L50.2 551.0 L50.4 553.3 L48.8 553.4 L46.6 552.6 L45.2 553.0 L42.6 555.5 L44.3 556.3 L46.2 557.0 L48.2 557.7 L47.5 559.2 L46.7 560.6 L45.5 562.3 L46.4 560.8 L46.1 563.4 L45.4 565.0 L44.4 565.9 L43.2 566.4 L41.2 565.3 L39.4 564.3 L36.1 567.3 L38.4 568.1 L40.2 568.9 L41.9 569.8 L41.9 571.1 L39.8 572.7 L38.3 574.3 L38.9 575.4 L40.3 576.4 L41.9 577.3 L43.6 579.2 L43.2 580.4 L41.1 581.1 L39.1 581.8 L38.1 582.7 L38.4 584.1 L39.3 585.7 L41.3 587.5 L38.6 588.0" fill="none" stroke="#000" stroke-width="1"/>
<path d="M212.0 54.0 L220.0 46.0 L227.0 39.0 L239.0 33.0 L248.0 37.0 L257.0 41.0 L264.0 44.0 L270.7 47.0 L275.6 40.6 L272.0 30.6 L279.0 24.0 L287.0 17.0 L297.0 12.0 L304.0 7.0 L300.6 0.0" fill="none" stroke="#000" stroke-width="1"/>
<path d="M202.0 99.0 L264.0 99.0 L304.0 99.0 L305.6 90.4 L304.0 83.0 L317.0 84.5 L397.0 84.5 L534.0 88.8 L630.4 91.0 L733.5 90.4 L780.0 88.8 L800.0 92.0" fill="none" stroke="#000" stroke-width="1"/>
<path d="M630.4 91.0 L643.7 83.8 L667.0 77.0 L677.0 67.0 L690.0 62.0 L700.0 47.0 L720.0 34.0 L737.0 25.6 L750.0 10.6 L756.8 7.3 L760.0 14.0 L766.8 24.0 L780.0 35.6 L793.4 32.0 L800.0 25.6" fill="none" stroke="#000" stroke-width="1"/>
<path d="M780.0 88.8 L776.8 100.4 L775.0 112.0 L763.5 117.0 L753.5 132.0 L740.0 130.0 L727.0 137.0 L713.6 147.0 L707.0 138.7 L697.0 147.0 L687.0 150.0 L685.0 158.6 L673.7 163.6 L660.4 172.0 L643.7 182.0 L627.0 182.0 L610.5 190.0 L603.8 198.5 L600.5 208.5 L585.5 210.0 L583.0 220.0 L582.0 232.8" fill="none" stroke="#000" stroke-width="1"/>
<path d="M138.7 232.0 L264.0 232.0 L294.0 232.0 L486.8 232.8 L582.0 232.8 L672.0 231.8" fill="none" stroke="#000" stroke-width="1"/>
<path d="M672.0 231.8 L690.0 225.0 L707.0 220.0 L723.6 215.0 L733.5 214.0 L766.8 215.0 L800.0 217.5" fill="none" stroke="#000" stroke-width="1"/>
<path d="M672.0 231.8 L667.0 240.0 L657.0 250.0 L653.7 260.0 L658.7 264.0 L660.4 264.0 L677.0 275.6 L688.6 278.9 L697.0 294.0 L707.0 310.5 L713.6 323.9 L727.0 333.8 L737.0 347.0 L750.0 358.8 L760.0 370.4 L763.5 383.7 L773.4 395.0 L786.8 403.7 L793.4 417.0 L798.4 430.0 L800.0 443.6" fill="none" stroke="#000" stroke-width="1"/>
<path d="M294.0 232.0 L300.6 241.8 L299.6 264.0 L274.0 534.0 L275.9 565.0 L279.4 641.0" fill="none" stroke="#000" stroke-width="1"/>
<path d="M486.8 232.8 L491.8 264.0 L520.0 423.6 L522.5 434.0 L524.7 441.4 L528.4 450.2 L532.8 457.6 L533.5 463.5 L531.3 469.5 L539.5 475.4 L537.2 479.0 L531.3 482.0 L527.6 487.2 L526.9 494.6 L525.0 514.0 L526.2 533.0 L527.8 539.0 L526.0 546.3 L524.8 556.0 L523.5 563.5 L523.5 571.0 L529.0 579.0 L531.0 587.5 L533.4 594.3" fill="none" stroke="#000" stroke-width="1"/>
<path d="M0.0 409.3 L72.0 409.3" fill="none" stroke="#000" stroke-width="1"/>
<path d="M38.6 588.0 L180.2 588.5 L176.7 597.5 L172.0 609.4 L173.0 623.6 L177.9 630.8 L182.6 635.5 L186.0 647.4 L188.5 656.9 L190.9 662.8" fill="none" stroke="#000" stroke-width="1"/>
<path d="M531.0 588.0 L338.7 588.0 L335.0 598.4 L342.3 607.9 L353.0 617.4 L351.8 626.9 L350.6 636.3 L355.3 638.7" fill="none" stroke="#000" stroke-width="1"/>
<path d="M541.4 614.2 L553.0 615.0 L574.0 615.5 L614.0 617.0 L654.0 620.6 L738.7 626.4 L740.0 640.0 L744.0 644.0 L751.0 644.8 L754.0 628.0 L751.0 609.4 L759.5 603.7 L769.0 607.6 L780.0 611.5 L789.0 610.0" fill="none" stroke="#000" stroke-width="1"/>
<path d="M175.0 0.0 L187.0 14.0 L193.5 34.0 L194.5 60.5 L193.5 87.0 L183.6 104.0 L180.0 127.0 L170.0 144.0 L160.0 160.0 L147.0 180.0 L140.0 197.0 L144.0 213.5 L155.0 222.0" fill="none" stroke="#8b710c" stroke-width="1"/>
<path d="M0.0 251.0 L27.0 250.0 L54.0 245.0 L80.5 237.0 L107.0 227.0 L134.0 220.0 L155.0 220.0 L180.0 210.0 L200.0 197.0 L220.0 184.0 L240.0 174.0 L264.0 167.0 L297.0 157.0 L330.5 150.0 L357.0 140.0 L380.0 137.0 L400.0 133.7 L430.0 125.0 L463.5 133.7 L496.8 140.0 L516.7 137.0 L534.0 146.0 L554.0 152.0 L577.0 153.6 L607.0 142.0 L633.8 143.7 L653.7 137.0 L667.0 127.0 L693.6 115.0 L720.0 100.4 L733.5 92.0 L760.0 82.0 L783.4 72.0 L800.0 65.5" fill="none" stroke="#8b710c" stroke-width="1"/>
<path d="M155.0 215.0 L162.0 214.0 L169.0 217.0 L170.0 222.0 L166.0 225.0 L158.0 225.0 L154.0 221.0 L155.0 215.0" fill="none" stroke="#8b710c" stroke-width="1"/>
<path d="M193.5 64.0 L213.5 60.5 L223.5 44.0 L223.5 14.0 L233.5 0.6 L243.4 14.0 L253.4 34.0 L264.0 50.0 L284.0 52.0 L300.6 47.0 L314.0 55.5 L347.0 77.0 L373.7 100.4 L397.0 117.0 L420.0 137.0 L440.0 167.0 L457.0 193.5 L477.0 223.5 L497.0 233.4 L516.7 231.8 L534.0 223.5 L550.6 203.5 L567.0 180.0 L583.9 157.0 L607.0 142.0" fill="none" stroke="#8b710c" stroke-width="1"/>
<path d="M155.0 223.5 L160.0 243.4 L162.0 264.0 L167.0 280.6 L167.0 304.0 L172.0 330.5 L177.0 357.0 L177.0 380.0 L167.0 403.7 L157.0 423.6 L153.6 447.0 L145.0 470.0 L137.0 490.0 L130.0 510.0 L127.0 534.0 L124.5 547.7 L123.0 571.0 L119.7 595.0 L121.0 619.0 L123.0 633.0 L129.0 647.0" fill="none" stroke="#8b710c" stroke-width="1"/>
<path d="M467.0 0.0 L465.0 20.6 L457.0 44.0 L430.0 54.0 L420.0 74.0 L410.0 94.0 L403.7 110.4 L400.0 133.7 L395.0 153.6 L390.0 180.0 L392.0 207.0 L392.0 232.0 L388.7 253.0 L388.7 264.0 L390.0 264.0 L390.0 290.6 L393.7 317.0 L397.0 347.0 L398.7 363.8 L398.7 387.0 L403.7 403.7 L413.7 423.6 L420.0 443.6 L433.6 465.0 L427.0 483.5 L417.0 503.4 L407.0 523.4 L399.0 532.0 L392.0 539.0 L377.9 555.7 L358.9 569.9 L339.9 581.8 L323.3 591.3 L309.0 596.0 L300.8 605.5 L299.6 622.0" fill="none" stroke="#8b710c" stroke-width="1"/>
<path d="M433.5 125.5 L432.3 134.0 L428.8 142.0 L423.2 148.8 L416.0 154.1 L407.6 157.4 L398.5 158.5 L389.4 157.4 L381.0 154.1 L373.8 148.8 L368.2 142.0 L364.7 134.0 L363.5 125.5 L364.7 117.0 L368.2 109.0 L373.8 102.2 L381.0 96.9 L389.4 93.6 L398.5 92.5 L407.6 93.6 L416.0 96.9 L423.2 102.2 L428.8 109.0 L432.3 117.0 L433.5 125.5" fill="none" stroke="#8b710c" stroke-width="1"/>
<path d="M582.0 0.0 L580.6 14.0 L593.9 30.6 L598.8 44.0 L593.9 70.5 L597.0 90.4 L583.9 103.7 L590.5 120.0 L602.0 130.0 L607.0 142.0" fill="none" stroke="#8b710c" stroke-width="1"/>
<path d="M653.7 137.0 L663.7 147.0 L673.7 160.0 L680.0 177.0 L693.6 183.6 L720.0 180.0 L746.8 175.0 L773.4 168.6 L800.0 167.0" fill="none" stroke="#8b710c" stroke-width="1"/>
<path d="M800.0 216.8 L780.0 223.5 L760.0 233.4 L740.0 243.4 L723.6 250.0 L713.6 264.0 L680.0 279.0 L653.7 292.0 L627.0 307.0 L593.9 325.5 L577.0 342.0" fill="none" stroke="#8b710c" stroke-width="1"/>
<path d="M710.0 183.6 L720.0 200.0 L740.0 213.5 L750.0 226.8 L753.5 240.0 L763.5 264.0 L766.8 277.0 L786.7 290.6 L800.0 300.6" fill="none" stroke="#8b710c" stroke-width="1"/>
<path d="M0.0 455.0 L27.0 457.0 L60.5 462.0 L87.0 468.5 L110.0 467.0 L133.7 468.5 L147.0 475.0 L180.0 472.0 L213.5 470.0 L246.7 467.5 L264.0 463.5 L280.6 457.0 L297.0 437.0 L317.0 413.6 L333.8 397.0 L363.8 392.0 L380.0 380.0 L398.7 367.0 L410.0 358.8 L440.0 357.0 L470.0 357.0 L503.4 350.5 L534.0 347.0 L553.9 343.8 L577.0 342.0 L600.5 348.8 L633.8 358.8 L667.0 362.0 L707.0 365.4 L746.8 367.0 L766.8 357.0 L786.7 347.0 L800.0 335.5" fill="none" stroke="#8b710c" stroke-width="1"/>
<path d="M253.4 467.0 L240.0 496.8 L230.0 513.4 L223.5 534.0 L219.0 540.0 L210.0 547.7 L208.7 566.7 L200.4 595.0 L191.0 619.0 L181.4 642.6" fill="none" stroke="#8b710c" stroke-width="1"/>
<path d="M398.7 367.0 L413.7 350.5 L437.0 330.5 L457.0 314.0 L470.0 290.6 L483.5 267.0 L497.0 233.4" fill="none" stroke="#8b710c" stroke-width="1"/>
<path d="M433.6 465.0 L457.0 463.5 L480.0 457.0 L503.4 440.0 L520.0 420.0 L534.0 407.0 L540.6 397.0 L547.0 380.0 L560.6 360.0 L577.0 347.0" fill="none" stroke="#8b710c" stroke-width="1"/>
<path d="M577.0 342.0 L587.0 363.8 L600.5 390.0 L620.5 413.6 L630.4 427.0 L625.5 443.6 L623.8 476.8 L625.5 503.4 L633.8 526.7 L637.0 534.0 L643.0 554.0 L651.0 584.8 L669.4 621.8 L697.0 649.5 L715.6 692.6 L737.0 726.5 L746.4 769.6 L749.5 785.0" fill="none" stroke="#8b710c" stroke-width="1"/>
<path d="M620.5 415.0 L643.7 433.6 L667.0 450.0 L700.0 458.5 L733.5 465.0 L773.4 475.0 L800.0 483.5" fill="none" stroke="#8b710c" stroke-width="1"/>
<path d="M577.0 342.0 L570.6 323.9 L563.9 307.0 L553.9 297.0 L540.6 280.6 L534.0 267.0 L534.0 223.5" fill="none" stroke="#8b710c" stroke-width="1"/>
<path d="M577.0 342.0 L567.0 307.0 L577.0 289.0" fill="none" stroke="#8b710c" stroke-width="1"/>
<path d="M586.0 343.0 L585.3 346.8 L583.4 350.1 L580.4 352.2 L577.0 353.0 L573.6 352.2 L570.6 350.1 L568.7 346.8 L568.0 343.0 L568.7 339.2 L570.6 335.9 L573.6 333.8 L577.0 333.0 L580.4 333.8 L583.4 335.9 L585.3 339.2 L586.0 343.0" fill="none" stroke="#8b710c" stroke-width="1"/>
<path d="M0.0 655.7 L17.7 649.7 L41.4 642.6 L62.8 637.9 L77.0 640.0 L93.6 635.5 L117.0 634.0 L136.0 635.0 L155.0 640.0 L169.6 647.4 L183.8 650.9 L200.4 647.4 L217.0 642.6 L236.0 636.7 L250.0 636.7 L264.0 638.7 L283.0 634.0 L299.6 622.0 L309.0 617.4 L332.8 619.7 L354.0 626.9 L363.6 631.6 L380.0 631.6 L396.9 617.4 L415.8 612.6 L437.0 610.0 L453.8 615.0 L468.6 608.8 L508.0 610.0 L537.5 619.8 L562.0 629.7 L581.9 633.4 L611.4 634.6 L644.8 640.0 L675.6 646.4 L700.0 652.6 L731.0 655.6 L774.0 649.5" fill="none" stroke="#8b710c" stroke-width="1"/>
<path d="M77.0 640.0 L88.9 656.9 L105.5 666.0 L126.9 668.7 L141.0 675.8 L155.0 680.6 L164.8 673.5 L176.7 659.0 L181.4 649.7" fill="none" stroke="#8b710c" stroke-width="1"/>
<path d="M0.0 610.6 L7.0 619.0 L8.0 630.8 L6.0 642.6 L9.4 654.5" fill="none" stroke="#8b710c" stroke-width="1"/>
<path d="M795.7 554.0 L780.0 584.8 L777.0 615.6 L781.8 643.0 L789.5 664.9 L798.8 689.5" fill="none" stroke="#8b710c" stroke-width="1"/>
<path d="M774.0 639.0 L780.0 636.0 L786.0 642.0 L790.0 654.0 L784.0 662.0 L776.0 658.0 L773.0 646.0 L774.0 639.0" fill="none" stroke="#8b710c" stroke-width="1"/>
<path d="M534.0 216.8 L516.7 231.8" fill="none" stroke="#8b710c" stroke-width="1"/>
<path d="M381.7 380.3 L391.0 379.5 L398.3 375.9 L404.6 372.7 L409.4 368.8 L417.3 360.9 L425.2 357.7" fill="none" stroke="#8b710c" stroke-width="1"/>
<path d="M354.0 394.5 L362.7 392.5 L377.0 383.8 L382.5 375.9 L386.4 369.6 L392.0 364.4 L395.0 362.4" fill="none" stroke="#8b710c" stroke-width="1"/>
<circle cx="400.5" cy="400.5" r="159.3" fill="none" stroke="#e8e8e8" stroke-width="0.7" shape-rendering="crispEdges"/>
<circle cx="400.5" cy="400.5" r="279.2" fill="none" stroke="#e8e8e8" stroke-width="0.7" shape-rendering="crispEdges"/>
<circle cx="400.5" cy="400.5" r="399.0" fill="none" stroke="#e8e8e8" stroke-width="0.7" shape-rendering="crispEdges"/>
<circle cx="400.5" cy="400.5" r="518.8" fill="none" stroke="#e8e8e8" stroke-width="0.7" shape-rendering="crispEdges"/>
<rect x="388.5" y="0.0" width="22" height="3" fill="#5c4f4a"/>
<text x="400" y="5.3" text-anchor="middle" font-family="'Liberation Mono',monospace" font-size="11.5" fill="#ffff90">313</text>
<rect x="388.5" y="119.8" width="22" height="3" fill="#5c4f4a"/>
<text x="400" y="125.1" text-anchor="middle" font-family="'Liberation Mono',monospace" font-size="11.5" fill="#ffff90">219</text>
<rect x="388.5" y="239.7" width="22" height="3" fill="#5c4f4a"/>
<text x="400" y="245.0" text-anchor="middle" font-family="'Liberation Mono',monospace" font-size="11.5" fill="#ffff90">125</text>
<text x="400" y="364.8" text-anchor="middle" font-family="'Liberation Mono',monospace" font-size="11.5" fill="#ffff90">31</text>
<circle cx="400.5" cy="400.5" r="39.5" fill="none" stroke="#ff0000" stroke-width="1.15" shape-rendering="crispEdges"/>
</svg>
<div class="legend">
<span class="lt" style="left:3.2px;top:2px">Symbols</span>
<span class="lt" style="left:43.2px;top:2px">-CG</span>
<span class="lt" style="left:68.5px;top:2px">-IC</span>
<span class="lt" style="left:89.4px;top:2px">+CG</span>
<span class="lt" style="left:114.0px;top:2px">+IC</span>
<span class="lt" style="left:143.0px;top:2px">Strike age color codes</span>
<span class="lt" style="left:3.2px;top:15px">Recent</span>
<span class="lt" style="left:3.2px;top:28px">Old</span>
<svg class="sym" style="left:0;top:14.0px" width="240" height="12" viewBox="0 0 240 12"><circle cx="50.5" cy="6.5" r="4" fill="none" stroke="#00e0e8" stroke-width="1.1"/><path d="M48 6.5h5" shape-rendering="crispEdges" stroke="#00e0e8" stroke-width="1.1"/><path d="M72 6.5h7" stroke="#00e0e8" stroke-width="1" shape-rendering="crispEdges"/><circle cx="100.5" cy="6.5" r="4" fill="none" stroke="#00e0e8" stroke-width="1.1"/><path d="M98 6.5h5M100.5 4v5" shape-rendering="crispEdges" stroke="#00e0e8" stroke-width="1.1"/><path d="M122 6.5h7M125.5 3v7" stroke="#00e0e8" stroke-width="1" shape-rendering="crispEdges"/></svg>
<span class="lt" style="left:143.6px;top:15px;color:#ffe000">15+</span>
<span class="lt" style="left:178.8px;top:15px;color:#ffb000">30+</span>
<span class="lt" style="left:213.5px;top:15px;color:#ff9800">45+</span>
<svg class="sym" style="left:0;top:27.0px" width="240" height="12" viewBox="0 0 240 12"><circle cx="50.5" cy="6.5" r="4" fill="none" stroke="#f8f000" stroke-width="1.1"/><path d="M48 6.5h5" shape-rendering="crispEdges" stroke="#f8f000" stroke-width="1.1"/><path d="M72 6.5h7" stroke="#f8f000" stroke-width="1" shape-rendering="crispEdges"/><circle cx="100.5" cy="6.5" r="4" fill="none" stroke="#f8f000" stroke-width="1.1"/><path d="M98 6.5h5M100.5 4v5" shape-rendering="crispEdges" stroke="#f8f000" stroke-width="1.1"/><path d="M122 6.5h7M125.5 3v7" stroke="#f8f000" stroke-width="1" shape-rendering="crispEdges"/></svg>
<span class="lt" style="left:143.6px;top:28px;color:#f08810">60+</span>
<span class="lt" style="left:178.8px;top:28px;color:#e86808">75+</span>
<span class="lt" style="left:213.5px;top:28px;color:#f03000">90+</span>
</div>
<div class="copy">©2005 Astrogenic Systems</div>
<div class="pnl" style="left:812px;top:8px;width:318px;height:318px"></div>
<div class="pnl" style="left:812px;top:333px;width:318px;height:113px"></div>
<div class="pnl" style="left:812px;top:453px;width:318px;height:348px"></div>
<div class="btn b" style="left:819px;top:16px;width:56px;height:16px;background:#580000;color:#dcd4d4;letter-spacing:.3px"><span>STRIKE</span></div>
<div class="btn b" style="left:883px;top:16px;width:56px;height:16px;background:#303030;color:#c8c8c0;letter-spacing:.55px"><span>NOISE</span></div>
<div class="btn b" style="left:994px;top:16px;width:126px;height:16px;background:#303030;"><span style="position:absolute;left:4px;letter-spacing:.3px">Bng 222°</span><span style="position:absolute;right:2.4px;color:#00e000;letter-spacing:.5px">353mi</span></div>
<div class="btn s" style="left:821px;top:64px;width:80px;height:14px;background:#585858;color:#ececec">Strikes/min</div>
<div class="btn s" style="left:931px;top:64px;width:80px;height:14px;background:#585858;color:#ececec">Close/min</div>
<div class="btn s" style="left:1041px;top:64px;width:80px;height:14px;background:#585858;color:#ececec">Noises/min</div>
<div class="big" style="right:235px;top:86px;color:#fff">0</div>
<div class="big" style="right:125px;top:86px;color:#fff">0</div>
<div class="big" style="right:15px;top:86px;color:#aaa">0</div>
<div class="t " style="top:132px;right:235.0px;color:#fff;">Total Strikes</div>
<div class="t " style="top:150px;right:235.0px;color:#fff;">8</div>
<div class="t " style="top:132px;right:125.0px;color:#fff;">Total Close</div>
<div class="t " style="top:150px;right:125.0px;color:#fff;">0</div>
<div class="t " style="top:132px;right:15.0px;color:#aaa;">Total Noises</div>
<div class="t " style="top:150px;right:15.0px;color:#aaa;">56</div>
<div class="t " style="top:204px;left:821.0px;color:#b4b4b4;">Lightning type distribution</div>
<div class="hl" style="left:821px;top:216px;width:302px"></div>
<div class="t b" style="top:226px;left:821.0px;">Cloud-ground</div>
<div class="t " style="top:226px;left:912.6px;color:#fff;">+</div>
<div class="bar" style="left:925px;top:227px"><i style="width:6.4px;background:#f00000"></i></div>
<div class="t b" style="top:226px;left:979.6px;letter-spacing:-.3px;">13%</div>
<div class="t b" style="top:226px;left:1014.5px;">−</div>
<div class="bar" style="left:1028px;top:227px"><i style="width:12.2px;background:#99ccff"></i></div>
<div class="t b" style="top:226px;left:1082.2px;letter-spacing:-.3px;">25%</div>
<div class="t b" style="top:250px;left:821.0px;color:#cfcfcf;">Count</div>
<div class="t b" style="top:250px;left:925.0px;">1</div>
<div class="t b" style="top:250px;left:1028.0px;">2</div>
<div class="t b" style="top:280px;left:821.0px;">Intracloud</div>
<div class="t " style="top:280px;left:912.6px;color:#fff;">+</div>
<div class="bar" style="left:925px;top:281px"><i style="width:12.2px;background:#e860a8"></i></div>
<div class="t b" style="top:280px;left:979.6px;letter-spacing:-.3px;">25%</div>
<div class="t b" style="top:280px;left:1014.5px;">−</div>
<div class="bar" style="left:1028px;top:281px"><i style="width:18.6px;background:#00f000"></i></div>
<div class="t b" style="top:280px;left:1082.2px;letter-spacing:-.3px;">38%</div>
<div class="t b" style="top:304px;left:821.0px;color:#cfcfcf;">Count</div>
<div class="t b" style="top:304px;left:925.0px;">2</div>
<div class="t b" style="top:304px;left:1028.0px;">3</div>
<div class="date" style="left:821.5px;top:338px">1/30/2026 11:54:52 AM</div>
<div class="hl" style="left:821px;top:358px;width:302px;background:#909090"></div>
<div class="t " style="top:377px;left:821.0px;">Squelch</div>
<div class="t " style="top:377px;left:909.5px;">0</div>
<div class="t " style="top:377px;left:981.0px;">Upload</div>
<div class="t " style="top:377px;left:1060.5px;color:#b0b0b0;">Disabled</div>
<div class="t " style="top:397px;left:821.0px;">Persistence</div>
<div class="t " style="top:397px;left:909.5px;">90 min</div>
<div class="t " style="top:397px;left:981.0px;">Capture</div>
<div class="t " style="top:397px;left:1060.5px;color:#00e000;">Active</div>
<div class="t " style="top:417px;left:821.0px;">Range</div>
<div class="t " style="top:417px;left:909.5px;">313 mi</div>
<div class="t " style="top:417px;left:981.0px;">Receiver</div>
<div class="t " style="top:417px;left:1060.5px;color:#00e000;">Enabled</div>
<div class="t " style="top:464px;left:821.0px;color:#b8b8b8;">Uptime</div>
<div class="t " style="top:464px;left:909.5px;color:#fff;">455:39</div>
<div class="t " style="top:464px;left:981.0px;color:#b8b8b8;">Peak time</div>
<div class="t " style="top:464px;left:1060.5px;color:#b8b8b8;">Plot</div>
<div class="t " style="top:487px;left:821.0px;color:#b8b8b8;">Peak rate</div>
<div class="t " style="top:487px;left:909.5px;color:#fff;">2/min</div>
<div class="t " style="top:487px;left:981.0px;color:#fff;">4:12 AM</div>
<div class="t " style="top:487px;left:1060.5px;color:#fff;">Strike</div>
<div class="t " style="top:517px;left:822.0px;color:#b8b8b8;">Trend graph</div>
<div class="t " style="top:517px;left:908.0px;">60 min</div>
<svg class="graph" style="left:812px;top:530px" width="326" height="272" viewBox="812 530 326 272" shape-rendering="crispEdges"><path d="M1088.5 542V778M822 777.5H1089" stroke="#c0c0c0" stroke-width="1" fill="none"/><path d="M1084 542.5H1090 M1086 581.5H1090 M1084 620.5H1090 M1086 660.5H1090 M1084 699.5H1090 M1086 738.5H1090 M822.5 775V779 M866.5 775V779 M911.5 775V779 M955.5 775V779 M999.5 775V779 M1044.5 775V779 M1088.5 775V779 " stroke="#c0c0c0" stroke-width="1" fill="none"/><text x="1092" y="546.0" class="gt">30</text><text x="1092" y="624.0" class="gt">20</text><text x="1092" y="702.5" class="gt">10</text><text x="820.1" y="792.8" class="gt">60</text><text x="864.5" y="792.8" class="gt">50</text><text x="908.9" y="792.8" class="gt">40</text><text x="953.3" y="792.8" class="gt">30</text><text x="997.7" y="792.8" class="gt">20</text><text x="1042.1" y="792.8" class="gt">10</text><text x="1086.8" y="792.8" class="gt">0</text><text x="1100" y="792.8" class="gt">min</text></svg>
</body></html>
